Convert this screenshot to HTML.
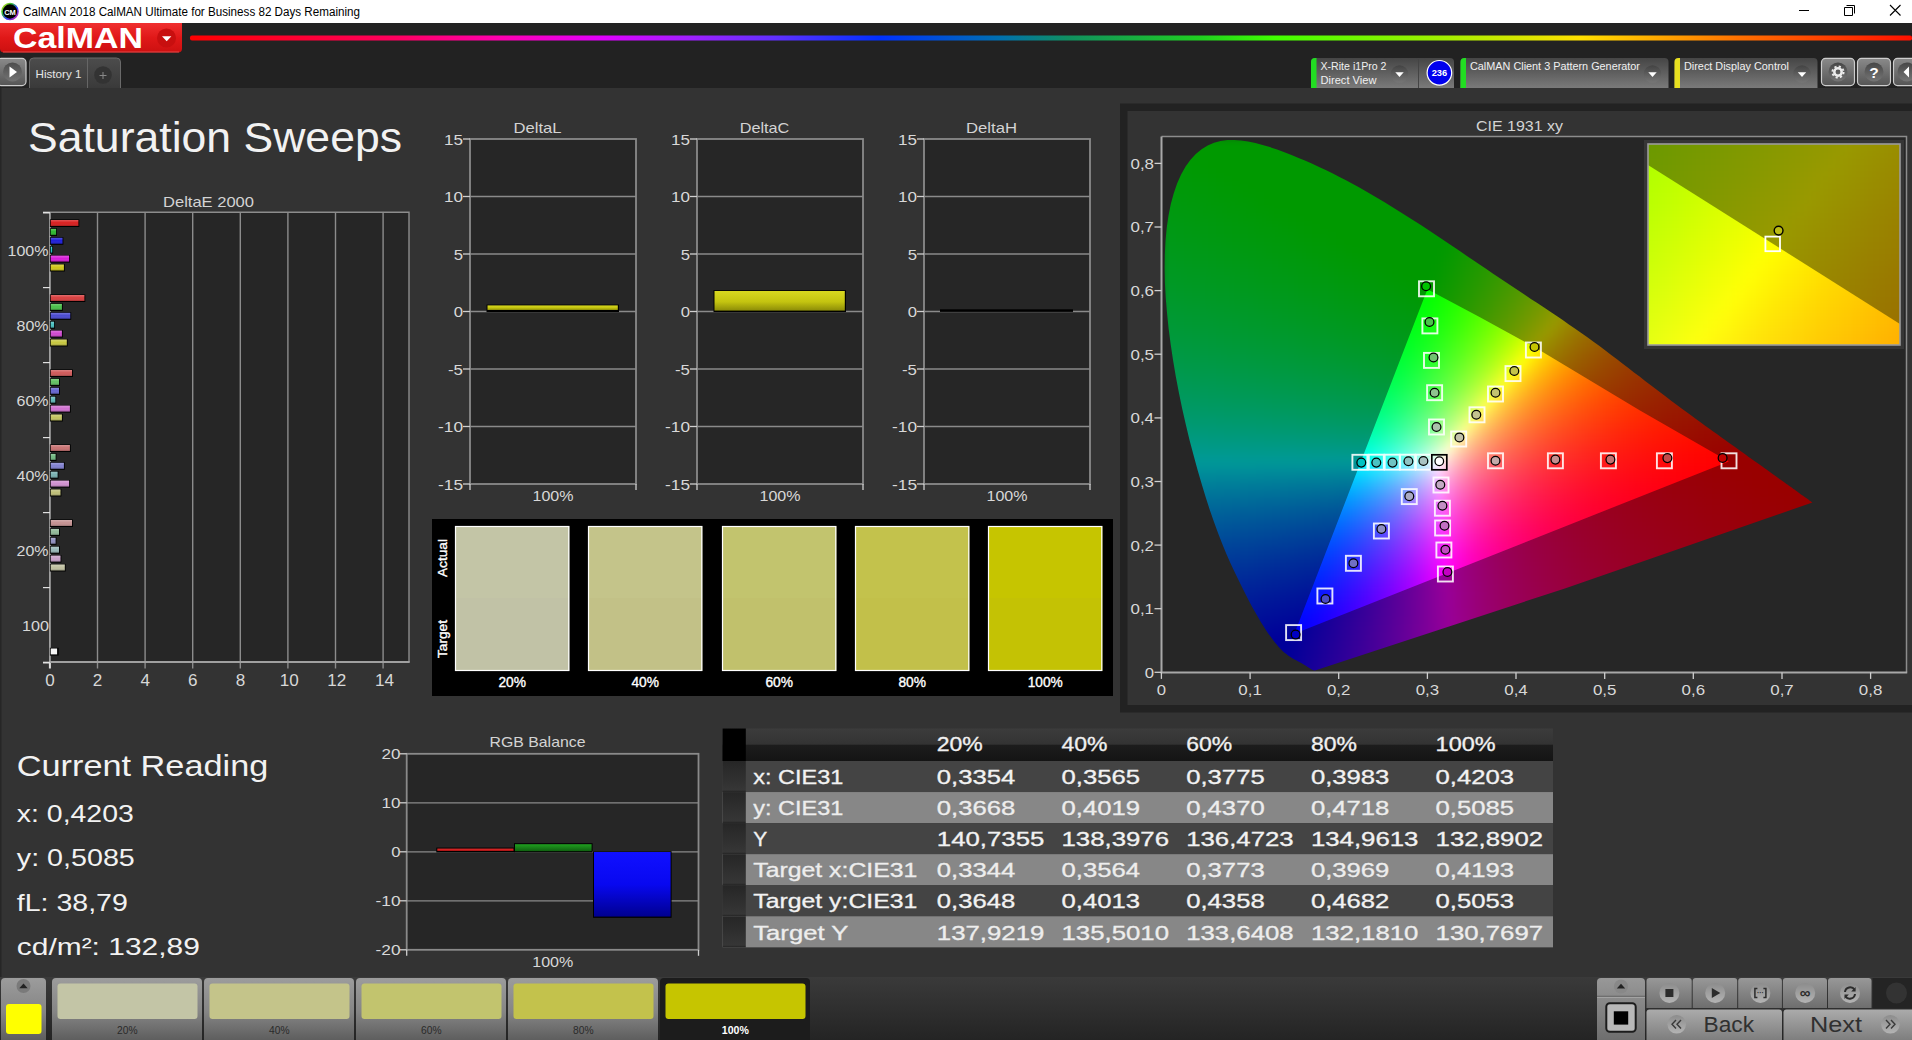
<!DOCTYPE html>
<html><head><meta charset="utf-8"><title>CalMAN 2018 - Saturation Sweeps</title>
<style>
html,body{margin:0;padding:0;background:#333;overflow:hidden}
body{width:1912px;height:1040px;font-family:"Liberation Sans",sans-serif}
svg{display:block;position:absolute;left:0;top:0}
svg text{font-family:"Liberation Sans",sans-serif;white-space:pre}
</style></head><body>
<svg width="1912" height="1040" viewBox="0 0 1912 1040">
<defs>
<linearGradient id="gRed" x1="0" y1="0" x2="0" y2="1"><stop offset="0" stop-color="#f03030"/><stop offset=".5" stop-color="#e01818"/><stop offset="1" stop-color="#cc1010"/></linearGradient>
<linearGradient id="gRb" x1="0" y1="0" x2="1" y2="0">
<stop offset="0" stop-color="#ff0000"/><stop offset=".12" stop-color="#ff0060"/><stop offset=".18" stop-color="#ff00b0"/><stop offset=".24" stop-color="#e000ff"/><stop offset=".29" stop-color="#a020ff"/><stop offset=".34" stop-color="#6030ff"/><stop offset=".40" stop-color="#0030ff"/><stop offset=".47" stop-color="#0070b0"/><stop offset=".51" stop-color="#109060"/><stop offset=".587" stop-color="#20d020"/><stop offset=".63" stop-color="#40ff00"/><stop offset=".726" stop-color="#a0f000"/><stop offset=".807" stop-color="#ffe000"/><stop offset=".90" stop-color="#ff7000"/><stop offset="1" stop-color="#ff1000"/></linearGradient>
<linearGradient id="gTab" x1="0" y1="0" x2="0" y2="1"><stop offset="0" stop-color="#454545"/><stop offset="1" stop-color="#7a7a7a"/></linearGradient>
<linearGradient id="gHist" x1="0" y1="0" x2="0" y2="1"><stop offset="0" stop-color="#4c4c4c"/><stop offset="1" stop-color="#3a3a3a"/></linearGradient>
<linearGradient id="gBtn" x1="0" y1="0" x2="0" y2="1"><stop offset="0" stop-color="#8a8a8a"/><stop offset="1" stop-color="#555"/></linearGradient>
<linearGradient id="gDdl" x1="0" y1="0" x2="0" y2="1"><stop offset="0" stop-color="#404040"/><stop offset="1" stop-color="#787878"/></linearGradient>
<radialGradient id="gDd"><stop offset="0" stop-color="#555"/><stop offset="1" stop-color="#666" stop-opacity=".0"/></radialGradient>
<linearGradient id="gIcon" x1="0" y1="0" x2="1" y2="1"><stop offset="0" stop-color="#f0e020"/><stop offset=".3" stop-color="#30c030"/><stop offset=".6" stop-color="#3040ff"/><stop offset="1" stop-color="#e020a0"/></linearGradient>
<linearGradient id="gloss" x1="0" y1="0" x2="0" y2="1"><stop offset="0" stop-color="#fff" stop-opacity=".25"/><stop offset=".5" stop-color="#fff" stop-opacity="0"/><stop offset="1" stop-color="#000" stop-opacity=".25"/></linearGradient>
<linearGradient id="gYel" x1="0" y1="0" x2="0" y2="1"><stop offset="0" stop-color="#d8d820"/><stop offset=".55" stop-color="#c4c410"/><stop offset="1" stop-color="#8c8c08"/></linearGradient>
<clipPath id="cLoc"><path d="M1315.8 670.3 L1314.7 670.4 L1313.6 670.3 L1312.6 669.9 L1311.7 669.4 L1310.8 668.9 L1309.7 668.3 L1308.5 667.5 L1307.6 666.9 L1306.6 666.3 L1305.4 665.5 L1304.1 664.7 L1302.5 663.8 L1300.8 662.8 L1299.9 662.3 L1298.9 661.8 L1297.8 661.2 L1296.7 660.6 L1295.6 660.0 L1294.4 659.4 L1293.2 658.7 L1291.9 657.9 L1290.5 657.1 L1289.2 656.2 L1287.8 655.2 L1286.4 654.1 L1284.9 653.0 L1283.4 651.7 L1281.9 650.2 L1280.2 648.6 L1278.5 646.7 L1276.7 644.6 L1274.7 642.2 L1272.7 639.5 L1270.5 636.6 L1268.2 633.4 L1265.9 629.9 L1263.4 626.1 L1260.8 621.9 L1258.1 617.3 L1255.2 612.3 L1252.2 606.9 L1249.0 600.9 L1245.7 594.5 L1242.2 587.5 L1238.5 580.1 L1234.6 572.0 L1230.6 563.4 L1226.4 554.0 L1222.3 544.0 L1218.1 533.3 L1214.0 521.9 L1209.8 509.9 L1205.7 497.2 L1201.6 483.8 L1197.5 469.8 L1193.5 455.1 L1189.5 440.0 L1185.8 424.5 L1182.2 408.7 L1178.9 392.7 L1175.8 376.6 L1173.1 360.5 L1170.7 344.4 L1168.6 328.5 L1167.0 312.8 L1165.7 297.4 L1164.9 282.5 L1164.6 268.1 L1164.8 254.2 L1165.5 240.8 L1166.7 227.9 L1168.5 215.6 L1170.8 204.1 L1173.7 193.4 L1177.1 183.5 L1181.1 174.6 L1185.6 166.6 L1190.5 159.7 L1195.8 153.9 L1201.6 149.2 L1207.7 145.5 L1214.0 142.8 L1220.5 141.0 L1227.3 140.0 L1234.1 139.9 L1241.1 140.4 L1248.2 141.4 L1255.4 143.0 L1262.6 144.9 L1269.9 147.1 L1277.1 149.5 L1284.4 152.2 L1291.5 155.0 L1298.6 157.9 L1305.5 160.8 L1312.3 163.8 L1319.1 166.9 L1325.7 170.1 L1332.4 173.3 L1339.0 176.7 L1345.5 180.1 L1352.0 183.6 L1358.5 187.1 L1365.0 190.7 L1371.4 194.4 L1377.8 198.2 L1384.2 202.0 L1390.6 205.9 L1397.0 209.9 L1403.4 213.9 L1409.7 217.9 L1416.1 222.0 L1422.4 226.1 L1428.8 230.3 L1435.1 234.5 L1441.5 238.7 L1447.8 243.0 L1454.2 247.3 L1460.5 251.6 L1466.9 255.9 L1473.3 260.2 L1479.6 264.5 L1486.0 268.8 L1492.4 273.2 L1498.8 277.5 L1505.2 281.8 L1511.6 286.1 L1518.0 290.3 L1524.4 294.6 L1530.9 298.9 L1537.3 303.1 L1543.7 307.3 L1550.0 311.6 L1556.4 315.8 L1562.7 320.1 L1568.9 324.4 L1575.2 328.7 L1581.3 333.0 L1587.4 337.3 L1593.5 341.7 L1599.5 346.1 L1605.4 350.5 L1611.2 354.9 L1617.0 359.3 L1622.7 363.7 L1628.4 368.0 L1634.0 372.4 L1639.6 376.6 L1645.1 380.9 L1650.5 385.0 L1655.8 389.1 L1661.1 393.1 L1666.4 397.0 L1671.5 400.9 L1676.6 404.7 L1681.6 408.4 L1686.5 412.0 L1691.3 415.5 L1696.0 418.9 L1700.5 422.2 L1704.8 425.4 L1709.1 428.4 L1713.2 431.4 L1717.3 434.3 L1721.2 437.2 L1725.1 440.0 L1728.9 442.7 L1732.5 445.3 L1736.1 447.8 L1739.4 450.2 L1742.7 452.5 L1745.8 454.7 L1748.7 456.9 L1751.6 458.9 L1754.4 460.9 L1757.0 462.8 L1759.5 464.6 L1762.0 466.3 L1764.3 468.0 L1766.5 469.6 L1768.6 471.1 L1770.6 472.6 L1772.6 474.0 L1774.4 475.3 L1776.2 476.5 L1777.9 477.7 L1779.5 478.9 L1781.0 480.0 L1782.5 481.0 L1783.9 482.1 L1785.2 483.0 L1786.5 483.9 L1787.8 484.8 L1789.0 485.7 L1790.1 486.5 L1791.3 487.3 L1792.3 488.1 L1793.4 488.9 L1794.4 489.6 L1795.4 490.3 L1796.3 490.9 L1797.2 491.6 L1798.0 492.2 L1798.8 492.8 L1800.3 493.9 L1801.7 494.9 L1803.0 495.7 L1804.0 496.5 L1805.0 497.2 L1805.9 497.8 L1807.0 498.6 L1808.0 499.3 L1809.0 500.0 L1809.8 500.7 L1810.7 501.3 L1811.6 501.9 L1812.4 502.5 L1564.9 588.4Z"/></clipPath>
<clipPath id="cTri"><path d="M1728.8 461.5 L1640.0 410.4 L1534.8 347.3 L1480.0 317.2 L1427.4 289.2 L1294.4 633.7 Z"/></clipPath>
<filter id="fB8" x="-5%" y="-5%" width="110%" height="110%" color-interpolation-filters="sRGB"><feGaussianBlur stdDeviation="4"/></filter>
<filter id="fB6" x="-5%" y="-5%" width="110%" height="110%" color-interpolation-filters="sRGB"><feGaussianBlur stdDeviation="3"/></filter>
<clipPath id="cIns"><rect x="1648" y="144" width="252" height="201"/></clipPath>
<clipPath id="cInsTri" clip-path="url(#cIns)"><path d="M2932.7 974.8L1147.7 -150.3L360.2 2099.9Z"/></clipPath>
<filter id="fB12" x="-10%" y="-10%" width="120%" height="120%" color-interpolation-filters="sRGB"><feGaussianBlur stdDeviation="6"/></filter>
<linearGradient id="gHdr" x1="0" y1="0" x2="0" y2="1"><stop offset="0" stop-color="#3c3c3c"/><stop offset=".48" stop-color="#333"/><stop offset=".52" stop-color="#1c1c1c"/><stop offset="1" stop-color="#141414"/></linearGradient>
<linearGradient id="gRowL" x1="0" y1="0" x2="0" y2="1"><stop offset="0" stop-color="#262626"/><stop offset=".93" stop-color="#363636"/><stop offset="1" stop-color="#222"/></linearGradient>
<linearGradient id="gBlue" x1="0" y1="0" x2="0" y2="1"><stop offset="0" stop-color="#1010ff"/><stop offset=".5" stop-color="#0808f0"/><stop offset="1" stop-color="#000090"/></linearGradient>
<linearGradient id="gGrn" x1="0" y1="0" x2="0" y2="1"><stop offset="0" stop-color="#20a020"/><stop offset="1" stop-color="#106010"/></linearGradient>
<linearGradient id="gRd" x1="0" y1="0" x2="0" y2="1"><stop offset="0" stop-color="#f03030"/><stop offset="1" stop-color="#a01010"/></linearGradient>
<linearGradient id="gBar" x1="0" y1="0" x2="0" y2="1"><stop offset="0" stop-color="#3a3a3a"/><stop offset="1" stop-color="#242424"/></linearGradient>
<linearGradient id="gSw" x1="0" y1="0" x2="0" y2="1"><stop offset="0" stop-color="#9c9c9c"/><stop offset=".55" stop-color="#858585"/><stop offset="1" stop-color="#5e5e5e"/></linearGradient>
<linearGradient id="gCt" x1="0" y1="0" x2="0" y2="1"><stop offset="0" stop-color="#989898"/><stop offset="1" stop-color="#6e6e6e"/></linearGradient>
<linearGradient id="gNav" x1="0" y1="0" x2="0" y2="1"><stop offset="0" stop-color="#ababab"/><stop offset="1" stop-color="#7e7e7e"/></linearGradient>
<linearGradient id="gDisc" x1="0" y1="0" x2="0" y2="1"><stop offset="0" stop-color="#8c8c8c"/><stop offset="1" stop-color="#b4b4b4"/></linearGradient>
</defs>
<rect x="0" y="0" width="1912" height="1040" fill="#333"/>
<g id="sec_top">
<rect x="0" y="0" width="1912" height="23" fill="#fff"/>
<circle cx="10" cy="11.5" r="8" fill="#000" stroke="url(#gIcon)" stroke-width="1.6"/>
<text x="10" y="14.5" font-size="7.5" fill="#fff" text-anchor="middle" font-weight="bold">CM</text>
<text x="23" y="16" font-size="12" fill="#000" textLength="337" lengthAdjust="spacingAndGlyphs">CalMAN 2018 CalMAN Ultimate for Business 82 Days Remaining</text>
<line x1="1799" y1="10.5" x2="1809" y2="10.5" stroke="#000" stroke-width="1"/>
<path d="M1846.5 5.5h8v8M1844.5 7.5h8v8h-8z" fill="none" stroke="#000" stroke-width="1"/>
<path d="M1890 5l10.5 10.5M1900.5 5l-10.5 10.5" stroke="#000" stroke-width="1.1" fill="none"/>
<rect x="0" y="23" width="1912" height="65" fill="#222"/>
<path d="M0 23h182v25.5a4 4 0 0 1-4 4h-174a4 4 0 0 1-4-4z" fill="url(#gRed)"/>
<path d="M3 52h176" stroke="#f06060" stroke-width="1" opacity=".7"/>
<text x="13" y="48" font-size="29.5" fill="#fff" textLength="130" lengthAdjust="spacingAndGlyphs" font-weight="bold">CalMAN</text>
<circle cx="166.5" cy="38" r="9.5" fill="#c80f0f"/><path d="M162 36.2h9.4l-4.7 5z" fill="#fff"/>
<rect x="190" y="35.5" width="1722" height="5" fill="url(#gRb)" rx="2"/>
<rect x="-3" y="58.4" width="29" height="27.2" rx="4" fill="url(#gBtn)" stroke="#cdcdcd" stroke-width="1.2"/>
<circle cx="12.5" cy="72" r="9.5" fill="url(#gDdl)" opacity=".8"/><path d="M9.5 66.5l7.5 5.5-7.5 5.5z" fill="#fff"/>
<path d="M29.5 88v-26a4 4 0 0 1 4-4h83a4 4 0 0 1 4 4v26z" fill="url(#gHist)"/><path d="M29.5 88v-26a4 4 0 0 1 4-4h83a4 4 0 0 1 4 4v26" fill="none" stroke="#6a6a6a" stroke-width="1"/>
<line x1="87.5" y1="58" x2="87.5" y2="88" stroke="#666" stroke-width="1"/>
<text x="35.5" y="78" font-size="11.5" fill="#e6e6e6" textLength="46" lengthAdjust="spacingAndGlyphs">History 1</text>
<circle cx="103" cy="75" r="8.8" fill="#333"/>
<path d="M99.5 75.5h7M103 72v7" stroke="#888" stroke-width="1"/>
<path d="M1311 88v-26a4 4 0 0 1 4-4h135a4 4 0 0 1 4 4v26z" fill="url(#gTab)"/>
<path d="M1311 88v-26a4 4 0 0 1 4-4h1.5v30z" fill="#22dd22"/>
<text x="1320.5" y="70.0" font-size="11" fill="#f0f0f0" textLength="66" lengthAdjust="spacingAndGlyphs">X-Rite i1Pro 2</text>
<text x="1320.5" y="83.7" font-size="11" fill="#f0f0f0" textLength="56" lengthAdjust="spacingAndGlyphs">Direct View</text>
<circle cx="1399.5" cy="74" r="8.8" fill="url(#gDdl)" opacity=".85"/>
<path d="M1395.3 72.3h8.4l-4.2 4.6z" fill="#fff"/>
<line x1="1418.5" y1="59" x2="1418.5" y2="88" stroke="#444" stroke-width="1"/>
<circle cx="1439.4" cy="72.8" r="12.3" fill="#0000ee" stroke="#fff" stroke-width="1.2"/>
<text x="1439.4" y="76.3" font-size="9.5" fill="#fff" text-anchor="middle" textLength="15.5" lengthAdjust="spacingAndGlyphs" font-weight="bold">236</text>
<path d="M1460.5 88v-26a4 4 0 0 1 4-4h200.0a4 4 0 0 1 4 4v26z" fill="url(#gTab)"/>
<path d="M1460.5 88v-26a4 4 0 0 1 4-4h1.5v30z" fill="#22dd22"/>
<text x="1470.0" y="70.0" font-size="11" fill="#f0f0f0" textLength="170" lengthAdjust="spacingAndGlyphs">CalMAN Client 3 Pattern Generator</text>
<circle cx="1652.5" cy="74" r="8.8" fill="url(#gDdl)" opacity=".85"/>
<path d="M1648.3 72.3h8.4l-4.2 4.6z" fill="#fff"/>
<path d="M1674.5 88v-26a4 4 0 0 1 4-4h135.0a4 4 0 0 1 4 4v26z" fill="url(#gTab)"/>
<path d="M1674.5 88v-26a4 4 0 0 1 4-4h1.5v30z" fill="#e8e020"/>
<text x="1684.0" y="70.0" font-size="11" fill="#f0f0f0" textLength="105" lengthAdjust="spacingAndGlyphs">Direct Display Control</text>
<circle cx="1802" cy="74" r="8.8" fill="url(#gDdl)" opacity=".85"/>
<path d="M1797.8 72.3h8.4l-4.2 4.6z" fill="#fff"/>
<rect x="1821.5" y="58.4" width="33.0" height="27.2" rx="4" fill="url(#gBtn)" stroke="#cdcdcd" stroke-width="1.2"/>
<rect x="1857.5" y="58.4" width="33.0" height="27.2" rx="4" fill="url(#gBtn)" stroke="#cdcdcd" stroke-width="1.2"/>
<rect x="1893.5" y="58.4" width="31.5" height="27.2" rx="4" fill="url(#gBtn)" stroke="#cdcdcd" stroke-width="1.2"/>
<circle cx="1838" cy="72" r="9.5" fill="url(#gDdl)" opacity=".9"/>
<circle cx="1838" cy="72" r="3.7" fill="none" stroke="#ececec" stroke-width="2.5"/>
<circle cx="1838" cy="72" r="5.6" fill="none" stroke="#ececec" stroke-width="1.9" stroke-dasharray="2.2 2.2"/>
<circle cx="1874" cy="72" r="9.5" fill="url(#gDdl)" opacity=".9"/>
<text x="1874" y="77.8" font-size="15.5" fill="#fff" text-anchor="middle" font-weight="bold">?</text>
<circle cx="1907" cy="72" r="9.5" fill="url(#gDdl)" opacity=".9"/><path d="M1909 66.5l-5.5 5.5 5.5 5.5z" fill="#fff"/>
</g>
<g id="sec_left">
<rect x="0" y="88" width="1.5" height="889" fill="#262626"/>
<text x="28" y="152" font-size="42" fill="#f2f2f2" textLength="374" lengthAdjust="spacingAndGlyphs">Saturation Sweeps</text>
<text x="208.5" y="206.5" font-size="15" fill="#d4d4d4" text-anchor="middle" textLength="91" lengthAdjust="spacingAndGlyphs">DeltaE 2000</text>
<rect x="49.9" y="212.2" width="359.1" height="449.8" fill="#262626"/>
<line x1="97.5" y1="212.2" x2="97.5" y2="668.5" stroke="#8c8c8c" stroke-width="1.4"/>
<line x1="145.1" y1="212.2" x2="145.1" y2="668.5" stroke="#8c8c8c" stroke-width="1.4"/>
<line x1="192.7" y1="212.2" x2="192.7" y2="668.5" stroke="#8c8c8c" stroke-width="1.4"/>
<line x1="240.3" y1="212.2" x2="240.3" y2="668.5" stroke="#8c8c8c" stroke-width="1.4"/>
<line x1="287.9" y1="212.2" x2="287.9" y2="668.5" stroke="#8c8c8c" stroke-width="1.4"/>
<line x1="335.5" y1="212.2" x2="335.5" y2="668.5" stroke="#8c8c8c" stroke-width="1.4"/>
<line x1="383.1" y1="212.2" x2="383.1" y2="668.5" stroke="#8c8c8c" stroke-width="1.4"/>
<line x1="49.9" y1="662.0" x2="49.9" y2="668.5" stroke="#ddd" stroke-width="2"/>
<path d="M49.9 212.2H409V662.0" fill="none" stroke="#8c8c8c" stroke-width="1.4"/>
<path d="M49.9 212.2V662.0H409.7" fill="none" stroke="#a0a0a0" stroke-width="1.8"/>
<line x1="43" y1="212.6" x2="49.9" y2="212.6" stroke="#e0e0e0" stroke-width="1.8"/>
<line x1="43" y1="287.6" x2="49.9" y2="287.6" stroke="#e0e0e0" stroke-width="1.2"/>
<line x1="43" y1="362.6" x2="49.9" y2="362.6" stroke="#e0e0e0" stroke-width="1.2"/>
<line x1="43" y1="437.6" x2="49.9" y2="437.6" stroke="#e0e0e0" stroke-width="1.2"/>
<line x1="43" y1="512.6" x2="49.9" y2="512.6" stroke="#e0e0e0" stroke-width="1.2"/>
<line x1="43" y1="587.6" x2="49.9" y2="587.6" stroke="#e0e0e0" stroke-width="1.2"/>
<line x1="43" y1="662.6" x2="49.9" y2="662.6" stroke="#e0e0e0" stroke-width="1.8"/>
<text x="48.5" y="255.6" font-size="15.5" fill="#d8d8d8" text-anchor="end" textLength="41" lengthAdjust="spacingAndGlyphs">100%</text>
<text x="48.5" y="330.6" font-size="15.5" fill="#d8d8d8" text-anchor="end" textLength="32" lengthAdjust="spacingAndGlyphs">80%</text>
<text x="48.5" y="405.6" font-size="15.5" fill="#d8d8d8" text-anchor="end" textLength="32" lengthAdjust="spacingAndGlyphs">60%</text>
<text x="48.5" y="480.6" font-size="15.5" fill="#d8d8d8" text-anchor="end" textLength="32" lengthAdjust="spacingAndGlyphs">40%</text>
<text x="48.5" y="555.6" font-size="15.5" fill="#d8d8d8" text-anchor="end" textLength="32" lengthAdjust="spacingAndGlyphs">20%</text>
<text x="49" y="630.6" font-size="15.5" fill="#d8d8d8" text-anchor="end" textLength="27" lengthAdjust="spacingAndGlyphs">100</text>
<text x="50.0" y="685.8" font-size="16" fill="#d8d8d8" text-anchor="middle" textLength="9.5" lengthAdjust="spacingAndGlyphs">0</text>
<text x="97.6" y="685.8" font-size="16" fill="#d8d8d8" text-anchor="middle" textLength="9.5" lengthAdjust="spacingAndGlyphs">2</text>
<text x="145.2" y="685.8" font-size="16" fill="#d8d8d8" text-anchor="middle" textLength="9.5" lengthAdjust="spacingAndGlyphs">4</text>
<text x="192.8" y="685.8" font-size="16" fill="#d8d8d8" text-anchor="middle" textLength="9.5" lengthAdjust="spacingAndGlyphs">6</text>
<text x="240.4" y="685.8" font-size="16" fill="#d8d8d8" text-anchor="middle" textLength="9.5" lengthAdjust="spacingAndGlyphs">8</text>
<text x="289.2" y="685.8" font-size="16" fill="#d8d8d8" text-anchor="middle" textLength="19" lengthAdjust="spacingAndGlyphs">10</text>
<text x="336.8" y="685.8" font-size="16" fill="#d8d8d8" text-anchor="middle" textLength="19" lengthAdjust="spacingAndGlyphs">12</text>
<text x="384.4" y="685.8" font-size="16" fill="#d8d8d8" text-anchor="middle" textLength="19" lengthAdjust="spacingAndGlyphs">14</text>
<rect x="49.9" y="219.4" width="29.4" height="7.6" fill="#000"/>
<rect x="50.699999999999996" y="220.0" width="27.7" height="6" fill="#d81c1c"/>
<rect x="50.699999999999996" y="220.0" width="27.7" height="6" fill="url(#gloss)"/>
<rect x="49.9" y="228.3" width="7.1" height="7.6" fill="#000"/>
<rect x="50.699999999999996" y="228.9" width="5.4" height="6" fill="#2cb82c"/>
<rect x="50.699999999999996" y="228.9" width="5.4" height="6" fill="url(#gloss)"/>
<rect x="49.9" y="237.2" width="13.5" height="7.6" fill="#000"/>
<rect x="50.699999999999996" y="237.8" width="11.8" height="6" fill="#1c1cd8"/>
<rect x="50.699999999999996" y="237.8" width="11.8" height="6" fill="url(#gloss)"/>
<rect x="49.9" y="246.1" width="3.2" height="7.6" fill="#000"/>
<rect x="50.699999999999996" y="246.7" width="1.5" height="6" fill="#20c8c8"/>
<rect x="50.699999999999996" y="246.7" width="1.5" height="6" fill="url(#gloss)"/>
<rect x="49.9" y="255.0" width="20.1" height="7.6" fill="#000"/>
<rect x="50.699999999999996" y="255.6" width="18.4" height="6" fill="#d81cd8"/>
<rect x="50.699999999999996" y="255.6" width="18.4" height="6" fill="url(#gloss)"/>
<rect x="49.9" y="263.9" width="14.9" height="7.6" fill="#000"/>
<rect x="50.699999999999996" y="264.5" width="13.2" height="6" fill="#d0c818"/>
<rect x="50.699999999999996" y="264.5" width="13.2" height="6" fill="url(#gloss)"/>
<rect x="49.9" y="294.4" width="35.4" height="7.6" fill="#000"/>
<rect x="50.699999999999996" y="295.0" width="33.7" height="6" fill="#d83c3c"/>
<rect x="50.699999999999996" y="295.0" width="33.7" height="6" fill="url(#gloss)"/>
<rect x="49.9" y="303.3" width="12.9" height="7.6" fill="#000"/>
<rect x="50.699999999999996" y="303.9" width="11.2" height="6" fill="#48c048"/>
<rect x="50.699999999999996" y="303.9" width="11.2" height="6" fill="url(#gloss)"/>
<rect x="49.9" y="312.2" width="21.3" height="7.6" fill="#000"/>
<rect x="50.699999999999996" y="312.8" width="19.6" height="6" fill="#4848d0"/>
<rect x="50.699999999999996" y="312.8" width="19.6" height="6" fill="url(#gloss)"/>
<rect x="49.9" y="321.1" width="5.1" height="7.6" fill="#000"/>
<rect x="50.699999999999996" y="321.7" width="3.4" height="6" fill="#48c0c0"/>
<rect x="50.699999999999996" y="321.7" width="3.4" height="6" fill="url(#gloss)"/>
<rect x="49.9" y="330.0" width="12.9" height="7.6" fill="#000"/>
<rect x="50.699999999999996" y="330.6" width="11.2" height="6" fill="#d048d0"/>
<rect x="50.699999999999996" y="330.6" width="11.2" height="6" fill="url(#gloss)"/>
<rect x="49.9" y="338.9" width="17.8" height="7.6" fill="#000"/>
<rect x="50.699999999999996" y="339.5" width="16.1" height="6" fill="#c8c840"/>
<rect x="50.699999999999996" y="339.5" width="16.1" height="6" fill="url(#gloss)"/>
<rect x="49.9" y="369.4" width="23.0" height="7.6" fill="#000"/>
<rect x="50.699999999999996" y="370.0" width="21.3" height="6" fill="#d05858"/>
<rect x="50.699999999999996" y="370.0" width="21.3" height="6" fill="url(#gloss)"/>
<rect x="49.9" y="378.3" width="10.0" height="7.6" fill="#000"/>
<rect x="50.699999999999996" y="378.9" width="8.3" height="6" fill="#60c060"/>
<rect x="50.699999999999996" y="378.9" width="8.3" height="6" fill="url(#gloss)"/>
<rect x="49.9" y="387.2" width="10.0" height="7.6" fill="#000"/>
<rect x="50.699999999999996" y="387.8" width="8.3" height="6" fill="#6464d0"/>
<rect x="50.699999999999996" y="387.8" width="8.3" height="6" fill="url(#gloss)"/>
<rect x="49.9" y="396.1" width="6.3" height="7.6" fill="#000"/>
<rect x="50.699999999999996" y="396.7" width="4.6" height="6" fill="#60b8b8"/>
<rect x="50.699999999999996" y="396.7" width="4.6" height="6" fill="url(#gloss)"/>
<rect x="49.9" y="405.0" width="20.9" height="7.6" fill="#000"/>
<rect x="50.699999999999996" y="405.6" width="19.2" height="6" fill="#d070d0"/>
<rect x="50.699999999999996" y="405.6" width="19.2" height="6" fill="url(#gloss)"/>
<rect x="49.9" y="413.9" width="12.9" height="7.6" fill="#000"/>
<rect x="50.699999999999996" y="414.5" width="11.2" height="6" fill="#c4c460"/>
<rect x="50.699999999999996" y="414.5" width="11.2" height="6" fill="url(#gloss)"/>
<rect x="49.9" y="444.4" width="20.9" height="7.6" fill="#000"/>
<rect x="50.699999999999996" y="445.0" width="19.2" height="6" fill="#c87070"/>
<rect x="50.699999999999996" y="445.0" width="19.2" height="6" fill="url(#gloss)"/>
<rect x="49.9" y="453.3" width="6.6" height="7.6" fill="#000"/>
<rect x="50.699999999999996" y="453.9" width="4.9" height="6" fill="#70b880"/>
<rect x="50.699999999999996" y="453.9" width="4.9" height="6" fill="url(#gloss)"/>
<rect x="49.9" y="462.2" width="14.9" height="7.6" fill="#000"/>
<rect x="50.699999999999996" y="462.8" width="13.2" height="6" fill="#8080d0"/>
<rect x="50.699999999999996" y="462.8" width="13.2" height="6" fill="url(#gloss)"/>
<rect x="49.9" y="471.1" width="8.6" height="7.6" fill="#000"/>
<rect x="50.699999999999996" y="471.7" width="6.9" height="6" fill="#78b0b0"/>
<rect x="50.699999999999996" y="471.7" width="6.9" height="6" fill="url(#gloss)"/>
<rect x="49.9" y="480.0" width="20.1" height="7.6" fill="#000"/>
<rect x="50.699999999999996" y="480.6" width="18.4" height="6" fill="#d090d0"/>
<rect x="50.699999999999996" y="480.6" width="18.4" height="6" fill="url(#gloss)"/>
<rect x="49.9" y="488.9" width="11.5" height="7.6" fill="#000"/>
<rect x="50.699999999999996" y="489.5" width="9.8" height="6" fill="#c0c078"/>
<rect x="50.699999999999996" y="489.5" width="9.8" height="6" fill="url(#gloss)"/>
<rect x="49.9" y="519.4" width="23.0" height="7.6" fill="#000"/>
<rect x="50.699999999999996" y="520.0" width="21.3" height="6" fill="#c49090"/>
<rect x="50.699999999999996" y="520.0" width="21.3" height="6" fill="url(#gloss)"/>
<rect x="49.9" y="528.3" width="10.0" height="7.6" fill="#000"/>
<rect x="50.699999999999996" y="528.9" width="8.3" height="6" fill="#90b898"/>
<rect x="50.699999999999996" y="528.9" width="8.3" height="6" fill="url(#gloss)"/>
<rect x="49.9" y="537.2" width="6.6" height="7.6" fill="#000"/>
<rect x="50.699999999999996" y="537.8" width="4.9" height="6" fill="#9090c0"/>
<rect x="50.699999999999996" y="537.8" width="4.9" height="6" fill="url(#gloss)"/>
<rect x="49.9" y="546.1" width="10.0" height="7.6" fill="#000"/>
<rect x="50.699999999999996" y="546.7" width="8.3" height="6" fill="#98b8b8"/>
<rect x="50.699999999999996" y="546.7" width="8.3" height="6" fill="url(#gloss)"/>
<rect x="49.9" y="555.0" width="11.5" height="7.6" fill="#000"/>
<rect x="50.699999999999996" y="555.6" width="9.8" height="6" fill="#c8a0c8"/>
<rect x="50.699999999999996" y="555.6" width="9.8" height="6" fill="url(#gloss)"/>
<rect x="49.9" y="563.9" width="15.8" height="7.6" fill="#000"/>
<rect x="50.699999999999996" y="564.5" width="14.1" height="6" fill="#c0c0a0"/>
<rect x="50.699999999999996" y="564.5" width="14.1" height="6" fill="url(#gloss)"/>
<rect x="49.9" y="647.8" width="8.8" height="7.8" fill="#000"/>
<rect x="50.699999999999996" y="648.5" width="6.4" height="5.9" fill="#f4f4f4"/>
</g>
<g id="sec_mid">
<rect x="470" y="139.0" width="166" height="345.0" fill="#262626"/>
<line x1="470" y1="196.5" x2="636" y2="196.5" stroke="#8a8a8a" stroke-width="1.3"/>
<line x1="470" y1="254.0" x2="636" y2="254.0" stroke="#8a8a8a" stroke-width="1.3"/>
<line x1="470" y1="311.5" x2="636" y2="311.5" stroke="#8a8a8a" stroke-width="1.3"/>
<line x1="470" y1="369.0" x2="636" y2="369.0" stroke="#8a8a8a" stroke-width="1.3"/>
<line x1="470" y1="426.5" x2="636" y2="426.5" stroke="#8a8a8a" stroke-width="1.3"/>
<rect x="470" y="139.0" width="166" height="345.0" fill="none" stroke="#8a8a8a" stroke-width="1.8"/>
<line x1="463" y1="139.0" x2="470" y2="139.0" stroke="#cfcfcf" stroke-width="1.3"/>
<text x="463" y="144.6" font-size="15.5" fill="#d8d8d8" text-anchor="end" textLength="19" lengthAdjust="spacingAndGlyphs">15</text>
<line x1="463" y1="196.5" x2="470" y2="196.5" stroke="#cfcfcf" stroke-width="1.3"/>
<text x="463" y="202.1" font-size="15.5" fill="#d8d8d8" text-anchor="end" textLength="19" lengthAdjust="spacingAndGlyphs">10</text>
<line x1="463" y1="254.0" x2="470" y2="254.0" stroke="#cfcfcf" stroke-width="1.3"/>
<text x="463" y="259.6" font-size="15.5" fill="#d8d8d8" text-anchor="end" textLength="9.3" lengthAdjust="spacingAndGlyphs">5</text>
<line x1="463" y1="311.5" x2="470" y2="311.5" stroke="#cfcfcf" stroke-width="1.3"/>
<text x="463" y="317.1" font-size="15.5" fill="#d8d8d8" text-anchor="end" textLength="9.3" lengthAdjust="spacingAndGlyphs">0</text>
<line x1="463" y1="369.0" x2="470" y2="369.0" stroke="#cfcfcf" stroke-width="1.3"/>
<text x="463" y="374.6" font-size="15.5" fill="#d8d8d8" text-anchor="end" textLength="15" lengthAdjust="spacingAndGlyphs">-5</text>
<line x1="463" y1="426.5" x2="470" y2="426.5" stroke="#cfcfcf" stroke-width="1.3"/>
<text x="463" y="432.1" font-size="15.5" fill="#d8d8d8" text-anchor="end" textLength="25" lengthAdjust="spacingAndGlyphs">-10</text>
<line x1="463" y1="484.0" x2="470" y2="484.0" stroke="#cfcfcf" stroke-width="1.3"/>
<text x="463" y="489.6" font-size="15.5" fill="#d8d8d8" text-anchor="end" textLength="25" lengthAdjust="spacingAndGlyphs">-15</text>
<line x1="470" y1="484.0" x2="470" y2="490.0" stroke="#cfcfcf" stroke-width="1.3"/>
<line x1="636" y1="484.0" x2="636" y2="490.0" stroke="#cfcfcf" stroke-width="1.3"/>
<text x="537.5" y="132.5" font-size="15" fill="#d4d4d4" text-anchor="middle" textLength="48" lengthAdjust="spacingAndGlyphs">DeltaL</text>
<text x="553.0" y="500.5" font-size="15.5" fill="#d8d8d8" text-anchor="middle" textLength="41" lengthAdjust="spacingAndGlyphs">100%</text>
<rect x="697" y="139.0" width="166" height="345.0" fill="#262626"/>
<line x1="697" y1="196.5" x2="863" y2="196.5" stroke="#8a8a8a" stroke-width="1.3"/>
<line x1="697" y1="254.0" x2="863" y2="254.0" stroke="#8a8a8a" stroke-width="1.3"/>
<line x1="697" y1="311.5" x2="863" y2="311.5" stroke="#8a8a8a" stroke-width="1.3"/>
<line x1="697" y1="369.0" x2="863" y2="369.0" stroke="#8a8a8a" stroke-width="1.3"/>
<line x1="697" y1="426.5" x2="863" y2="426.5" stroke="#8a8a8a" stroke-width="1.3"/>
<rect x="697" y="139.0" width="166" height="345.0" fill="none" stroke="#8a8a8a" stroke-width="1.8"/>
<line x1="690" y1="139.0" x2="697" y2="139.0" stroke="#cfcfcf" stroke-width="1.3"/>
<text x="690" y="144.6" font-size="15.5" fill="#d8d8d8" text-anchor="end" textLength="19" lengthAdjust="spacingAndGlyphs">15</text>
<line x1="690" y1="196.5" x2="697" y2="196.5" stroke="#cfcfcf" stroke-width="1.3"/>
<text x="690" y="202.1" font-size="15.5" fill="#d8d8d8" text-anchor="end" textLength="19" lengthAdjust="spacingAndGlyphs">10</text>
<line x1="690" y1="254.0" x2="697" y2="254.0" stroke="#cfcfcf" stroke-width="1.3"/>
<text x="690" y="259.6" font-size="15.5" fill="#d8d8d8" text-anchor="end" textLength="9.3" lengthAdjust="spacingAndGlyphs">5</text>
<line x1="690" y1="311.5" x2="697" y2="311.5" stroke="#cfcfcf" stroke-width="1.3"/>
<text x="690" y="317.1" font-size="15.5" fill="#d8d8d8" text-anchor="end" textLength="9.3" lengthAdjust="spacingAndGlyphs">0</text>
<line x1="690" y1="369.0" x2="697" y2="369.0" stroke="#cfcfcf" stroke-width="1.3"/>
<text x="690" y="374.6" font-size="15.5" fill="#d8d8d8" text-anchor="end" textLength="15" lengthAdjust="spacingAndGlyphs">-5</text>
<line x1="690" y1="426.5" x2="697" y2="426.5" stroke="#cfcfcf" stroke-width="1.3"/>
<text x="690" y="432.1" font-size="15.5" fill="#d8d8d8" text-anchor="end" textLength="25" lengthAdjust="spacingAndGlyphs">-10</text>
<line x1="690" y1="484.0" x2="697" y2="484.0" stroke="#cfcfcf" stroke-width="1.3"/>
<text x="690" y="489.6" font-size="15.5" fill="#d8d8d8" text-anchor="end" textLength="25" lengthAdjust="spacingAndGlyphs">-15</text>
<line x1="697" y1="484.0" x2="697" y2="490.0" stroke="#cfcfcf" stroke-width="1.3"/>
<line x1="863" y1="484.0" x2="863" y2="490.0" stroke="#cfcfcf" stroke-width="1.3"/>
<text x="764.5" y="132.5" font-size="15" fill="#d4d4d4" text-anchor="middle" textLength="49.7" lengthAdjust="spacingAndGlyphs">DeltaC</text>
<text x="780.0" y="500.5" font-size="15.5" fill="#d8d8d8" text-anchor="middle" textLength="41" lengthAdjust="spacingAndGlyphs">100%</text>
<rect x="924" y="139.0" width="166" height="345.0" fill="#262626"/>
<line x1="924" y1="196.5" x2="1090" y2="196.5" stroke="#8a8a8a" stroke-width="1.3"/>
<line x1="924" y1="254.0" x2="1090" y2="254.0" stroke="#8a8a8a" stroke-width="1.3"/>
<line x1="924" y1="311.5" x2="1090" y2="311.5" stroke="#8a8a8a" stroke-width="1.3"/>
<line x1="924" y1="369.0" x2="1090" y2="369.0" stroke="#8a8a8a" stroke-width="1.3"/>
<line x1="924" y1="426.5" x2="1090" y2="426.5" stroke="#8a8a8a" stroke-width="1.3"/>
<rect x="924" y="139.0" width="166" height="345.0" fill="none" stroke="#8a8a8a" stroke-width="1.8"/>
<line x1="917" y1="139.0" x2="924" y2="139.0" stroke="#cfcfcf" stroke-width="1.3"/>
<text x="917" y="144.6" font-size="15.5" fill="#d8d8d8" text-anchor="end" textLength="19" lengthAdjust="spacingAndGlyphs">15</text>
<line x1="917" y1="196.5" x2="924" y2="196.5" stroke="#cfcfcf" stroke-width="1.3"/>
<text x="917" y="202.1" font-size="15.5" fill="#d8d8d8" text-anchor="end" textLength="19" lengthAdjust="spacingAndGlyphs">10</text>
<line x1="917" y1="254.0" x2="924" y2="254.0" stroke="#cfcfcf" stroke-width="1.3"/>
<text x="917" y="259.6" font-size="15.5" fill="#d8d8d8" text-anchor="end" textLength="9.3" lengthAdjust="spacingAndGlyphs">5</text>
<line x1="917" y1="311.5" x2="924" y2="311.5" stroke="#cfcfcf" stroke-width="1.3"/>
<text x="917" y="317.1" font-size="15.5" fill="#d8d8d8" text-anchor="end" textLength="9.3" lengthAdjust="spacingAndGlyphs">0</text>
<line x1="917" y1="369.0" x2="924" y2="369.0" stroke="#cfcfcf" stroke-width="1.3"/>
<text x="917" y="374.6" font-size="15.5" fill="#d8d8d8" text-anchor="end" textLength="15" lengthAdjust="spacingAndGlyphs">-5</text>
<line x1="917" y1="426.5" x2="924" y2="426.5" stroke="#cfcfcf" stroke-width="1.3"/>
<text x="917" y="432.1" font-size="15.5" fill="#d8d8d8" text-anchor="end" textLength="25" lengthAdjust="spacingAndGlyphs">-10</text>
<line x1="917" y1="484.0" x2="924" y2="484.0" stroke="#cfcfcf" stroke-width="1.3"/>
<text x="917" y="489.6" font-size="15.5" fill="#d8d8d8" text-anchor="end" textLength="25" lengthAdjust="spacingAndGlyphs">-15</text>
<line x1="924" y1="484.0" x2="924" y2="490.0" stroke="#cfcfcf" stroke-width="1.3"/>
<line x1="1090" y1="484.0" x2="1090" y2="490.0" stroke="#cfcfcf" stroke-width="1.3"/>
<text x="991.5" y="132.5" font-size="15" fill="#d4d4d4" text-anchor="middle" textLength="51" lengthAdjust="spacingAndGlyphs">DeltaH</text>
<text x="1007.0" y="500.5" font-size="15.5" fill="#d8d8d8" text-anchor="middle" textLength="41" lengthAdjust="spacingAndGlyphs">100%</text>
<rect x="486.5" y="304.6" width="132.5" height="7.499999999999977" fill="#000"/>
<rect x="487.5" y="305.4" width="130.3" height="4.6" fill="url(#gYel)"/>
<rect x="713.5" y="290.2" width="132.5" height="21.900000000000013" fill="#000"/>
<rect x="714.5" y="291.0" width="130.3" height="19.6" fill="url(#gYel)"/>
<rect x="940" y="309.3" width="133" height="2.6" fill="#000"/>
<rect x="432" y="519" width="681" height="177" fill="#000"/>
<rect x="455" y="526" width="114.3" height="72" fill="#c3c5a6"/>
<rect x="455" y="598" width="114.3" height="73" fill="#c1c2a6"/>
<rect x="455.5" y="526.5" width="113.3" height="144" fill="none" stroke="#fff" stroke-width="1.2"/>
<text x="512.2" y="687.1" font-size="14" fill="#fff" text-anchor="middle" textLength="27.5" lengthAdjust="spacingAndGlyphs" stroke="#fff" stroke-width=".35">20%</text>
<rect x="588" y="526" width="114.3" height="72" fill="#c4c48a"/>
<rect x="588" y="598" width="114.3" height="73" fill="#c2c187"/>
<rect x="588.5" y="526.5" width="113.3" height="144" fill="none" stroke="#fff" stroke-width="1.2"/>
<text x="645.2" y="687.1" font-size="14" fill="#fff" text-anchor="middle" textLength="27.5" lengthAdjust="spacingAndGlyphs" stroke="#fff" stroke-width=".35">40%</text>
<rect x="722" y="526" width="114.3" height="72" fill="#c2c46e"/>
<rect x="722" y="598" width="114.3" height="73" fill="#c1c16c"/>
<rect x="722.5" y="526.5" width="113.3" height="144" fill="none" stroke="#fff" stroke-width="1.2"/>
<text x="779.2" y="687.1" font-size="14" fill="#fff" text-anchor="middle" textLength="27.5" lengthAdjust="spacingAndGlyphs" stroke="#fff" stroke-width=".35">60%</text>
<rect x="855" y="526" width="114.3" height="72" fill="#c3c24c"/>
<rect x="855" y="598" width="114.3" height="73" fill="#c2c04a"/>
<rect x="855.5" y="526.5" width="113.3" height="144" fill="none" stroke="#fff" stroke-width="1.2"/>
<text x="912.2" y="687.1" font-size="14" fill="#fff" text-anchor="middle" textLength="27.5" lengthAdjust="spacingAndGlyphs" stroke="#fff" stroke-width=".35">80%</text>
<rect x="988" y="526" width="114.3" height="72" fill="#c6c500"/>
<rect x="988" y="598" width="114.3" height="73" fill="#c4c204"/>
<rect x="988.5" y="526.5" width="113.3" height="144" fill="none" stroke="#fff" stroke-width="1.2"/>
<text x="1045.2" y="687.1" font-size="14" fill="#fff" text-anchor="middle" textLength="35" lengthAdjust="spacingAndGlyphs" stroke="#fff" stroke-width=".35">100%</text>
<text transform="translate(446.5 558) rotate(-90)" font-size="13.5" fill="#fff" stroke="#fff" stroke-width=".35" text-anchor="middle" textLength="38" lengthAdjust="spacingAndGlyphs">Actual</text>
<text transform="translate(446.5 639) rotate(-90)" font-size="13.5" fill="#fff" stroke="#fff" stroke-width=".35" text-anchor="middle" textLength="38" lengthAdjust="spacingAndGlyphs">Target</text>
</g>
<g id="sec_cie">
<rect x="1120" y="103.5" width="800" height="609" fill="#222"/>
<rect x="1127.5" y="111" width="800" height="594" fill="#333"/>
<text x="1519.5" y="131" font-size="15" fill="#d4d4d4" text-anchor="middle" textLength="87" lengthAdjust="spacingAndGlyphs">CIE 1931 xy</text>
<rect x="1161.5" y="136.5" width="745.0" height="535.9" fill="#262626"/>
<g clip-path="url(#cLoc)"><g filter="url(#fB8)" stroke-width="8.5" fill="none"><path d="M1192 140h96.5" stroke="#009900"/><path d="M1184 148h128.5" stroke="#009900"/><path d="M1176 156h8.5" stroke="#009902"/><path d="M1184 156h8.5" stroke="#009901"/><path d="M1192 156h136.5" stroke="#009900"/><path d="M1168 164h16.5" stroke="#009904"/><path d="M1184 164h8.5" stroke="#009902"/><path d="M1192 164h16.5" stroke="#009901"/><path d="M1208 164h136.5" stroke="#009900"/><path d="M1168 172h8.5" stroke="#009906"/><path d="M1176 172h8.5" stroke="#009905"/><path d="M1184 172h8.5" stroke="#009904"/><path d="M1192 172h8.5" stroke="#009903"/><path d="M1200 172h8.5" stroke="#009902"/><path d="M1208 172h8.5" stroke="#009901"/><path d="M1216 172h144.5" stroke="#009900"/><path d="M1160 180h16.5" stroke="#009908"/><path d="M1176 180h8.5" stroke="#009907"/><path d="M1184 180h8.5" stroke="#009906"/><path d="M1192 180h8.5" stroke="#009905"/><path d="M1200 180h8.5" stroke="#009904"/><path d="M1208 180h8.5" stroke="#009903"/><path d="M1216 180h8.5" stroke="#009902"/><path d="M1224 180h8.5" stroke="#009901"/><path d="M1232 180h144.5" stroke="#009900"/><path d="M1160 188h16.5" stroke="#00990a"/><path d="M1176 188h16.5" stroke="#009908"/><path d="M1192 188h8.5" stroke="#009907"/><path d="M1200 188h8.5" stroke="#009906"/><path d="M1208 188h8.5" stroke="#009905"/><path d="M1216 188h8.5" stroke="#009904"/><path d="M1224 188h8.5" stroke="#009903"/><path d="M1232 188h8.5" stroke="#009902"/><path d="M1240 188h8.5" stroke="#009901"/><path d="M1248 188h144.5" stroke="#009900"/><path d="M1160 196h8.5" stroke="#00990d"/><path d="M1168 196h8.5" stroke="#00990b"/><path d="M1176 196h16.5" stroke="#00990a"/><path d="M1192 196h16.5" stroke="#009908"/><path d="M1208 196h8.5" stroke="#009907"/><path d="M1216 196h16.5" stroke="#009905"/><path d="M1232 196h8.5" stroke="#009904"/><path d="M1240 196h16.5" stroke="#009902"/><path d="M1256 196h8.5" stroke="#009901"/><path d="M1264 196h136.5" stroke="#009900"/><path d="M1160 204h8.5" stroke="#00990e"/><path d="M1168 204h16.5" stroke="#00990d"/><path d="M1184 204h16.5" stroke="#00990b"/><path d="M1200 204h8.5" stroke="#00990a"/><path d="M1208 204h16.5" stroke="#009908"/><path d="M1224 204h8.5" stroke="#009907"/><path d="M1232 204h16.5" stroke="#009905"/><path d="M1248 204h8.5" stroke="#009904"/><path d="M1256 204h8.5" stroke="#009902"/><path d="M1264 204h16.5" stroke="#009901"/><path d="M1280 204h136.5" stroke="#009900"/><path d="M1160 212h16.5" stroke="#009910"/><path d="M1176 212h16.5" stroke="#00990e"/><path d="M1192 212h8.5" stroke="#00990d"/><path d="M1200 212h16.5" stroke="#00990b"/><path d="M1216 212h8.5" stroke="#00990a"/><path d="M1224 212h16.5" stroke="#009908"/><path d="M1240 212h8.5" stroke="#009907"/><path d="M1248 212h8.5" stroke="#009905"/><path d="M1256 212h16.5" stroke="#009904"/><path d="M1272 212h8.5" stroke="#009902"/><path d="M1280 212h8.5" stroke="#009901"/><path d="M1288 212h136.5" stroke="#009900"/><path d="M1160 220h8.5" stroke="#009913"/><path d="M1168 220h16.5" stroke="#009911"/><path d="M1184 220h8.5" stroke="#009910"/><path d="M1192 220h16.5" stroke="#00990e"/><path d="M1208 220h8.5" stroke="#00990d"/><path d="M1216 220h8.5" stroke="#00990c"/><path d="M1224 220h8.5" stroke="#00990b"/><path d="M1232 220h8.5" stroke="#00990a"/><path d="M1240 220h16.5" stroke="#009908"/><path d="M1256 220h8.5" stroke="#009907"/><path d="M1264 220h8.5" stroke="#009905"/><path d="M1272 220h8.5" stroke="#009904"/><path d="M1280 220h8.5" stroke="#009903"/><path d="M1288 220h8.5" stroke="#009902"/><path d="M1296 220h8.5" stroke="#009901"/><path d="M1304 220h136.5" stroke="#009900"/><path d="M1160 228h16.5" stroke="#009914"/><path d="M1176 228h8.5" stroke="#009913"/><path d="M1184 228h8.5" stroke="#009912"/><path d="M1192 228h8.5" stroke="#009911"/><path d="M1200 228h8.5" stroke="#009910"/><path d="M1208 228h8.5" stroke="#00990f"/><path d="M1216 228h8.5" stroke="#00990e"/><path d="M1224 228h8.5" stroke="#00990d"/><path d="M1232 228h8.5" stroke="#00990c"/><path d="M1240 228h8.5" stroke="#00990b"/><path d="M1248 228h8.5" stroke="#00990a"/><path d="M1256 228h16.5" stroke="#009908"/><path d="M1272 228h8.5" stroke="#009907"/><path d="M1280 228h8.5" stroke="#009905"/><path d="M1288 228h8.5" stroke="#009904"/><path d="M1296 228h8.5" stroke="#009903"/><path d="M1304 228h8.5" stroke="#009902"/><path d="M1312 228h8.5" stroke="#009901"/><path d="M1320 228h128.5" stroke="#009900"/><path d="M1160 236h8.5" stroke="#009917"/><path d="M1168 236h8.5" stroke="#009916"/><path d="M1176 236h8.5" stroke="#009915"/><path d="M1184 236h8.5" stroke="#009914"/><path d="M1192 236h8.5" stroke="#009913"/><path d="M1200 236h8.5" stroke="#009912"/><path d="M1208 236h8.5" stroke="#009911"/><path d="M1216 236h8.5" stroke="#009910"/><path d="M1224 236h8.5" stroke="#00990f"/><path d="M1232 236h8.5" stroke="#00990e"/><path d="M1240 236h8.5" stroke="#00990d"/><path d="M1248 236h8.5" stroke="#00990c"/><path d="M1256 236h8.5" stroke="#00990b"/><path d="M1264 236h8.5" stroke="#00990a"/><path d="M1272 236h16.5" stroke="#009908"/><path d="M1288 236h8.5" stroke="#009907"/><path d="M1296 236h8.5" stroke="#009905"/><path d="M1304 236h8.5" stroke="#009904"/><path d="M1312 236h8.5" stroke="#009903"/><path d="M1320 236h8.5" stroke="#009902"/><path d="M1328 236h8.5" stroke="#009901"/><path d="M1336 236h112.5" stroke="#009900"/><path d="M1448 236h8.5" stroke="#039900"/><path d="M1456 236h8.5" stroke="#089900"/><path d="M1160 244h8.5" stroke="#009919"/><path d="M1168 244h8.5" stroke="#009918"/><path d="M1176 244h8.5" stroke="#009917"/><path d="M1184 244h16.5" stroke="#009916"/><path d="M1200 244h8.5" stroke="#009914"/><path d="M1208 244h16.5" stroke="#009913"/><path d="M1224 244h8.5" stroke="#009911"/><path d="M1232 244h8.5" stroke="#009910"/><path d="M1240 244h8.5" stroke="#00990f"/><path d="M1248 244h8.5" stroke="#00990e"/><path d="M1256 244h8.5" stroke="#00990d"/><path d="M1264 244h8.5" stroke="#00990c"/><path d="M1272 244h8.5" stroke="#00990b"/><path d="M1280 244h8.5" stroke="#00990a"/><path d="M1288 244h8.5" stroke="#009908"/><path d="M1296 244h8.5" stroke="#009907"/><path d="M1304 244h8.5" stroke="#009906"/><path d="M1312 244h8.5" stroke="#009905"/><path d="M1320 244h8.5" stroke="#009904"/><path d="M1328 244h8.5" stroke="#009902"/><path d="M1336 244h8.5" stroke="#009901"/><path d="M1344 244h104.5" stroke="#009900"/><path d="M1448 244h8.5" stroke="#059900"/><path d="M1456 244h8.5" stroke="#0b9900"/><path d="M1464 244h8.5" stroke="#109900"/><path d="M1160 252h8.5" stroke="#00991c"/><path d="M1168 252h16.5" stroke="#00991a"/><path d="M1184 252h8.5" stroke="#009919"/><path d="M1192 252h8.5" stroke="#009918"/><path d="M1200 252h8.5" stroke="#009917"/><path d="M1208 252h8.5" stroke="#009916"/><path d="M1216 252h8.5" stroke="#009915"/><path d="M1224 252h8.5" stroke="#009914"/><path d="M1232 252h8.5" stroke="#009913"/><path d="M1240 252h16.5" stroke="#009911"/><path d="M1256 252h8.5" stroke="#009910"/><path d="M1264 252h8.5" stroke="#00990e"/><path d="M1272 252h8.5" stroke="#00990d"/><path d="M1280 252h8.5" stroke="#00990c"/><path d="M1288 252h8.5" stroke="#00990b"/><path d="M1296 252h8.5" stroke="#00990a"/><path d="M1304 252h8.5" stroke="#009908"/><path d="M1312 252h8.5" stroke="#009907"/><path d="M1320 252h8.5" stroke="#009906"/><path d="M1328 252h8.5" stroke="#009905"/><path d="M1336 252h8.5" stroke="#009904"/><path d="M1344 252h8.5" stroke="#009902"/><path d="M1352 252h8.5" stroke="#009901"/><path d="M1360 252h80.5" stroke="#009900"/><path d="M1440 252h8.5" stroke="#029900"/><path d="M1448 252h8.5" stroke="#079900"/><path d="M1456 252h8.5" stroke="#0d9900"/><path d="M1464 252h8.5" stroke="#139900"/><path d="M1472 252h8.5" stroke="#199900"/><path d="M1480 252h8.5" stroke="#1f9900"/><path d="M1160 260h8.5" stroke="#00991e"/><path d="M1168 260h8.5" stroke="#00991d"/><path d="M1176 260h8.5" stroke="#00991c"/><path d="M1184 260h8.5" stroke="#00991b"/><path d="M1192 260h8.5" stroke="#00991a"/><path d="M1200 260h8.5" stroke="#009919"/><path d="M1208 260h8.5" stroke="#009918"/><path d="M1216 260h8.5" stroke="#009917"/><path d="M1224 260h8.5" stroke="#009916"/><path d="M1232 260h8.5" stroke="#009915"/><path d="M1240 260h8.5" stroke="#009914"/><path d="M1248 260h8.5" stroke="#009913"/><path d="M1256 260h8.5" stroke="#009912"/><path d="M1264 260h8.5" stroke="#009911"/><path d="M1272 260h8.5" stroke="#009910"/><path d="M1280 260h16.5" stroke="#00990e"/><path d="M1296 260h8.5" stroke="#00990d"/><path d="M1304 260h8.5" stroke="#00990b"/><path d="M1312 260h8.5" stroke="#00990a"/><path d="M1320 260h8.5" stroke="#009908"/><path d="M1328 260h8.5" stroke="#009907"/><path d="M1336 260h8.5" stroke="#009906"/><path d="M1344 260h8.5" stroke="#009905"/><path d="M1352 260h8.5" stroke="#009904"/><path d="M1360 260h8.5" stroke="#009902"/><path d="M1368 260h8.5" stroke="#009901"/><path d="M1376 260h64.5" stroke="#009900"/><path d="M1440 260h8.5" stroke="#049900"/><path d="M1448 260h8.5" stroke="#0a9900"/><path d="M1456 260h8.5" stroke="#109900"/><path d="M1464 260h8.5" stroke="#169900"/><path d="M1472 260h8.5" stroke="#1c9900"/><path d="M1480 260h8.5" stroke="#229900"/><path d="M1488 260h8.5" stroke="#299900"/><path d="M1160 268h16.5" stroke="#009920"/><path d="M1176 268h8.5" stroke="#00991f"/><path d="M1184 268h8.5" stroke="#00991e"/><path d="M1192 268h8.5" stroke="#00991d"/><path d="M1200 268h8.5" stroke="#00991c"/><path d="M1208 268h8.5" stroke="#00991b"/><path d="M1216 268h8.5" stroke="#00991a"/><path d="M1224 268h8.5" stroke="#009919"/><path d="M1232 268h8.5" stroke="#009918"/><path d="M1240 268h8.5" stroke="#009917"/><path d="M1248 268h8.5" stroke="#009916"/><path d="M1256 268h16.5" stroke="#009914"/><path d="M1272 268h8.5" stroke="#009913"/><path d="M1280 268h8.5" stroke="#009911"/><path d="M1288 268h8.5" stroke="#009910"/><path d="M1296 268h8.5" stroke="#00990f"/><path d="M1304 268h8.5" stroke="#00990e"/><path d="M1312 268h8.5" stroke="#00990d"/><path d="M1320 268h8.5" stroke="#00990b"/><path d="M1328 268h8.5" stroke="#00990a"/><path d="M1336 268h8.5" stroke="#009908"/><path d="M1344 268h8.5" stroke="#009907"/><path d="M1352 268h8.5" stroke="#009906"/><path d="M1360 268h8.5" stroke="#009905"/><path d="M1368 268h8.5" stroke="#009903"/><path d="M1376 268h8.5" stroke="#009902"/><path d="M1384 268h8.5" stroke="#009901"/><path d="M1392 268h40.5" stroke="#009900"/><path d="M1432 268h8.5" stroke="#019900"/><path d="M1440 268h8.5" stroke="#069900"/><path d="M1448 268h8.5" stroke="#0c9900"/><path d="M1456 268h8.5" stroke="#139900"/><path d="M1464 268h8.5" stroke="#199900"/><path d="M1472 268h8.5" stroke="#1f9900"/><path d="M1480 268h8.5" stroke="#259900"/><path d="M1488 268h8.5" stroke="#2c9900"/><path d="M1496 268h8.5" stroke="#339900"/><path d="M1504 268h8.5" stroke="#3a9900"/><path d="M1160 276h8.5" stroke="#009923"/><path d="M1168 276h16.5" stroke="#009922"/><path d="M1184 276h16.5" stroke="#009920"/><path d="M1200 276h8.5" stroke="#00991f"/><path d="M1208 276h16.5" stroke="#00991d"/><path d="M1224 276h8.5" stroke="#00991c"/><path d="M1232 276h16.5" stroke="#00991a"/><path d="M1248 276h8.5" stroke="#009919"/><path d="M1256 276h8.5" stroke="#009917"/><path d="M1264 276h8.5" stroke="#009916"/><path d="M1272 276h8.5" stroke="#009915"/><path d="M1280 276h8.5" stroke="#009914"/><path d="M1288 276h8.5" stroke="#009913"/><path d="M1296 276h8.5" stroke="#009911"/><path d="M1304 276h8.5" stroke="#009910"/><path d="M1312 276h8.5" stroke="#00990f"/><path d="M1320 276h8.5" stroke="#00990e"/><path d="M1328 276h8.5" stroke="#00990d"/><path d="M1336 276h8.5" stroke="#00990b"/><path d="M1344 276h8.5" stroke="#00990a"/><path d="M1352 276h8.5" stroke="#009909"/><path d="M1360 276h8.5" stroke="#009907"/><path d="M1368 276h8.5" stroke="#009906"/><path d="M1376 276h8.5" stroke="#009905"/><path d="M1384 276h8.5" stroke="#009903"/><path d="M1392 276h8.5" stroke="#009902"/><path d="M1400 276h32.5" stroke="#009900"/><path d="M1432 276h8.5" stroke="#029900"/><path d="M1440 276h8.5" stroke="#089900"/><path d="M1448 276h8.5" stroke="#0f9900"/><path d="M1456 276h8.5" stroke="#159900"/><path d="M1464 276h8.5" stroke="#1c9900"/><path d="M1472 276h8.5" stroke="#229900"/><path d="M1480 276h8.5" stroke="#299900"/><path d="M1488 276h8.5" stroke="#309900"/><path d="M1496 276h8.5" stroke="#379900"/><path d="M1504 276h8.5" stroke="#3e9900"/><path d="M1512 276h8.5" stroke="#469900"/><path d="M1160 284h8.5" stroke="#009926"/><path d="M1168 284h8.5" stroke="#009925"/><path d="M1176 284h8.5" stroke="#009924"/><path d="M1184 284h8.5" stroke="#009923"/><path d="M1192 284h16.5" stroke="#009922"/><path d="M1208 284h8.5" stroke="#009920"/><path d="M1216 284h16.5" stroke="#00991f"/><path d="M1232 284h8.5" stroke="#00991d"/><path d="M1240 284h8.5" stroke="#00991c"/><path d="M1248 284h8.5" stroke="#00991b"/><path d="M1256 284h8.5" stroke="#00991a"/><path d="M1264 284h8.5" stroke="#009919"/><path d="M1272 284h8.5" stroke="#009918"/><path d="M1280 284h8.5" stroke="#009917"/><path d="M1288 284h8.5" stroke="#009916"/><path d="M1296 284h8.5" stroke="#009914"/><path d="M1304 284h8.5" stroke="#009913"/><path d="M1312 284h8.5" stroke="#009912"/><path d="M1320 284h8.5" stroke="#009911"/><path d="M1328 284h8.5" stroke="#009910"/><path d="M1336 284h8.5" stroke="#00990e"/><path d="M1344 284h8.5" stroke="#00990d"/><path d="M1352 284h8.5" stroke="#00990b"/><path d="M1360 284h8.5" stroke="#00990a"/><path d="M1368 284h8.5" stroke="#009909"/><path d="M1376 284h8.5" stroke="#009907"/><path d="M1384 284h8.5" stroke="#009906"/><path d="M1392 284h8.5" stroke="#009904"/><path d="M1400 284h8.5" stroke="#009903"/><path d="M1408 284h8.5" stroke="#009901"/><path d="M1416 284h16.5" stroke="#009900"/><path d="M1432 284h8.5" stroke="#059900"/><path d="M1440 284h8.5" stroke="#0b9900"/><path d="M1448 284h8.5" stroke="#119900"/><path d="M1456 284h8.5" stroke="#189900"/><path d="M1464 284h8.5" stroke="#1f9900"/><path d="M1472 284h8.5" stroke="#269900"/><path d="M1480 284h8.5" stroke="#2c9900"/><path d="M1488 284h8.5" stroke="#349900"/><path d="M1496 284h8.5" stroke="#3b9900"/><path d="M1504 284h8.5" stroke="#439900"/><path d="M1512 284h8.5" stroke="#4a9900"/><path d="M1520 284h8.5" stroke="#529900"/><path d="M1528 284h8.5" stroke="#5a9900"/><path d="M1160 292h8.5" stroke="#009929"/><path d="M1168 292h8.5" stroke="#009928"/><path d="M1176 292h8.5" stroke="#009927"/><path d="M1184 292h8.5" stroke="#009926"/><path d="M1192 292h16.5" stroke="#009925"/><path d="M1208 292h8.5" stroke="#009923"/><path d="M1216 292h16.5" stroke="#009922"/><path d="M1232 292h8.5" stroke="#009920"/><path d="M1240 292h8.5" stroke="#00991f"/><path d="M1248 292h8.5" stroke="#00991e"/><path d="M1256 292h8.5" stroke="#00991d"/><path d="M1264 292h8.5" stroke="#00991c"/><path d="M1272 292h8.5" stroke="#00991b"/><path d="M1280 292h8.5" stroke="#00991a"/><path d="M1288 292h8.5" stroke="#009919"/><path d="M1296 292h8.5" stroke="#009917"/><path d="M1304 292h8.5" stroke="#009916"/><path d="M1312 292h8.5" stroke="#009915"/><path d="M1320 292h8.5" stroke="#009914"/><path d="M1328 292h8.5" stroke="#009913"/><path d="M1336 292h8.5" stroke="#009911"/><path d="M1344 292h8.5" stroke="#009910"/><path d="M1352 292h8.5" stroke="#00990e"/><path d="M1360 292h8.5" stroke="#00990d"/><path d="M1368 292h8.5" stroke="#00990b"/><path d="M1376 292h8.5" stroke="#00990a"/><path d="M1384 292h8.5" stroke="#009909"/><path d="M1392 292h8.5" stroke="#009907"/><path d="M1400 292h8.5" stroke="#009905"/><path d="M1408 292h8.5" stroke="#009904"/><path d="M1416 292h8.5" stroke="#009902"/><path d="M1424 292h8.5" stroke="#019901"/><path d="M1432 292h8.5" stroke="#089900"/><path d="M1440 292h8.5" stroke="#0e9900"/><path d="M1448 292h8.5" stroke="#149900"/><path d="M1456 292h8.5" stroke="#1c9900"/><path d="M1464 292h8.5" stroke="#229900"/><path d="M1472 292h8.5" stroke="#299900"/><path d="M1480 292h8.5" stroke="#319900"/><path d="M1488 292h8.5" stroke="#389900"/><path d="M1496 292h8.5" stroke="#409900"/><path d="M1504 292h8.5" stroke="#479900"/><path d="M1512 292h8.5" stroke="#4f9900"/><path d="M1520 292h8.5" stroke="#589900"/><path d="M1528 292h8.5" stroke="#609900"/><path d="M1536 292h8.5" stroke="#689900"/><path d="M1160 300h8.5" stroke="#00992c"/><path d="M1168 300h8.5" stroke="#00992b"/><path d="M1176 300h8.5" stroke="#00992a"/><path d="M1184 300h8.5" stroke="#009929"/><path d="M1192 300h16.5" stroke="#009928"/><path d="M1208 300h8.5" stroke="#009926"/><path d="M1216 300h16.5" stroke="#009925"/><path d="M1232 300h8.5" stroke="#009923"/><path d="M1240 300h16.5" stroke="#009922"/><path d="M1256 300h8.5" stroke="#009920"/><path d="M1264 300h8.5" stroke="#00991f"/><path d="M1272 300h8.5" stroke="#00991e"/><path d="M1280 300h8.5" stroke="#00991d"/><path d="M1288 300h8.5" stroke="#00991c"/><path d="M1296 300h8.5" stroke="#00991a"/><path d="M1304 300h8.5" stroke="#009919"/><path d="M1312 300h8.5" stroke="#009918"/><path d="M1320 300h8.5" stroke="#009917"/><path d="M1328 300h8.5" stroke="#009916"/><path d="M1336 300h8.5" stroke="#009914"/><path d="M1344 300h8.5" stroke="#009913"/><path d="M1352 300h8.5" stroke="#009911"/><path d="M1360 300h8.5" stroke="#009910"/><path d="M1368 300h8.5" stroke="#00990f"/><path d="M1376 300h8.5" stroke="#00990d"/><path d="M1384 300h8.5" stroke="#00990c"/><path d="M1392 300h8.5" stroke="#00990a"/><path d="M1400 300h8.5" stroke="#009909"/><path d="M1408 300h8.5" stroke="#009907"/><path d="M1416 300h8.5" stroke="#009905"/><path d="M1424 300h8.5" stroke="#049904"/><path d="M1432 300h8.5" stroke="#0a9902"/><path d="M1440 300h8.5" stroke="#119901"/><path d="M1448 300h8.5" stroke="#189900"/><path d="M1456 300h8.5" stroke="#1f9900"/><path d="M1464 300h8.5" stroke="#269900"/><path d="M1472 300h8.5" stroke="#2d9900"/><path d="M1480 300h8.5" stroke="#359900"/><path d="M1488 300h8.5" stroke="#3d9900"/><path d="M1496 300h8.5" stroke="#449900"/><path d="M1504 300h8.5" stroke="#4c9900"/><path d="M1512 300h8.5" stroke="#559900"/><path d="M1520 300h8.5" stroke="#5d9900"/><path d="M1528 300h8.5" stroke="#669900"/><path d="M1536 300h8.5" stroke="#6f9900"/><path d="M1544 300h8.5" stroke="#789900"/><path d="M1552 300h8.5" stroke="#829900"/><path d="M1160 308h8.5" stroke="#00992f"/><path d="M1168 308h16.5" stroke="#00992e"/><path d="M1184 308h16.5" stroke="#00992c"/><path d="M1200 308h8.5" stroke="#00992b"/><path d="M1208 308h16.5" stroke="#009929"/><path d="M1224 308h8.5" stroke="#009928"/><path d="M1232 308h16.5" stroke="#009926"/><path d="M1248 308h8.5" stroke="#009925"/><path d="M1256 308h8.5" stroke="#009923"/><path d="M1264 308h8.5" stroke="#009922"/><path d="M1272 308h8.5" stroke="#009921"/><path d="M1280 308h8.5" stroke="#009920"/><path d="M1288 308h8.5" stroke="#00991f"/><path d="M1296 308h8.5" stroke="#00991e"/><path d="M1304 308h8.5" stroke="#00991d"/><path d="M1312 308h8.5" stroke="#00991c"/><path d="M1320 308h8.5" stroke="#00991a"/><path d="M1328 308h8.5" stroke="#009919"/><path d="M1336 308h8.5" stroke="#009917"/><path d="M1344 308h8.5" stroke="#009916"/><path d="M1352 308h8.5" stroke="#009915"/><path d="M1360 308h8.5" stroke="#009913"/><path d="M1368 308h8.5" stroke="#009912"/><path d="M1376 308h8.5" stroke="#009911"/><path d="M1384 308h8.5" stroke="#00990f"/><path d="M1392 308h8.5" stroke="#00990e"/><path d="M1400 308h8.5" stroke="#00990c"/><path d="M1408 308h8.5" stroke="#00990a"/><path d="M1416 308h8.5" stroke="#009909"/><path d="M1424 308h8.5" stroke="#079907"/><path d="M1432 308h8.5" stroke="#0d9905"/><path d="M1440 308h8.5" stroke="#149904"/><path d="M1448 308h8.5" stroke="#1b9902"/><path d="M1456 308h8.5" stroke="#229900"/><path d="M1464 308h8.5" stroke="#2a9900"/><path d="M1472 308h8.5" stroke="#319900"/><path d="M1480 308h8.5" stroke="#399900"/><path d="M1488 308h8.5" stroke="#419900"/><path d="M1496 308h8.5" stroke="#499900"/><path d="M1504 308h8.5" stroke="#529900"/><path d="M1512 308h8.5" stroke="#5b9900"/><path d="M1520 308h8.5" stroke="#649900"/><path d="M1528 308h8.5" stroke="#6d9900"/><path d="M1536 308h8.5" stroke="#769900"/><path d="M1544 308h8.5" stroke="#809900"/><path d="M1552 308h8.5" stroke="#899900"/><path d="M1560 308h8.5" stroke="#949900"/><path d="M1160 316h16.5" stroke="#009932"/><path d="M1176 316h8.5" stroke="#009931"/><path d="M1184 316h8.5" stroke="#009930"/><path d="M1192 316h8.5" stroke="#00992f"/><path d="M1200 316h8.5" stroke="#00992e"/><path d="M1208 316h8.5" stroke="#00992d"/><path d="M1216 316h8.5" stroke="#00992c"/><path d="M1224 316h8.5" stroke="#00992b"/><path d="M1232 316h8.5" stroke="#00992a"/><path d="M1240 316h8.5" stroke="#009929"/><path d="M1248 316h8.5" stroke="#009928"/><path d="M1256 316h8.5" stroke="#009927"/><path d="M1264 316h8.5" stroke="#009926"/><path d="M1272 316h8.5" stroke="#009925"/><path d="M1280 316h8.5" stroke="#009923"/><path d="M1288 316h8.5" stroke="#009922"/><path d="M1296 316h8.5" stroke="#009921"/><path d="M1304 316h8.5" stroke="#009920"/><path d="M1312 316h8.5" stroke="#00991f"/><path d="M1320 316h8.5" stroke="#00991d"/><path d="M1328 316h8.5" stroke="#00991c"/><path d="M1336 316h8.5" stroke="#00991b"/><path d="M1344 316h8.5" stroke="#00991a"/><path d="M1352 316h8.5" stroke="#009918"/><path d="M1360 316h8.5" stroke="#009917"/><path d="M1368 316h8.5" stroke="#009916"/><path d="M1376 316h8.5" stroke="#009914"/><path d="M1384 316h8.5" stroke="#009913"/><path d="M1392 316h8.5" stroke="#009911"/><path d="M1400 316h8.5" stroke="#009910"/><path d="M1408 316h8.5" stroke="#00990e"/><path d="M1416 316h8.5" stroke="#02990c"/><path d="M1424 316h8.5" stroke="#0a990b"/><path d="M1440 316h8.5" stroke="#179907"/><path d="M1448 316h8.5" stroke="#1f9905"/><path d="M1456 316h8.5" stroke="#269904"/><path d="M1464 316h8.5" stroke="#2e9902"/><path d="M1472 316h8.5" stroke="#369900"/><path d="M1480 316h8.5" stroke="#3e9900"/><path d="M1488 316h8.5" stroke="#469900"/><path d="M1496 316h8.5" stroke="#4f9900"/><path d="M1504 316h8.5" stroke="#589900"/><path d="M1512 316h8.5" stroke="#619900"/><path d="M1520 316h8.5" stroke="#6a9900"/><path d="M1528 316h8.5" stroke="#739900"/><path d="M1536 316h8.5" stroke="#7d9900"/><path d="M1544 316h8.5" stroke="#889900"/><path d="M1552 316h8.5" stroke="#929900"/><path d="M1560 316h8.5" stroke="#999500"/><path d="M1568 316h8.5" stroke="#998c00"/><path d="M1576 316h8.5" stroke="#998300"/><path d="M1160 324h8.5" stroke="#009936"/><path d="M1168 324h8.5" stroke="#009935"/><path d="M1176 324h8.5" stroke="#009934"/><path d="M1184 324h8.5" stroke="#009933"/><path d="M1192 324h8.5" stroke="#009932"/><path d="M1200 324h16.5" stroke="#009931"/><path d="M1216 324h16.5" stroke="#00992f"/><path d="M1232 324h8.5" stroke="#00992e"/><path d="M1240 324h8.5" stroke="#00992c"/><path d="M1248 324h16.5" stroke="#00992b"/><path d="M1264 324h8.5" stroke="#009929"/><path d="M1272 324h8.5" stroke="#009928"/><path d="M1280 324h8.5" stroke="#009927"/><path d="M1288 324h8.5" stroke="#009926"/><path d="M1296 324h8.5" stroke="#009925"/><path d="M1304 324h8.5" stroke="#009923"/><path d="M1312 324h8.5" stroke="#009922"/><path d="M1320 324h8.5" stroke="#009921"/><path d="M1328 324h8.5" stroke="#009920"/><path d="M1336 324h8.5" stroke="#00991f"/><path d="M1344 324h8.5" stroke="#00991d"/><path d="M1352 324h8.5" stroke="#00991c"/><path d="M1360 324h8.5" stroke="#00991a"/><path d="M1368 324h8.5" stroke="#009919"/><path d="M1376 324h8.5" stroke="#009917"/><path d="M1384 324h8.5" stroke="#009916"/><path d="M1392 324h8.5" stroke="#009914"/><path d="M1400 324h8.5" stroke="#009913"/><path d="M1408 324h8.5" stroke="#009911"/><path d="M1416 324h8.5" stroke="#059910"/><path d="M1424 324h8.5" stroke="#0d990e"/><path d="M1456 324h8.5" stroke="#2b9907"/><path d="M1464 324h8.5" stroke="#329905"/><path d="M1472 324h8.5" stroke="#3b9903"/><path d="M1480 324h8.5" stroke="#439901"/><path d="M1488 324h8.5" stroke="#4c9900"/><path d="M1496 324h8.5" stroke="#559900"/><path d="M1504 324h8.5" stroke="#5e9900"/><path d="M1512 324h8.5" stroke="#679900"/><path d="M1520 324h8.5" stroke="#719900"/><path d="M1528 324h8.5" stroke="#7b9900"/><path d="M1536 324h8.5" stroke="#859900"/><path d="M1544 324h8.5" stroke="#909900"/><path d="M1552 324h8.5" stroke="#999700"/><path d="M1560 324h8.5" stroke="#998d00"/><path d="M1568 324h8.5" stroke="#998400"/><path d="M1576 324h8.5" stroke="#997c00"/><path d="M1584 324h8.5" stroke="#997400"/><path d="M1160 332h8.5" stroke="#00993a"/><path d="M1168 332h16.5" stroke="#009938"/><path d="M1184 332h8.5" stroke="#009937"/><path d="M1192 332h8.5" stroke="#009936"/><path d="M1200 332h8.5" stroke="#009935"/><path d="M1208 332h8.5" stroke="#009934"/><path d="M1216 332h8.5" stroke="#009933"/><path d="M1224 332h8.5" stroke="#009932"/><path d="M1232 332h8.5" stroke="#009931"/><path d="M1240 332h8.5" stroke="#009930"/><path d="M1248 332h8.5" stroke="#00992f"/><path d="M1256 332h8.5" stroke="#00992e"/><path d="M1264 332h8.5" stroke="#00992d"/><path d="M1272 332h8.5" stroke="#00992c"/><path d="M1280 332h8.5" stroke="#00992b"/><path d="M1288 332h8.5" stroke="#00992a"/><path d="M1296 332h8.5" stroke="#009929"/><path d="M1304 332h8.5" stroke="#009928"/><path d="M1312 332h8.5" stroke="#009926"/><path d="M1320 332h8.5" stroke="#009925"/><path d="M1328 332h8.5" stroke="#009923"/><path d="M1336 332h8.5" stroke="#009922"/><path d="M1344 332h8.5" stroke="#009921"/><path d="M1352 332h8.5" stroke="#009920"/><path d="M1360 332h8.5" stroke="#00991f"/><path d="M1368 332h8.5" stroke="#00991d"/><path d="M1376 332h8.5" stroke="#00991c"/><path d="M1384 332h8.5" stroke="#00991a"/><path d="M1392 332h8.5" stroke="#009919"/><path d="M1400 332h8.5" stroke="#009917"/><path d="M1408 332h8.5" stroke="#019915"/><path d="M1416 332h8.5" stroke="#089914"/><path d="M1472 332h8.5" stroke="#409907"/><path d="M1480 332h8.5" stroke="#499905"/><path d="M1488 332h8.5" stroke="#529903"/><path d="M1496 332h8.5" stroke="#5b9901"/><path d="M1504 332h8.5" stroke="#649900"/><path d="M1512 332h8.5" stroke="#6e9900"/><path d="M1520 332h8.5" stroke="#799900"/><path d="M1528 332h8.5" stroke="#839900"/><path d="M1536 332h8.5" stroke="#8e9900"/><path d="M1544 332h8.5" stroke="#999900"/><path d="M1552 332h8.5" stroke="#998e00"/><path d="M1560 332h8.5" stroke="#998500"/><path d="M1568 332h8.5" stroke="#997c00"/><path d="M1576 332h8.5" stroke="#997400"/><path d="M1584 332h8.5" stroke="#996d00"/><path d="M1592 332h8.5" stroke="#996700"/><path d="M1160 340h16.5" stroke="#00993d"/><path d="M1176 340h16.5" stroke="#00993b"/><path d="M1192 340h8.5" stroke="#00993a"/><path d="M1200 340h8.5" stroke="#009939"/><path d="M1208 340h8.5" stroke="#009938"/><path d="M1216 340h8.5" stroke="#009937"/><path d="M1224 340h8.5" stroke="#009936"/><path d="M1232 340h8.5" stroke="#009935"/><path d="M1240 340h8.5" stroke="#009934"/><path d="M1248 340h8.5" stroke="#009933"/><path d="M1256 340h8.5" stroke="#009932"/><path d="M1264 340h8.5" stroke="#009931"/><path d="M1272 340h8.5" stroke="#009930"/><path d="M1280 340h8.5" stroke="#00992f"/><path d="M1288 340h8.5" stroke="#00992e"/><path d="M1296 340h8.5" stroke="#00992c"/><path d="M1304 340h8.5" stroke="#00992b"/><path d="M1312 340h8.5" stroke="#00992a"/><path d="M1320 340h8.5" stroke="#009929"/><path d="M1328 340h8.5" stroke="#009928"/><path d="M1336 340h8.5" stroke="#009926"/><path d="M1344 340h8.5" stroke="#009925"/><path d="M1352 340h8.5" stroke="#009924"/><path d="M1360 340h8.5" stroke="#009922"/><path d="M1368 340h8.5" stroke="#009921"/><path d="M1376 340h8.5" stroke="#009920"/><path d="M1384 340h8.5" stroke="#00991e"/><path d="M1392 340h8.5" stroke="#00991d"/><path d="M1400 340h8.5" stroke="#00991b"/><path d="M1408 340h8.5" stroke="#049919"/><path d="M1416 340h8.5" stroke="#0b9918"/><path d="M1488 340h8.5" stroke="#589907"/><path d="M1496 340h8.5" stroke="#629905"/><path d="M1504 340h8.5" stroke="#6b9902"/><path d="M1512 340h8.5" stroke="#769900"/><path d="M1520 340h8.5" stroke="#819900"/><path d="M1528 340h8.5" stroke="#8c9900"/><path d="M1536 340h8.5" stroke="#979900"/><path d="M1544 340h8.5" stroke="#998f00"/><path d="M1552 340h8.5" stroke="#998600"/><path d="M1560 340h8.5" stroke="#997d00"/><path d="M1568 340h8.5" stroke="#997400"/><path d="M1576 340h8.5" stroke="#996d00"/><path d="M1584 340h8.5" stroke="#996700"/><path d="M1592 340h8.5" stroke="#996100"/><path d="M1600 340h8.5" stroke="#995b00"/><path d="M1608 340h8.5" stroke="#995600"/><path d="M1160 348h8.5" stroke="#009941"/><path d="M1168 348h16.5" stroke="#009940"/><path d="M1184 348h8.5" stroke="#00993f"/><path d="M1192 348h8.5" stroke="#00993e"/><path d="M1200 348h8.5" stroke="#00993d"/><path d="M1208 348h8.5" stroke="#00993c"/><path d="M1216 348h8.5" stroke="#00993b"/><path d="M1224 348h8.5" stroke="#00993a"/><path d="M1232 348h8.5" stroke="#009939"/><path d="M1240 348h8.5" stroke="#009938"/><path d="M1248 348h8.5" stroke="#009937"/><path d="M1256 348h8.5" stroke="#009936"/><path d="M1264 348h8.5" stroke="#009935"/><path d="M1272 348h8.5" stroke="#009934"/><path d="M1280 348h8.5" stroke="#009933"/><path d="M1288 348h8.5" stroke="#009932"/><path d="M1296 348h8.5" stroke="#009931"/><path d="M1304 348h8.5" stroke="#00992f"/><path d="M1312 348h8.5" stroke="#00992e"/><path d="M1320 348h8.5" stroke="#00992d"/><path d="M1328 348h8.5" stroke="#00992c"/><path d="M1336 348h8.5" stroke="#00992b"/><path d="M1344 348h8.5" stroke="#009929"/><path d="M1352 348h8.5" stroke="#009928"/><path d="M1360 348h8.5" stroke="#009927"/><path d="M1368 348h8.5" stroke="#009925"/><path d="M1376 348h8.5" stroke="#009924"/><path d="M1384 348h8.5" stroke="#009922"/><path d="M1392 348h8.5" stroke="#009921"/><path d="M1400 348h8.5" stroke="#00991f"/><path d="M1408 348h8.5" stroke="#07991e"/><path d="M1416 348h8.5" stroke="#0e991c"/><path d="M1504 348h8.5" stroke="#739907"/><path d="M1512 348h8.5" stroke="#7f9904"/><path d="M1520 348h8.5" stroke="#899902"/><path d="M1528 348h8.5" stroke="#959900"/><path d="M1536 348h8.5" stroke="#999100"/><path d="M1544 348h8.5" stroke="#998700"/><path d="M1552 348h8.5" stroke="#997d00"/><path d="M1560 348h8.5" stroke="#997500"/><path d="M1568 348h8.5" stroke="#996d00"/><path d="M1576 348h8.5" stroke="#996700"/><path d="M1584 348h8.5" stroke="#996100"/><path d="M1592 348h8.5" stroke="#995b00"/><path d="M1600 348h8.5" stroke="#995500"/><path d="M1608 348h8.5" stroke="#995000"/><path d="M1616 348h8.5" stroke="#994c00"/><path d="M1160 356h8.5" stroke="#009946"/><path d="M1168 356h16.5" stroke="#009944"/><path d="M1184 356h8.5" stroke="#009943"/><path d="M1192 356h8.5" stroke="#009942"/><path d="M1200 356h8.5" stroke="#009941"/><path d="M1208 356h16.5" stroke="#009940"/><path d="M1224 356h16.5" stroke="#00993e"/><path d="M1240 356h8.5" stroke="#00993d"/><path d="M1248 356h16.5" stroke="#00993b"/><path d="M1264 356h8.5" stroke="#00993a"/><path d="M1272 356h16.5" stroke="#009938"/><path d="M1288 356h8.5" stroke="#009937"/><path d="M1296 356h8.5" stroke="#009935"/><path d="M1304 356h8.5" stroke="#009934"/><path d="M1312 356h8.5" stroke="#009933"/><path d="M1320 356h8.5" stroke="#009932"/><path d="M1328 356h8.5" stroke="#009931"/><path d="M1336 356h8.5" stroke="#00992f"/><path d="M1344 356h8.5" stroke="#00992e"/><path d="M1352 356h8.5" stroke="#00992c"/><path d="M1360 356h8.5" stroke="#00992b"/><path d="M1368 356h8.5" stroke="#00992a"/><path d="M1376 356h8.5" stroke="#009929"/><path d="M1384 356h8.5" stroke="#009927"/><path d="M1392 356h8.5" stroke="#009926"/><path d="M1400 356h8.5" stroke="#029924"/><path d="M1408 356h8.5" stroke="#0a9922"/><path d="M1520 356h8.5" stroke="#939907"/><path d="M1528 356h8.5" stroke="#999304"/><path d="M1536 356h8.5" stroke="#998801"/><path d="M1544 356h8.5" stroke="#997e00"/><path d="M1552 356h8.5" stroke="#997600"/><path d="M1560 356h8.5" stroke="#996e00"/><path d="M1568 356h8.5" stroke="#996700"/><path d="M1576 356h8.5" stroke="#996000"/><path d="M1584 356h8.5" stroke="#995a00"/><path d="M1592 356h8.5" stroke="#995500"/><path d="M1600 356h8.5" stroke="#995000"/><path d="M1608 356h8.5" stroke="#994b00"/><path d="M1616 356h8.5" stroke="#994700"/><path d="M1624 356h8.5" stroke="#994300"/><path d="M1160 364h8.5" stroke="#00994a"/><path d="M1168 364h8.5" stroke="#009949"/><path d="M1176 364h8.5" stroke="#009948"/><path d="M1184 364h16.5" stroke="#009947"/><path d="M1200 364h8.5" stroke="#009946"/><path d="M1208 364h8.5" stroke="#009945"/><path d="M1216 364h8.5" stroke="#009944"/><path d="M1224 364h8.5" stroke="#009943"/><path d="M1232 364h8.5" stroke="#009942"/><path d="M1240 364h8.5" stroke="#009941"/><path d="M1248 364h8.5" stroke="#009940"/><path d="M1256 364h8.5" stroke="#00993f"/><path d="M1264 364h8.5" stroke="#00993e"/><path d="M1272 364h8.5" stroke="#00993d"/><path d="M1280 364h8.5" stroke="#00993c"/><path d="M1288 364h8.5" stroke="#00993b"/><path d="M1296 364h8.5" stroke="#00993a"/><path d="M1304 364h8.5" stroke="#009939"/><path d="M1312 364h8.5" stroke="#009938"/><path d="M1320 364h8.5" stroke="#009937"/><path d="M1328 364h8.5" stroke="#009935"/><path d="M1336 364h8.5" stroke="#009934"/><path d="M1344 364h8.5" stroke="#009933"/><path d="M1352 364h8.5" stroke="#009932"/><path d="M1360 364h8.5" stroke="#009930"/><path d="M1368 364h8.5" stroke="#00992f"/><path d="M1376 364h8.5" stroke="#00992e"/><path d="M1384 364h8.5" stroke="#00992c"/><path d="M1392 364h8.5" stroke="#00992b"/><path d="M1400 364h8.5" stroke="#059929"/><path d="M1408 364h8.5" stroke="#0e9928"/><path d="M1528 364h8.5" stroke="#998908"/><path d="M1536 364h8.5" stroke="#997f05"/><path d="M1544 364h8.5" stroke="#997603"/><path d="M1552 364h8.5" stroke="#996e01"/><path d="M1560 364h8.5" stroke="#996700"/><path d="M1568 364h8.5" stroke="#996000"/><path d="M1576 364h8.5" stroke="#995a00"/><path d="M1584 364h8.5" stroke="#995500"/><path d="M1592 364h8.5" stroke="#994f00"/><path d="M1600 364h8.5" stroke="#994a00"/><path d="M1608 364h8.5" stroke="#994600"/><path d="M1616 364h8.5" stroke="#994200"/><path d="M1624 364h8.5" stroke="#993e00"/><path d="M1632 364h8.5" stroke="#993b00"/><path d="M1640 364h8.5" stroke="#993800"/><path d="M1160 372h8.5" stroke="#00994f"/><path d="M1168 372h16.5" stroke="#00994d"/><path d="M1184 372h8.5" stroke="#00994c"/><path d="M1192 372h8.5" stroke="#00994b"/><path d="M1200 372h16.5" stroke="#00994a"/><path d="M1216 372h8.5" stroke="#009949"/><path d="M1224 372h8.5" stroke="#009948"/><path d="M1232 372h8.5" stroke="#009947"/><path d="M1240 372h8.5" stroke="#009946"/><path d="M1248 372h8.5" stroke="#009945"/><path d="M1256 372h8.5" stroke="#009944"/><path d="M1264 372h8.5" stroke="#009943"/><path d="M1272 372h8.5" stroke="#009942"/><path d="M1280 372h8.5" stroke="#009941"/><path d="M1288 372h8.5" stroke="#009940"/><path d="M1296 372h8.5" stroke="#00993f"/><path d="M1304 372h8.5" stroke="#00993e"/><path d="M1312 372h8.5" stroke="#00993d"/><path d="M1320 372h16.5" stroke="#00993b"/><path d="M1336 372h8.5" stroke="#00993a"/><path d="M1344 372h8.5" stroke="#009938"/><path d="M1352 372h8.5" stroke="#009937"/><path d="M1360 372h8.5" stroke="#009935"/><path d="M1368 372h8.5" stroke="#009934"/><path d="M1376 372h8.5" stroke="#009933"/><path d="M1384 372h8.5" stroke="#009931"/><path d="M1392 372h8.5" stroke="#019930"/><path d="M1400 372h8.5" stroke="#09992e"/><path d="M1408 372h8.5" stroke="#11992d"/><path d="M1544 372h8.5" stroke="#996e07"/><path d="M1552 372h8.5" stroke="#996704"/><path d="M1560 372h8.5" stroke="#996002"/><path d="M1568 372h8.5" stroke="#995900"/><path d="M1576 372h8.5" stroke="#995400"/><path d="M1584 372h8.5" stroke="#994f00"/><path d="M1592 372h8.5" stroke="#994a00"/><path d="M1600 372h8.5" stroke="#994600"/><path d="M1608 372h8.5" stroke="#994100"/><path d="M1616 372h8.5" stroke="#993e00"/><path d="M1624 372h8.5" stroke="#993a00"/><path d="M1632 372h8.5" stroke="#993700"/><path d="M1640 372h8.5" stroke="#993400"/><path d="M1648 372h8.5" stroke="#993100"/><path d="M1160 380h8.5" stroke="#009953"/><path d="M1168 380h16.5" stroke="#009952"/><path d="M1184 380h8.5" stroke="#009951"/><path d="M1192 380h8.5" stroke="#009950"/><path d="M1200 380h16.5" stroke="#00994f"/><path d="M1216 380h8.5" stroke="#00994e"/><path d="M1224 380h8.5" stroke="#00994d"/><path d="M1232 380h8.5" stroke="#00994c"/><path d="M1240 380h8.5" stroke="#00994b"/><path d="M1248 380h8.5" stroke="#00994a"/><path d="M1256 380h16.5" stroke="#009949"/><path d="M1272 380h8.5" stroke="#009947"/><path d="M1280 380h16.5" stroke="#009946"/><path d="M1296 380h8.5" stroke="#009944"/><path d="M1304 380h8.5" stroke="#009943"/><path d="M1312 380h8.5" stroke="#009942"/><path d="M1320 380h8.5" stroke="#009941"/><path d="M1328 380h8.5" stroke="#009940"/><path d="M1336 380h8.5" stroke="#00993f"/><path d="M1344 380h8.5" stroke="#00993e"/><path d="M1352 380h8.5" stroke="#00993d"/><path d="M1360 380h8.5" stroke="#00993b"/><path d="M1368 380h8.5" stroke="#00993a"/><path d="M1376 380h8.5" stroke="#009938"/><path d="M1384 380h8.5" stroke="#009937"/><path d="M1392 380h8.5" stroke="#049935"/><path d="M1400 380h8.5" stroke="#0d9934"/><path d="M1560 380h8.5" stroke="#995905"/><path d="M1568 380h8.5" stroke="#995303"/><path d="M1576 380h8.5" stroke="#994e01"/><path d="M1584 380h8.5" stroke="#994900"/><path d="M1592 380h8.5" stroke="#994400"/><path d="M1600 380h8.5" stroke="#994100"/><path d="M1608 380h8.5" stroke="#993d00"/><path d="M1616 380h8.5" stroke="#993900"/><path d="M1624 380h8.5" stroke="#993600"/><path d="M1632 380h8.5" stroke="#993200"/><path d="M1640 380h8.5" stroke="#992f00"/><path d="M1648 380h8.5" stroke="#992d00"/><path d="M1656 380h8.5" stroke="#992b00"/><path d="M1160 388h16.5" stroke="#009958"/><path d="M1176 388h8.5" stroke="#009957"/><path d="M1184 388h8.5" stroke="#009956"/><path d="M1192 388h16.5" stroke="#009955"/><path d="M1208 388h8.5" stroke="#009954"/><path d="M1216 388h8.5" stroke="#009953"/><path d="M1224 388h16.5" stroke="#009952"/><path d="M1240 388h16.5" stroke="#009950"/><path d="M1256 388h8.5" stroke="#00994f"/><path d="M1264 388h8.5" stroke="#00994e"/><path d="M1272 388h8.5" stroke="#00994d"/><path d="M1280 388h8.5" stroke="#00994c"/><path d="M1288 388h8.5" stroke="#00994b"/><path d="M1296 388h8.5" stroke="#00994a"/><path d="M1304 388h8.5" stroke="#009949"/><path d="M1312 388h8.5" stroke="#009948"/><path d="M1320 388h8.5" stroke="#009947"/><path d="M1328 388h8.5" stroke="#009946"/><path d="M1336 388h8.5" stroke="#009945"/><path d="M1344 388h8.5" stroke="#009944"/><path d="M1352 388h8.5" stroke="#009943"/><path d="M1360 388h8.5" stroke="#009941"/><path d="M1368 388h8.5" stroke="#009940"/><path d="M1376 388h8.5" stroke="#00993e"/><path d="M1384 388h8.5" stroke="#00993d"/><path d="M1392 388h8.5" stroke="#07993c"/><path d="M1400 388h8.5" stroke="#10993a"/><path d="M1568 388h8.5" stroke="#994d07"/><path d="M1576 388h8.5" stroke="#994904"/><path d="M1584 388h8.5" stroke="#994402"/><path d="M1592 388h8.5" stroke="#994001"/><path d="M1600 388h8.5" stroke="#993c00"/><path d="M1608 388h8.5" stroke="#993800"/><path d="M1616 388h8.5" stroke="#993500"/><path d="M1624 388h8.5" stroke="#993200"/><path d="M1632 388h8.5" stroke="#992f00"/><path d="M1640 388h8.5" stroke="#992c00"/><path d="M1648 388h8.5" stroke="#992900"/><path d="M1656 388h8.5" stroke="#992700"/><path d="M1664 388h8.5" stroke="#992500"/><path d="M1672 388h8.5" stroke="#992200"/><path d="M1168 396h8.5" stroke="#00995d"/><path d="M1176 396h16.5" stroke="#00995c"/><path d="M1192 396h8.5" stroke="#00995b"/><path d="M1200 396h8.5" stroke="#00995a"/><path d="M1208 396h16.5" stroke="#009959"/><path d="M1224 396h8.5" stroke="#009958"/><path d="M1232 396h8.5" stroke="#009957"/><path d="M1240 396h16.5" stroke="#009956"/><path d="M1256 396h8.5" stroke="#009955"/><path d="M1264 396h8.5" stroke="#009954"/><path d="M1272 396h8.5" stroke="#009953"/><path d="M1280 396h8.5" stroke="#009952"/><path d="M1288 396h8.5" stroke="#009951"/><path d="M1296 396h8.5" stroke="#009950"/><path d="M1304 396h8.5" stroke="#00994f"/><path d="M1312 396h8.5" stroke="#00994e"/><path d="M1320 396h8.5" stroke="#00994d"/><path d="M1328 396h8.5" stroke="#00994c"/><path d="M1336 396h8.5" stroke="#00994b"/><path d="M1344 396h8.5" stroke="#00994a"/><path d="M1352 396h8.5" stroke="#009949"/><path d="M1360 396h8.5" stroke="#009947"/><path d="M1368 396h8.5" stroke="#009946"/><path d="M1376 396h8.5" stroke="#009945"/><path d="M1384 396h8.5" stroke="#029944"/><path d="M1392 396h8.5" stroke="#0b9943"/><path d="M1584 396h8.5" stroke="#993e05"/><path d="M1592 396h8.5" stroke="#993b04"/><path d="M1600 396h8.5" stroke="#993702"/><path d="M1608 396h8.5" stroke="#993401"/><path d="M1616 396h8.5" stroke="#993100"/><path d="M1624 396h8.5" stroke="#992e00"/><path d="M1632 396h8.5" stroke="#992b00"/><path d="M1640 396h8.5" stroke="#992800"/><path d="M1648 396h8.5" stroke="#992600"/><path d="M1656 396h8.5" stroke="#992300"/><path d="M1664 396h8.5" stroke="#992100"/><path d="M1672 396h8.5" stroke="#991f00"/><path d="M1680 396h8.5" stroke="#991d00"/><path d="M1168 404h16.5" stroke="#009962"/><path d="M1184 404h16.5" stroke="#009961"/><path d="M1200 404h8.5" stroke="#009960"/><path d="M1208 404h16.5" stroke="#00995f"/><path d="M1224 404h8.5" stroke="#00995e"/><path d="M1232 404h8.5" stroke="#00995d"/><path d="M1240 404h16.5" stroke="#00995c"/><path d="M1256 404h8.5" stroke="#00995b"/><path d="M1264 404h8.5" stroke="#00995a"/><path d="M1272 404h8.5" stroke="#009959"/><path d="M1280 404h16.5" stroke="#009958"/><path d="M1296 404h8.5" stroke="#009957"/><path d="M1304 404h8.5" stroke="#009956"/><path d="M1312 404h8.5" stroke="#009955"/><path d="M1320 404h8.5" stroke="#009954"/><path d="M1328 404h8.5" stroke="#009953"/><path d="M1336 404h8.5" stroke="#009952"/><path d="M1344 404h8.5" stroke="#009951"/><path d="M1352 404h8.5" stroke="#009950"/><path d="M1360 404h8.5" stroke="#00994f"/><path d="M1368 404h8.5" stroke="#00994d"/><path d="M1376 404h8.5" stroke="#00994c"/><path d="M1384 404h8.5" stroke="#06994b"/><path d="M1392 404h8.5" stroke="#10994a"/><path d="M1600 404h8.5" stroke="#993204"/><path d="M1608 404h8.5" stroke="#992f03"/><path d="M1616 404h8.5" stroke="#992c01"/><path d="M1624 404h8.5" stroke="#992900"/><path d="M1632 404h8.5" stroke="#992700"/><path d="M1640 404h8.5" stroke="#992500"/><path d="M1648 404h8.5" stroke="#992200"/><path d="M1656 404h8.5" stroke="#992000"/><path d="M1664 404h8.5" stroke="#991e00"/><path d="M1672 404h8.5" stroke="#991c00"/><path d="M1680 404h8.5" stroke="#991a00"/><path d="M1688 404h8.5" stroke="#991900"/><path d="M1168 412h16.5" stroke="#009968"/><path d="M1184 412h16.5" stroke="#009967"/><path d="M1200 412h8.5" stroke="#009966"/><path d="M1208 412h16.5" stroke="#009965"/><path d="M1224 412h16.5" stroke="#009964"/><path d="M1240 412h8.5" stroke="#009963"/><path d="M1248 412h16.5" stroke="#009962"/><path d="M1264 412h8.5" stroke="#009961"/><path d="M1272 412h8.5" stroke="#009960"/><path d="M1280 412h16.5" stroke="#00995f"/><path d="M1296 412h8.5" stroke="#00995e"/><path d="M1304 412h8.5" stroke="#00995d"/><path d="M1312 412h8.5" stroke="#00995c"/><path d="M1320 412h8.5" stroke="#00995b"/><path d="M1328 412h8.5" stroke="#00995a"/><path d="M1336 412h8.5" stroke="#009959"/><path d="M1344 412h8.5" stroke="#009958"/><path d="M1352 412h8.5" stroke="#009957"/><path d="M1360 412h8.5" stroke="#009956"/><path d="M1368 412h8.5" stroke="#009955"/><path d="M1376 412h8.5" stroke="#009954"/><path d="M1384 412h8.5" stroke="#0a9953"/><path d="M1392 412h8.5" stroke="#149952"/><path d="M1608 412h8.5" stroke="#992b05"/><path d="M1616 412h8.5" stroke="#992804"/><path d="M1624 412h8.5" stroke="#992602"/><path d="M1632 412h8.5" stroke="#992301"/><path d="M1640 412h8.5" stroke="#992100"/><path d="M1648 412h8.5" stroke="#991f00"/><path d="M1656 412h8.5" stroke="#991d00"/><path d="M1664 412h8.5" stroke="#991a00"/><path d="M1672 412h8.5" stroke="#991900"/><path d="M1680 412h8.5" stroke="#991700"/><path d="M1688 412h8.5" stroke="#991600"/><path d="M1696 412h8.5" stroke="#991400"/><path d="M1704 412h8.5" stroke="#991300"/><path d="M1168 420h8.5" stroke="#00996f"/><path d="M1176 420h16.5" stroke="#00996e"/><path d="M1192 420h24.5" stroke="#00996d"/><path d="M1216 420h8.5" stroke="#00996c"/><path d="M1224 420h16.5" stroke="#00996b"/><path d="M1240 420h16.5" stroke="#00996a"/><path d="M1256 420h8.5" stroke="#009969"/><path d="M1264 420h8.5" stroke="#009968"/><path d="M1272 420h16.5" stroke="#009967"/><path d="M1288 420h8.5" stroke="#009966"/><path d="M1296 420h8.5" stroke="#009965"/><path d="M1304 420h16.5" stroke="#009964"/><path d="M1320 420h8.5" stroke="#009963"/><path d="M1328 420h8.5" stroke="#009962"/><path d="M1336 420h8.5" stroke="#009961"/><path d="M1344 420h8.5" stroke="#009960"/><path d="M1352 420h8.5" stroke="#00995f"/><path d="M1360 420h16.5" stroke="#00995e"/><path d="M1376 420h8.5" stroke="#04995c"/><path d="M1384 420h8.5" stroke="#0e995b"/><path d="M1624 420h8.5" stroke="#992205"/><path d="M1632 420h8.5" stroke="#991f03"/><path d="M1640 420h8.5" stroke="#991d02"/><path d="M1648 420h8.5" stroke="#991b01"/><path d="M1656 420h8.5" stroke="#991900"/><path d="M1664 420h8.5" stroke="#991700"/><path d="M1672 420h8.5" stroke="#991600"/><path d="M1680 420h8.5" stroke="#991400"/><path d="M1688 420h8.5" stroke="#991300"/><path d="M1696 420h8.5" stroke="#991100"/><path d="M1704 420h8.5" stroke="#991000"/><path d="M1712 420h8.5" stroke="#990e00"/><path d="M1176 428h8.5" stroke="#009976"/><path d="M1184 428h8.5" stroke="#009975"/><path d="M1192 428h24.5" stroke="#009974"/><path d="M1216 428h16.5" stroke="#009973"/><path d="M1232 428h8.5" stroke="#009972"/><path d="M1240 428h16.5" stroke="#009971"/><path d="M1256 428h16.5" stroke="#009970"/><path d="M1272 428h8.5" stroke="#00996f"/><path d="M1280 428h16.5" stroke="#00996e"/><path d="M1296 428h16.5" stroke="#00996d"/><path d="M1312 428h8.5" stroke="#00996c"/><path d="M1320 428h16.5" stroke="#00996b"/><path d="M1336 428h8.5" stroke="#00996a"/><path d="M1344 428h8.5" stroke="#009969"/><path d="M1352 428h8.5" stroke="#009968"/><path d="M1360 428h16.5" stroke="#009967"/><path d="M1376 428h8.5" stroke="#089965"/><path d="M1384 428h8.5" stroke="#139965"/><path d="M1640 428h8.5" stroke="#991a04"/><path d="M1648 428h8.5" stroke="#991802"/><path d="M1656 428h8.5" stroke="#991601"/><path d="M1664 428h8.5" stroke="#991401"/><path d="M1672 428h8.5" stroke="#991300"/><path d="M1680 428h8.5" stroke="#991100"/><path d="M1688 428h8.5" stroke="#991000"/><path d="M1696 428h8.5" stroke="#990e00"/><path d="M1704 428h8.5" stroke="#990d00"/><path d="M1712 428h8.5" stroke="#990c00"/><path d="M1720 428h8.5" stroke="#990b00"/><path d="M1728 428h8.5" stroke="#990a00"/><path d="M1176 436h8.5" stroke="#00997d"/><path d="M1184 436h24.5" stroke="#00997c"/><path d="M1208 436h16.5" stroke="#00997b"/><path d="M1224 436h24.5" stroke="#00997a"/><path d="M1248 436h16.5" stroke="#009979"/><path d="M1264 436h16.5" stroke="#009978"/><path d="M1280 436h16.5" stroke="#009977"/><path d="M1296 436h16.5" stroke="#009976"/><path d="M1312 436h8.5" stroke="#009975"/><path d="M1320 436h16.5" stroke="#009974"/><path d="M1336 436h16.5" stroke="#009973"/><path d="M1352 436h8.5" stroke="#009972"/><path d="M1360 436h8.5" stroke="#009971"/><path d="M1368 436h8.5" stroke="#029970"/><path d="M1376 436h8.5" stroke="#0d9970"/><path d="M1656 436h8.5" stroke="#991304"/><path d="M1664 436h8.5" stroke="#991102"/><path d="M1672 436h8.5" stroke="#991001"/><path d="M1680 436h8.5" stroke="#990e00"/><path d="M1688 436h8.5" stroke="#990d00"/><path d="M1696 436h8.5" stroke="#990b00"/><path d="M1704 436h8.5" stroke="#990a00"/><path d="M1712 436h8.5" stroke="#990900"/><path d="M1720 436h8.5" stroke="#990800"/><path d="M1728 436h8.5" stroke="#990700"/><path d="M1736 436h8.5" stroke="#990600"/><path d="M1176 444h8.5" stroke="#009985"/><path d="M1184 444h24.5" stroke="#009984"/><path d="M1208 444h32.5" stroke="#009983"/><path d="M1240 444h24.5" stroke="#009982"/><path d="M1264 444h16.5" stroke="#009981"/><path d="M1280 444h24.5" stroke="#009980"/><path d="M1304 444h24.5" stroke="#00997f"/><path d="M1328 444h8.5" stroke="#00997e"/><path d="M1336 444h16.5" stroke="#00997d"/><path d="M1352 444h16.5" stroke="#00997c"/><path d="M1368 444h8.5" stroke="#06997c"/><path d="M1376 444h8.5" stroke="#12997b"/><path d="M1664 444h8.5" stroke="#990e04"/><path d="M1672 444h8.5" stroke="#990d03"/><path d="M1680 444h8.5" stroke="#990b02"/><path d="M1688 444h8.5" stroke="#990a01"/><path d="M1696 444h8.5" stroke="#990900"/><path d="M1704 444h8.5" stroke="#990800"/><path d="M1712 444h8.5" stroke="#990700"/><path d="M1720 444h16.5" stroke="#990500"/><path d="M1736 444h8.5" stroke="#990400"/><path d="M1744 444h8.5" stroke="#990200"/><path d="M1176 452h16.5" stroke="#00998d"/><path d="M1192 452h56.5" stroke="#00998c"/><path d="M1248 452h48.5" stroke="#00998b"/><path d="M1296 452h16.5" stroke="#00998a"/><path d="M1312 452h32.5" stroke="#009989"/><path d="M1344 452h24.5" stroke="#009988"/><path d="M1368 452h8.5" stroke="#0b9988"/><path d="M1376 452h8.5" stroke="#179987"/><path d="M1680 452h8.5" stroke="#990904"/><path d="M1688 452h8.5" stroke="#990802"/><path d="M1696 452h8.5" stroke="#990701"/><path d="M1704 452h8.5" stroke="#990501"/><path d="M1712 452h8.5" stroke="#990400"/><path d="M1720 452h8.5" stroke="#990300"/><path d="M1728 452h8.5" stroke="#990200"/><path d="M1736 452h16.5" stroke="#990100"/><path d="M1752 452h16.5" stroke="#990000"/><path d="M1184 460h48.5" stroke="#009996"/><path d="M1232 460h128.5" stroke="#009995"/><path d="M1360 460h8.5" stroke="#049995"/><path d="M1368 460h8.5" stroke="#119995"/><path d="M1688 460h8.5" stroke="#990504"/><path d="M1696 460h8.5" stroke="#990403"/><path d="M1704 460h8.5" stroke="#990302"/><path d="M1712 460h8.5" stroke="#990201"/><path d="M1720 460h8.5" stroke="#990100"/><path d="M1728 460h48.5" stroke="#990000"/><path d="M1184 468h72.5" stroke="#009299"/><path d="M1256 468h56.5" stroke="#009199"/><path d="M1312 468h24.5" stroke="#009099"/><path d="M1336 468h24.5" stroke="#008f99"/><path d="M1360 468h8.5" stroke="#088f99"/><path d="M1368 468h8.5" stroke="#158f99"/><path d="M1672 468h8.5" stroke="#990508"/><path d="M1680 468h8.5" stroke="#990407"/><path d="M1688 468h8.5" stroke="#990206"/><path d="M1696 468h8.5" stroke="#990105"/><path d="M1704 468h8.5" stroke="#990104"/><path d="M1712 468h8.5" stroke="#990003"/><path d="M1720 468h8.5" stroke="#990002"/><path d="M1728 468h8.5" stroke="#990001"/><path d="M1736 468h56.5" stroke="#990000"/><path d="M1184 476h32.5" stroke="#008999"/><path d="M1216 476h40.5" stroke="#008899"/><path d="M1256 476h8.5" stroke="#008799"/><path d="M1264 476h32.5" stroke="#008699"/><path d="M1296 476h24.5" stroke="#008599"/><path d="M1320 476h8.5" stroke="#008499"/><path d="M1328 476h24.5" stroke="#008399"/><path d="M1352 476h8.5" stroke="#018299"/><path d="M1360 476h8.5" stroke="#0d8299"/><path d="M1368 476h8.5" stroke="#198299"/><path d="M1648 476h8.5" stroke="#99050e"/><path d="M1656 476h8.5" stroke="#99040d"/><path d="M1664 476h8.5" stroke="#99030b"/><path d="M1672 476h8.5" stroke="#99020a"/><path d="M1680 476h8.5" stroke="#990109"/><path d="M1688 476h8.5" stroke="#990008"/><path d="M1696 476h8.5" stroke="#990007"/><path d="M1704 476h8.5" stroke="#990005"/><path d="M1712 476h16.5" stroke="#990004"/><path d="M1728 476h16.5" stroke="#990002"/><path d="M1744 476h8.5" stroke="#990001"/><path d="M1752 476h48.5" stroke="#990000"/><path d="M1184 484h8.5" stroke="#008199"/><path d="M1192 484h24.5" stroke="#008099"/><path d="M1216 484h24.5" stroke="#007f99"/><path d="M1240 484h8.5" stroke="#007e99"/><path d="M1248 484h24.5" stroke="#007d99"/><path d="M1272 484h16.5" stroke="#007c99"/><path d="M1288 484h8.5" stroke="#007b99"/><path d="M1296 484h24.5" stroke="#007a99"/><path d="M1320 484h16.5" stroke="#007999"/><path d="M1336 484h16.5" stroke="#007799"/><path d="M1352 484h8.5" stroke="#057699"/><path d="M1360 484h8.5" stroke="#117699"/><path d="M1632 484h8.5" stroke="#990513"/><path d="M1640 484h8.5" stroke="#990411"/><path d="M1648 484h8.5" stroke="#990310"/><path d="M1656 484h8.5" stroke="#99020e"/><path d="M1664 484h8.5" stroke="#99010d"/><path d="M1672 484h8.5" stroke="#99000b"/><path d="M1680 484h8.5" stroke="#99000a"/><path d="M1688 484h8.5" stroke="#990009"/><path d="M1696 484h8.5" stroke="#990008"/><path d="M1704 484h8.5" stroke="#990007"/><path d="M1712 484h8.5" stroke="#990006"/><path d="M1720 484h8.5" stroke="#990005"/><path d="M1728 484h8.5" stroke="#990004"/><path d="M1736 484h8.5" stroke="#990003"/><path d="M1744 484h8.5" stroke="#990002"/><path d="M1752 484h16.5" stroke="#990001"/><path d="M1768 484h40.5" stroke="#990000"/><path d="M1192 492h8.5" stroke="#007899"/><path d="M1200 492h24.5" stroke="#007799"/><path d="M1224 492h16.5" stroke="#007699"/><path d="M1240 492h8.5" stroke="#007599"/><path d="M1248 492h16.5" stroke="#007499"/><path d="M1264 492h16.5" stroke="#007399"/><path d="M1280 492h8.5" stroke="#007299"/><path d="M1288 492h16.5" stroke="#007199"/><path d="M1304 492h8.5" stroke="#007099"/><path d="M1312 492h8.5" stroke="#006f99"/><path d="M1320 492h16.5" stroke="#006e99"/><path d="M1336 492h8.5" stroke="#006d99"/><path d="M1344 492h8.5" stroke="#006c99"/><path d="M1352 492h8.5" stroke="#096b99"/><path d="M1360 492h8.5" stroke="#146a99"/><path d="M1608 492h8.5" stroke="#99061a"/><path d="M1616 492h8.5" stroke="#990519"/><path d="M1624 492h8.5" stroke="#990417"/><path d="M1632 492h8.5" stroke="#990215"/><path d="M1640 492h8.5" stroke="#990113"/><path d="M1648 492h8.5" stroke="#990011"/><path d="M1656 492h8.5" stroke="#990010"/><path d="M1664 492h8.5" stroke="#99000e"/><path d="M1672 492h8.5" stroke="#99000d"/><path d="M1680 492h8.5" stroke="#99000c"/><path d="M1688 492h8.5" stroke="#99000b"/><path d="M1696 492h8.5" stroke="#99000a"/><path d="M1704 492h8.5" stroke="#990008"/><path d="M1712 492h16.5" stroke="#990007"/><path d="M1728 492h8.5" stroke="#990005"/><path d="M1736 492h16.5" stroke="#990004"/><path d="M1752 492h16.5" stroke="#990002"/><path d="M1768 492h8.5" stroke="#990001"/><path d="M1776 492h48.5" stroke="#990000"/><path d="M1192 500h16.5" stroke="#007099"/><path d="M1208 500h8.5" stroke="#006f99"/><path d="M1216 500h16.5" stroke="#006e99"/><path d="M1232 500h16.5" stroke="#006d99"/><path d="M1248 500h8.5" stroke="#006c99"/><path d="M1256 500h8.5" stroke="#006b99"/><path d="M1264 500h16.5" stroke="#006a99"/><path d="M1280 500h8.5" stroke="#006999"/><path d="M1288 500h8.5" stroke="#006899"/><path d="M1296 500h16.5" stroke="#006799"/><path d="M1312 500h16.5" stroke="#006599"/><path d="M1328 500h8.5" stroke="#006499"/><path d="M1336 500h8.5" stroke="#006299"/><path d="M1344 500h8.5" stroke="#026299"/><path d="M1352 500h8.5" stroke="#0d6199"/><path d="M1592 500h8.5" stroke="#990621"/><path d="M1600 500h8.5" stroke="#99041f"/><path d="M1608 500h8.5" stroke="#99031c"/><path d="M1616 500h8.5" stroke="#99021a"/><path d="M1624 500h8.5" stroke="#990119"/><path d="M1632 500h8.5" stroke="#990017"/><path d="M1640 500h8.5" stroke="#990015"/><path d="M1648 500h8.5" stroke="#990013"/><path d="M1656 500h8.5" stroke="#990012"/><path d="M1664 500h8.5" stroke="#990010"/><path d="M1672 500h8.5" stroke="#99000f"/><path d="M1680 500h8.5" stroke="#99000e"/><path d="M1688 500h8.5" stroke="#99000d"/><path d="M1696 500h8.5" stroke="#99000b"/><path d="M1704 500h8.5" stroke="#99000a"/><path d="M1712 500h8.5" stroke="#990009"/><path d="M1720 500h8.5" stroke="#990008"/><path d="M1728 500h8.5" stroke="#990007"/><path d="M1736 500h8.5" stroke="#990006"/><path d="M1744 500h8.5" stroke="#990005"/><path d="M1752 500h8.5" stroke="#990004"/><path d="M1760 500h8.5" stroke="#990003"/><path d="M1768 500h16.5" stroke="#990002"/><path d="M1784 500h8.5" stroke="#990001"/><path d="M1792 500h32.5" stroke="#990000"/><path d="M1192 508h16.5" stroke="#006899"/><path d="M1208 508h16.5" stroke="#006799"/><path d="M1224 508h16.5" stroke="#006599"/><path d="M1240 508h16.5" stroke="#006499"/><path d="M1256 508h16.5" stroke="#006299"/><path d="M1272 508h8.5" stroke="#006199"/><path d="M1280 508h8.5" stroke="#006099"/><path d="M1288 508h8.5" stroke="#005f99"/><path d="M1296 508h8.5" stroke="#005e99"/><path d="M1304 508h8.5" stroke="#005d99"/><path d="M1312 508h8.5" stroke="#005c99"/><path d="M1320 508h8.5" stroke="#005b99"/><path d="M1328 508h8.5" stroke="#005a99"/><path d="M1336 508h8.5" stroke="#005999"/><path d="M1344 508h8.5" stroke="#075899"/><path d="M1352 508h8.5" stroke="#105799"/><path d="M1568 508h8.5" stroke="#99072b"/><path d="M1576 508h8.5" stroke="#990528"/><path d="M1584 508h8.5" stroke="#990425"/><path d="M1592 508h8.5" stroke="#990223"/><path d="M1600 508h8.5" stroke="#990120"/><path d="M1608 508h8.5" stroke="#99001e"/><path d="M1616 508h8.5" stroke="#99001c"/><path d="M1624 508h8.5" stroke="#99001a"/><path d="M1632 508h8.5" stroke="#990019"/><path d="M1640 508h8.5" stroke="#990017"/><path d="M1648 508h8.5" stroke="#990015"/><path d="M1656 508h8.5" stroke="#990013"/><path d="M1664 508h8.5" stroke="#990012"/><path d="M1672 508h8.5" stroke="#990011"/><path d="M1680 508h8.5" stroke="#99000f"/><path d="M1688 508h8.5" stroke="#99000e"/><path d="M1696 508h8.5" stroke="#99000d"/><path d="M1704 508h8.5" stroke="#99000b"/><path d="M1712 508h8.5" stroke="#99000a"/><path d="M1720 508h8.5" stroke="#990009"/><path d="M1728 508h8.5" stroke="#990008"/><path d="M1736 508h8.5" stroke="#990007"/><path d="M1744 508h8.5" stroke="#990006"/><path d="M1752 508h8.5" stroke="#990005"/><path d="M1760 508h16.5" stroke="#990004"/><path d="M1776 508h8.5" stroke="#990003"/><path d="M1784 508h8.5" stroke="#990002"/><path d="M1792 508h16.5" stroke="#990001"/><path d="M1808 508h16.5" stroke="#990000"/><path d="M1200 516h8.5" stroke="#006199"/><path d="M1208 516h16.5" stroke="#005f99"/><path d="M1224 516h8.5" stroke="#005e99"/><path d="M1232 516h8.5" stroke="#005d99"/><path d="M1240 516h16.5" stroke="#005c99"/><path d="M1256 516h8.5" stroke="#005b99"/><path d="M1264 516h8.5" stroke="#005a99"/><path d="M1272 516h8.5" stroke="#005999"/><path d="M1280 516h8.5" stroke="#005899"/><path d="M1288 516h8.5" stroke="#005799"/><path d="M1296 516h8.5" stroke="#005699"/><path d="M1304 516h8.5" stroke="#005599"/><path d="M1312 516h8.5" stroke="#005399"/><path d="M1320 516h16.5" stroke="#005299"/><path d="M1336 516h8.5" stroke="#005099"/><path d="M1344 516h8.5" stroke="#0a4f99"/><path d="M1352 516h8.5" stroke="#144d99"/><path d="M1544 516h8.5" stroke="#990837"/><path d="M1552 516h8.5" stroke="#990733"/><path d="M1560 516h8.5" stroke="#99052f"/><path d="M1568 516h8.5" stroke="#99042c"/><path d="M1576 516h8.5" stroke="#990229"/><path d="M1584 516h8.5" stroke="#990127"/><path d="M1592 516h8.5" stroke="#990025"/><path d="M1600 516h8.5" stroke="#990022"/><path d="M1608 516h8.5" stroke="#990020"/><path d="M1616 516h8.5" stroke="#99001e"/><path d="M1624 516h8.5" stroke="#99001c"/><path d="M1632 516h8.5" stroke="#99001a"/><path d="M1640 516h8.5" stroke="#990018"/><path d="M1648 516h8.5" stroke="#990017"/><path d="M1656 516h8.5" stroke="#990015"/><path d="M1664 516h8.5" stroke="#990014"/><path d="M1672 516h8.5" stroke="#990012"/><path d="M1680 516h8.5" stroke="#990011"/><path d="M1688 516h8.5" stroke="#990010"/><path d="M1696 516h8.5" stroke="#99000e"/><path d="M1704 516h8.5" stroke="#99000d"/><path d="M1712 516h8.5" stroke="#99000c"/><path d="M1720 516h8.5" stroke="#99000b"/><path d="M1728 516h8.5" stroke="#99000a"/><path d="M1736 516h16.5" stroke="#990008"/><path d="M1752 516h8.5" stroke="#990007"/><path d="M1760 516h8.5" stroke="#990006"/><path d="M1768 516h8.5" stroke="#990005"/><path d="M1776 516h16.5" stroke="#990004"/><path d="M1792 516h16.5" stroke="#990002"/><path d="M1808 516h8.5" stroke="#990001"/><path d="M1200 524h16.5" stroke="#005999"/><path d="M1216 524h8.5" stroke="#005899"/><path d="M1224 524h8.5" stroke="#005799"/><path d="M1232 524h8.5" stroke="#005699"/><path d="M1240 524h8.5" stroke="#005599"/><path d="M1248 524h8.5" stroke="#005499"/><path d="M1256 524h8.5" stroke="#005399"/><path d="M1264 524h8.5" stroke="#005299"/><path d="M1272 524h8.5" stroke="#005199"/><path d="M1280 524h8.5" stroke="#005099"/><path d="M1288 524h8.5" stroke="#004f99"/><path d="M1296 524h8.5" stroke="#004e99"/><path d="M1304 524h8.5" stroke="#004d99"/><path d="M1312 524h8.5" stroke="#004c99"/><path d="M1320 524h8.5" stroke="#004a99"/><path d="M1328 524h8.5" stroke="#004999"/><path d="M1336 524h8.5" stroke="#044799"/><path d="M1344 524h8.5" stroke="#0d4699"/><path d="M1528 524h8.5" stroke="#990840"/><path d="M1536 524h8.5" stroke="#99073c"/><path d="M1544 524h8.5" stroke="#990538"/><path d="M1552 524h8.5" stroke="#990335"/><path d="M1560 524h8.5" stroke="#990131"/><path d="M1568 524h8.5" stroke="#99002e"/><path d="M1576 524h8.5" stroke="#99002b"/><path d="M1584 524h8.5" stroke="#990029"/><path d="M1592 524h8.5" stroke="#990026"/><path d="M1600 524h8.5" stroke="#990024"/><path d="M1608 524h8.5" stroke="#990022"/><path d="M1616 524h8.5" stroke="#990020"/><path d="M1624 524h8.5" stroke="#99001d"/><path d="M1632 524h8.5" stroke="#99001c"/><path d="M1640 524h8.5" stroke="#99001a"/><path d="M1648 524h8.5" stroke="#990018"/><path d="M1656 524h8.5" stroke="#990017"/><path d="M1664 524h8.5" stroke="#990015"/><path d="M1672 524h8.5" stroke="#990014"/><path d="M1680 524h8.5" stroke="#990012"/><path d="M1688 524h8.5" stroke="#990011"/><path d="M1696 524h8.5" stroke="#990010"/><path d="M1704 524h8.5" stroke="#99000e"/><path d="M1712 524h8.5" stroke="#99000d"/><path d="M1720 524h8.5" stroke="#99000c"/><path d="M1728 524h8.5" stroke="#99000b"/><path d="M1736 524h8.5" stroke="#99000a"/><path d="M1744 524h8.5" stroke="#990009"/><path d="M1752 524h8.5" stroke="#990008"/><path d="M1760 524h8.5" stroke="#990007"/><path d="M1768 524h8.5" stroke="#990006"/><path d="M1776 524h16.5" stroke="#990005"/><path d="M1200 532h8.5" stroke="#005399"/><path d="M1208 532h8.5" stroke="#005299"/><path d="M1216 532h8.5" stroke="#005199"/><path d="M1224 532h8.5" stroke="#005099"/><path d="M1232 532h8.5" stroke="#004f99"/><path d="M1240 532h8.5" stroke="#004e99"/><path d="M1248 532h8.5" stroke="#004d99"/><path d="M1256 532h8.5" stroke="#004c99"/><path d="M1264 532h8.5" stroke="#004b99"/><path d="M1272 532h8.5" stroke="#004a99"/><path d="M1280 532h8.5" stroke="#004999"/><path d="M1288 532h8.5" stroke="#004799"/><path d="M1296 532h8.5" stroke="#004699"/><path d="M1304 532h8.5" stroke="#004599"/><path d="M1312 532h8.5" stroke="#004499"/><path d="M1320 532h8.5" stroke="#004399"/><path d="M1328 532h8.5" stroke="#004199"/><path d="M1336 532h8.5" stroke="#074099"/><path d="M1344 532h8.5" stroke="#103e99"/><path d="M1504 532h8.5" stroke="#990a51"/><path d="M1512 532h8.5" stroke="#99084c"/><path d="M1520 532h8.5" stroke="#990647"/><path d="M1528 532h8.5" stroke="#990442"/><path d="M1536 532h8.5" stroke="#99023e"/><path d="M1544 532h8.5" stroke="#99013a"/><path d="M1552 532h8.5" stroke="#990037"/><path d="M1560 532h8.5" stroke="#990033"/><path d="M1568 532h8.5" stroke="#990030"/><path d="M1576 532h8.5" stroke="#99002d"/><path d="M1584 532h8.5" stroke="#99002b"/><path d="M1592 532h8.5" stroke="#990028"/><path d="M1600 532h8.5" stroke="#990026"/><path d="M1608 532h8.5" stroke="#990023"/><path d="M1616 532h8.5" stroke="#990021"/><path d="M1624 532h8.5" stroke="#99001f"/><path d="M1632 532h8.5" stroke="#99001d"/><path d="M1640 532h8.5" stroke="#99001c"/><path d="M1648 532h8.5" stroke="#99001a"/><path d="M1656 532h8.5" stroke="#990018"/><path d="M1664 532h8.5" stroke="#990017"/><path d="M1672 532h8.5" stroke="#990015"/><path d="M1680 532h8.5" stroke="#990014"/><path d="M1688 532h8.5" stroke="#990013"/><path d="M1696 532h8.5" stroke="#990011"/><path d="M1704 532h8.5" stroke="#990010"/><path d="M1712 532h8.5" stroke="#99000e"/><path d="M1720 532h16.5" stroke="#99000d"/><path d="M1736 532h8.5" stroke="#99000b"/><path d="M1744 532h16.5" stroke="#99000a"/><path d="M1760 532h8.5" stroke="#990008"/><path d="M1208 540h8.5" stroke="#004b99"/><path d="M1216 540h8.5" stroke="#004a99"/><path d="M1224 540h8.5" stroke="#004999"/><path d="M1232 540h8.5" stroke="#004899"/><path d="M1240 540h8.5" stroke="#004799"/><path d="M1248 540h8.5" stroke="#004699"/><path d="M1256 540h8.5" stroke="#004599"/><path d="M1264 540h8.5" stroke="#004499"/><path d="M1272 540h8.5" stroke="#004399"/><path d="M1280 540h8.5" stroke="#004199"/><path d="M1288 540h8.5" stroke="#004099"/><path d="M1296 540h8.5" stroke="#003f99"/><path d="M1304 540h8.5" stroke="#003e99"/><path d="M1312 540h8.5" stroke="#003c99"/><path d="M1320 540h8.5" stroke="#003b99"/><path d="M1328 540h8.5" stroke="#023a99"/><path d="M1336 540h8.5" stroke="#0a3899"/><path d="M1488 540h8.5" stroke="#990a5f"/><path d="M1496 540h8.5" stroke="#990759"/><path d="M1504 540h8.5" stroke="#990553"/><path d="M1512 540h8.5" stroke="#99034d"/><path d="M1520 540h8.5" stroke="#990149"/><path d="M1528 540h8.5" stroke="#990044"/><path d="M1536 540h8.5" stroke="#990040"/><path d="M1544 540h8.5" stroke="#99003c"/><path d="M1552 540h8.5" stroke="#990038"/><path d="M1560 540h8.5" stroke="#990035"/><path d="M1568 540h8.5" stroke="#990032"/><path d="M1576 540h8.5" stroke="#99002f"/><path d="M1584 540h8.5" stroke="#99002c"/><path d="M1592 540h8.5" stroke="#99002a"/><path d="M1600 540h8.5" stroke="#990027"/><path d="M1608 540h8.5" stroke="#990025"/><path d="M1616 540h8.5" stroke="#990023"/><path d="M1624 540h8.5" stroke="#990021"/><path d="M1632 540h8.5" stroke="#99001f"/><path d="M1640 540h8.5" stroke="#99001d"/><path d="M1648 540h8.5" stroke="#99001c"/><path d="M1656 540h8.5" stroke="#99001a"/><path d="M1664 540h8.5" stroke="#990018"/><path d="M1672 540h8.5" stroke="#990017"/><path d="M1680 540h8.5" stroke="#990015"/><path d="M1688 540h8.5" stroke="#990014"/><path d="M1696 540h8.5" stroke="#990013"/><path d="M1704 540h8.5" stroke="#990011"/><path d="M1712 540h8.5" stroke="#990010"/><path d="M1720 540h8.5" stroke="#99000f"/><path d="M1728 540h8.5" stroke="#99000e"/><path d="M1736 540h8.5" stroke="#99000d"/><path d="M1208 548h8.5" stroke="#004599"/><path d="M1216 548h8.5" stroke="#004499"/><path d="M1224 548h8.5" stroke="#004399"/><path d="M1232 548h8.5" stroke="#004299"/><path d="M1240 548h8.5" stroke="#004199"/><path d="M1248 548h8.5" stroke="#004099"/><path d="M1256 548h8.5" stroke="#003e99"/><path d="M1264 548h8.5" stroke="#003d99"/><path d="M1272 548h8.5" stroke="#003c99"/><path d="M1280 548h8.5" stroke="#003b99"/><path d="M1288 548h8.5" stroke="#003a99"/><path d="M1296 548h8.5" stroke="#003899"/><path d="M1304 548h8.5" stroke="#003799"/><path d="M1312 548h8.5" stroke="#003599"/><path d="M1320 548h8.5" stroke="#003499"/><path d="M1328 548h8.5" stroke="#053299"/><path d="M1336 548h8.5" stroke="#0d3199"/><path d="M1464 548h8.5" stroke="#990d78"/><path d="M1472 548h8.5" stroke="#990a70"/><path d="M1480 548h8.5" stroke="#990768"/><path d="M1488 548h8.5" stroke="#990561"/><path d="M1496 548h8.5" stroke="#99025b"/><path d="M1504 548h8.5" stroke="#990155"/><path d="M1512 548h8.5" stroke="#99004f"/><path d="M1520 548h8.5" stroke="#99004a"/><path d="M1528 548h8.5" stroke="#990046"/><path d="M1536 548h8.5" stroke="#990041"/><path d="M1544 548h8.5" stroke="#99003e"/><path d="M1552 548h8.5" stroke="#99003a"/><path d="M1560 548h8.5" stroke="#990037"/><path d="M1568 548h8.5" stroke="#990034"/><path d="M1576 548h8.5" stroke="#990031"/><path d="M1584 548h8.5" stroke="#99002e"/><path d="M1592 548h8.5" stroke="#99002b"/><path d="M1600 548h8.5" stroke="#990029"/><path d="M1608 548h8.5" stroke="#990026"/><path d="M1616 548h8.5" stroke="#990025"/><path d="M1624 548h8.5" stroke="#990022"/><path d="M1632 548h8.5" stroke="#990020"/><path d="M1640 548h8.5" stroke="#99001f"/><path d="M1648 548h8.5" stroke="#99001d"/><path d="M1656 548h8.5" stroke="#99001b"/><path d="M1664 548h8.5" stroke="#99001a"/><path d="M1672 548h8.5" stroke="#990018"/><path d="M1680 548h8.5" stroke="#990017"/><path d="M1688 548h8.5" stroke="#990015"/><path d="M1696 548h8.5" stroke="#990014"/><path d="M1704 548h8.5" stroke="#990013"/><path d="M1712 548h8.5" stroke="#990011"/><path d="M1216 556h8.5" stroke="#003e99"/><path d="M1224 556h8.5" stroke="#003d99"/><path d="M1232 556h16.5" stroke="#003b99"/><path d="M1248 556h8.5" stroke="#003a99"/><path d="M1256 556h8.5" stroke="#003899"/><path d="M1264 556h8.5" stroke="#003799"/><path d="M1272 556h8.5" stroke="#003599"/><path d="M1280 556h8.5" stroke="#003499"/><path d="M1288 556h8.5" stroke="#003399"/><path d="M1296 556h8.5" stroke="#003199"/><path d="M1304 556h8.5" stroke="#003099"/><path d="M1312 556h8.5" stroke="#002f99"/><path d="M1320 556h8.5" stroke="#002d99"/><path d="M1328 556h8.5" stroke="#082b99"/><path d="M1336 556h8.5" stroke="#102a99"/><path d="M1448 556h8.5" stroke="#990d8e"/><path d="M1456 556h8.5" stroke="#990983"/><path d="M1464 556h8.5" stroke="#99077a"/><path d="M1472 556h8.5" stroke="#990471"/><path d="M1480 556h8.5" stroke="#99026a"/><path d="M1488 556h8.5" stroke="#990062"/><path d="M1496 556h8.5" stroke="#99005c"/><path d="M1504 556h8.5" stroke="#990056"/><path d="M1512 556h8.5" stroke="#990051"/><path d="M1520 556h8.5" stroke="#99004c"/><path d="M1528 556h8.5" stroke="#990047"/><path d="M1536 556h8.5" stroke="#990043"/><path d="M1544 556h8.5" stroke="#990040"/><path d="M1552 556h8.5" stroke="#99003c"/><path d="M1560 556h8.5" stroke="#990038"/><path d="M1568 556h8.5" stroke="#990035"/><path d="M1576 556h8.5" stroke="#990032"/><path d="M1584 556h8.5" stroke="#99002f"/><path d="M1592 556h8.5" stroke="#99002d"/><path d="M1600 556h8.5" stroke="#99002b"/><path d="M1608 556h8.5" stroke="#990028"/><path d="M1616 556h8.5" stroke="#990026"/><path d="M1624 556h8.5" stroke="#990024"/><path d="M1632 556h8.5" stroke="#990022"/><path d="M1640 556h8.5" stroke="#990020"/><path d="M1648 556h8.5" stroke="#99001e"/><path d="M1656 556h8.5" stroke="#99001d"/><path d="M1664 556h8.5" stroke="#99001b"/><path d="M1672 556h8.5" stroke="#990019"/><path d="M1680 556h8.5" stroke="#990018"/><path d="M1688 556h8.5" stroke="#990017"/><path d="M1216 564h8.5" stroke="#003899"/><path d="M1224 564h8.5" stroke="#003799"/><path d="M1232 564h8.5" stroke="#003699"/><path d="M1240 564h8.5" stroke="#003599"/><path d="M1248 564h8.5" stroke="#003499"/><path d="M1256 564h8.5" stroke="#003299"/><path d="M1264 564h8.5" stroke="#003199"/><path d="M1272 564h8.5" stroke="#002f99"/><path d="M1280 564h8.5" stroke="#002e99"/><path d="M1288 564h8.5" stroke="#002c99"/><path d="M1296 564h8.5" stroke="#002b99"/><path d="M1304 564h8.5" stroke="#002a99"/><path d="M1312 564h8.5" stroke="#002899"/><path d="M1320 564h8.5" stroke="#022699"/><path d="M1328 564h8.5" stroke="#0b2599"/><path d="M1424 564h8.5" stroke="#7f0e99"/><path d="M1432 564h8.5" stroke="#8b0b99"/><path d="M1440 564h8.5" stroke="#970999"/><path d="M1448 564h8.5" stroke="#99068f"/><path d="M1456 564h8.5" stroke="#990385"/><path d="M1464 564h8.5" stroke="#99017b"/><path d="M1472 564h8.5" stroke="#990073"/><path d="M1480 564h8.5" stroke="#99006b"/><path d="M1488 564h8.5" stroke="#990064"/><path d="M1496 564h8.5" stroke="#99005e"/><path d="M1504 564h8.5" stroke="#990058"/><path d="M1512 564h8.5" stroke="#990053"/><path d="M1520 564h8.5" stroke="#99004d"/><path d="M1528 564h8.5" stroke="#990049"/><path d="M1536 564h8.5" stroke="#990045"/><path d="M1544 564h8.5" stroke="#990041"/><path d="M1552 564h8.5" stroke="#99003d"/><path d="M1560 564h8.5" stroke="#99003a"/><path d="M1568 564h8.5" stroke="#990037"/><path d="M1576 564h8.5" stroke="#990034"/><path d="M1584 564h8.5" stroke="#990031"/><path d="M1592 564h8.5" stroke="#99002f"/><path d="M1600 564h8.5" stroke="#99002c"/><path d="M1608 564h8.5" stroke="#99002a"/><path d="M1616 564h8.5" stroke="#990028"/><path d="M1624 564h8.5" stroke="#990025"/><path d="M1632 564h8.5" stroke="#990023"/><path d="M1640 564h8.5" stroke="#990022"/><path d="M1648 564h8.5" stroke="#990020"/><path d="M1656 564h8.5" stroke="#99001e"/><path d="M1664 564h8.5" stroke="#99001c"/><path d="M1216 572h8.5" stroke="#003299"/><path d="M1224 572h8.5" stroke="#003199"/><path d="M1232 572h8.5" stroke="#003099"/><path d="M1240 572h8.5" stroke="#002f99"/><path d="M1248 572h8.5" stroke="#002e99"/><path d="M1256 572h8.5" stroke="#002c99"/><path d="M1264 572h8.5" stroke="#002b99"/><path d="M1272 572h8.5" stroke="#002999"/><path d="M1280 572h8.5" stroke="#002899"/><path d="M1288 572h8.5" stroke="#002799"/><path d="M1296 572h8.5" stroke="#002599"/><path d="M1304 572h8.5" stroke="#002499"/><path d="M1312 572h8.5" stroke="#002299"/><path d="M1320 572h8.5" stroke="#052099"/><path d="M1328 572h8.5" stroke="#0d1f99"/><path d="M1408 572h8.5" stroke="#690b99"/><path d="M1416 572h8.5" stroke="#740999"/><path d="M1424 572h8.5" stroke="#7f0799"/><path d="M1432 572h8.5" stroke="#8b0499"/><path d="M1440 572h8.5" stroke="#960299"/><path d="M1448 572h8.5" stroke="#990090"/><path d="M1456 572h8.5" stroke="#990086"/><path d="M1464 572h8.5" stroke="#99007c"/><path d="M1472 572h8.5" stroke="#990074"/><path d="M1480 572h8.5" stroke="#99006d"/><path d="M1488 572h8.5" stroke="#990065"/><path d="M1496 572h8.5" stroke="#99005f"/><path d="M1504 572h8.5" stroke="#990059"/><path d="M1512 572h8.5" stroke="#990054"/><path d="M1520 572h8.5" stroke="#99004f"/><path d="M1528 572h8.5" stroke="#99004b"/><path d="M1536 572h8.5" stroke="#990047"/><path d="M1544 572h8.5" stroke="#990043"/><path d="M1552 572h8.5" stroke="#99003f"/><path d="M1560 572h8.5" stroke="#99003c"/><path d="M1568 572h8.5" stroke="#990038"/><path d="M1576 572h8.5" stroke="#990035"/><path d="M1584 572h8.5" stroke="#990033"/><path d="M1592 572h8.5" stroke="#990030"/><path d="M1600 572h8.5" stroke="#99002e"/><path d="M1608 572h8.5" stroke="#99002b"/><path d="M1616 572h8.5" stroke="#990029"/><path d="M1624 572h8.5" stroke="#990027"/><path d="M1632 572h8.5" stroke="#990025"/><path d="M1640 572h8.5" stroke="#990023"/><path d="M1224 580h8.5" stroke="#002c99"/><path d="M1232 580h8.5" stroke="#002b99"/><path d="M1240 580h8.5" stroke="#002999"/><path d="M1248 580h8.5" stroke="#002899"/><path d="M1256 580h8.5" stroke="#002799"/><path d="M1264 580h8.5" stroke="#002599"/><path d="M1272 580h8.5" stroke="#002499"/><path d="M1280 580h8.5" stroke="#002399"/><path d="M1288 580h8.5" stroke="#002199"/><path d="M1296 580h8.5" stroke="#002099"/><path d="M1304 580h8.5" stroke="#001e99"/><path d="M1312 580h8.5" stroke="#011c99"/><path d="M1320 580h8.5" stroke="#081a99"/><path d="M1328 580h8.5" stroke="#101999"/><path d="M1384 580h8.5" stroke="#4c0c99"/><path d="M1392 580h8.5" stroke="#560a99"/><path d="M1400 580h8.5" stroke="#5f0799"/><path d="M1408 580h8.5" stroke="#6a0599"/><path d="M1416 580h8.5" stroke="#740399"/><path d="M1424 580h8.5" stroke="#7f0199"/><path d="M1432 580h8.5" stroke="#8a0099"/><path d="M1440 580h8.5" stroke="#950099"/><path d="M1448 580h8.5" stroke="#990091"/><path d="M1456 580h8.5" stroke="#990086"/><path d="M1464 580h8.5" stroke="#99007d"/><path d="M1472 580h8.5" stroke="#990075"/><path d="M1480 580h8.5" stroke="#99006e"/><path d="M1488 580h8.5" stroke="#990067"/><path d="M1496 580h8.5" stroke="#990061"/><path d="M1504 580h8.5" stroke="#99005b"/><path d="M1512 580h8.5" stroke="#990056"/><path d="M1520 580h8.5" stroke="#990051"/><path d="M1528 580h8.5" stroke="#99004c"/><path d="M1536 580h8.5" stroke="#990048"/><path d="M1544 580h8.5" stroke="#990044"/><path d="M1552 580h8.5" stroke="#990041"/><path d="M1560 580h8.5" stroke="#99003d"/><path d="M1568 580h8.5" stroke="#99003a"/><path d="M1576 580h8.5" stroke="#990037"/><path d="M1584 580h8.5" stroke="#990034"/><path d="M1592 580h8.5" stroke="#990032"/><path d="M1600 580h8.5" stroke="#99002f"/><path d="M1608 580h8.5" stroke="#99002d"/><path d="M1616 580h8.5" stroke="#99002b"/><path d="M1224 588h8.5" stroke="#002799"/><path d="M1232 588h8.5" stroke="#002699"/><path d="M1240 588h8.5" stroke="#002499"/><path d="M1248 588h8.5" stroke="#002399"/><path d="M1256 588h8.5" stroke="#002299"/><path d="M1264 588h8.5" stroke="#002099"/><path d="M1272 588h8.5" stroke="#001f99"/><path d="M1280 588h8.5" stroke="#001d99"/><path d="M1288 588h8.5" stroke="#001c99"/><path d="M1296 588h8.5" stroke="#001a99"/><path d="M1304 588h8.5" stroke="#001999"/><path d="M1312 588h8.5" stroke="#041799"/><path d="M1320 588h8.5" stroke="#0b1599"/><path d="M1368 588h8.5" stroke="#3b0a99"/><path d="M1376 588h8.5" stroke="#440899"/><path d="M1384 588h8.5" stroke="#4d0699"/><path d="M1392 588h8.5" stroke="#560499"/><path d="M1400 588h8.5" stroke="#600299"/><path d="M1408 588h8.5" stroke="#6a0099"/><path d="M1416 588h8.5" stroke="#740099"/><path d="M1424 588h8.5" stroke="#7f0099"/><path d="M1432 588h8.5" stroke="#8a0099"/><path d="M1440 588h8.5" stroke="#950099"/><path d="M1448 588h8.5" stroke="#990092"/><path d="M1456 588h8.5" stroke="#990088"/><path d="M1464 588h8.5" stroke="#99007f"/><path d="M1472 588h8.5" stroke="#990077"/><path d="M1480 588h8.5" stroke="#99006f"/><path d="M1488 588h8.5" stroke="#990068"/><path d="M1496 588h8.5" stroke="#990062"/><path d="M1504 588h8.5" stroke="#99005c"/><path d="M1512 588h8.5" stroke="#990057"/><path d="M1520 588h8.5" stroke="#990052"/><path d="M1528 588h8.5" stroke="#99004e"/><path d="M1536 588h8.5" stroke="#99004a"/><path d="M1544 588h8.5" stroke="#990046"/><path d="M1552 588h8.5" stroke="#990042"/><path d="M1560 588h8.5" stroke="#99003f"/><path d="M1568 588h8.5" stroke="#99003b"/><path d="M1576 588h8.5" stroke="#990038"/><path d="M1584 588h8.5" stroke="#990036"/><path d="M1592 588h8.5" stroke="#990033"/><path d="M1232 596h8.5" stroke="#002099"/><path d="M1240 596h8.5" stroke="#001f99"/><path d="M1248 596h8.5" stroke="#001e99"/><path d="M1256 596h8.5" stroke="#001c99"/><path d="M1264 596h8.5" stroke="#001b99"/><path d="M1272 596h8.5" stroke="#001999"/><path d="M1280 596h8.5" stroke="#001899"/><path d="M1288 596h8.5" stroke="#001699"/><path d="M1296 596h8.5" stroke="#001599"/><path d="M1304 596h8.5" stroke="#001399"/><path d="M1312 596h8.5" stroke="#061199"/><path d="M1320 596h8.5" stroke="#0d1099"/><path d="M1344 596h8.5" stroke="#240a99"/><path d="M1352 596h8.5" stroke="#2c0899"/><path d="M1360 596h8.5" stroke="#340799"/><path d="M1368 596h8.5" stroke="#3d0599"/><path d="M1376 596h8.5" stroke="#460299"/><path d="M1384 596h8.5" stroke="#4f0199"/><path d="M1392 596h8.5" stroke="#580099"/><path d="M1400 596h8.5" stroke="#610099"/><path d="M1408 596h8.5" stroke="#6b0099"/><path d="M1416 596h8.5" stroke="#740099"/><path d="M1424 596h8.5" stroke="#7f0099"/><path d="M1432 596h8.5" stroke="#890099"/><path d="M1440 596h8.5" stroke="#940099"/><path d="M1448 596h8.5" stroke="#990093"/><path d="M1456 596h8.5" stroke="#990089"/><path d="M1464 596h8.5" stroke="#990080"/><path d="M1472 596h8.5" stroke="#990078"/><path d="M1480 596h8.5" stroke="#990070"/><path d="M1488 596h8.5" stroke="#99006a"/><path d="M1496 596h8.5" stroke="#990064"/><path d="M1504 596h8.5" stroke="#99005e"/><path d="M1512 596h8.5" stroke="#990059"/><path d="M1520 596h8.5" stroke="#990054"/><path d="M1528 596h8.5" stroke="#99004f"/><path d="M1536 596h8.5" stroke="#99004b"/><path d="M1544 596h8.5" stroke="#990047"/><path d="M1552 596h8.5" stroke="#990044"/><path d="M1560 596h8.5" stroke="#990040"/><path d="M1568 596h8.5" stroke="#99003d"/><path d="M1232 604h8.5" stroke="#001c99"/><path d="M1240 604h8.5" stroke="#001a99"/><path d="M1248 604h8.5" stroke="#001999"/><path d="M1256 604h8.5" stroke="#001799"/><path d="M1264 604h8.5" stroke="#001699"/><path d="M1272 604h8.5" stroke="#001499"/><path d="M1280 604h8.5" stroke="#001399"/><path d="M1288 604h8.5" stroke="#001199"/><path d="M1296 604h8.5" stroke="#001099"/><path d="M1304 604h8.5" stroke="#020e99"/><path d="M1312 604h8.5" stroke="#090d99"/><path d="M1328 604h8.5" stroke="#170999"/><path d="M1336 604h8.5" stroke="#1f0799"/><path d="M1344 604h8.5" stroke="#260599"/><path d="M1352 604h8.5" stroke="#2e0499"/><path d="M1360 604h8.5" stroke="#360199"/><path d="M1368 604h8.5" stroke="#3e0099"/><path d="M1376 604h8.5" stroke="#470099"/><path d="M1384 604h8.5" stroke="#500099"/><path d="M1392 604h8.5" stroke="#580099"/><path d="M1400 604h8.5" stroke="#620099"/><path d="M1408 604h8.5" stroke="#6b0099"/><path d="M1416 604h8.5" stroke="#750099"/><path d="M1424 604h8.5" stroke="#7f0099"/><path d="M1432 604h8.5" stroke="#890099"/><path d="M1440 604h8.5" stroke="#940099"/><path d="M1448 604h8.5" stroke="#990094"/><path d="M1456 604h8.5" stroke="#99008a"/><path d="M1464 604h8.5" stroke="#990081"/><path d="M1472 604h8.5" stroke="#990079"/><path d="M1480 604h8.5" stroke="#990071"/><path d="M1488 604h8.5" stroke="#99006b"/><path d="M1496 604h8.5" stroke="#990065"/><path d="M1504 604h8.5" stroke="#99005f"/><path d="M1512 604h8.5" stroke="#99005a"/><path d="M1520 604h8.5" stroke="#990055"/><path d="M1528 604h8.5" stroke="#990051"/><path d="M1536 604h8.5" stroke="#99004d"/><path d="M1544 604h8.5" stroke="#990049"/><path d="M1552 604h8.5" stroke="#990045"/><path d="M1240 612h8.5" stroke="#001699"/><path d="M1248 612h8.5" stroke="#001499"/><path d="M1256 612h8.5" stroke="#001399"/><path d="M1264 612h8.5" stroke="#001199"/><path d="M1272 612h8.5" stroke="#001099"/><path d="M1280 612h8.5" stroke="#000e99"/><path d="M1288 612h8.5" stroke="#000d99"/><path d="M1296 612h8.5" stroke="#000b99"/><path d="M1304 612h8.5" stroke="#040999"/><path d="M1312 612h8.5" stroke="#0b0899"/><path d="M1320 612h8.5" stroke="#120699"/><path d="M1328 612h8.5" stroke="#190499"/><path d="M1336 612h8.5" stroke="#200299"/><path d="M1344 612h8.5" stroke="#280099"/><path d="M1352 612h8.5" stroke="#300099"/><path d="M1360 612h8.5" stroke="#380099"/><path d="M1368 612h8.5" stroke="#400099"/><path d="M1376 612h8.5" stroke="#480099"/><path d="M1384 612h8.5" stroke="#500099"/><path d="M1392 612h8.5" stroke="#590099"/><path d="M1400 612h8.5" stroke="#620099"/><path d="M1408 612h8.5" stroke="#6b0099"/><path d="M1416 612h8.5" stroke="#750099"/><path d="M1424 612h8.5" stroke="#7f0099"/><path d="M1432 612h8.5" stroke="#890099"/><path d="M1440 612h8.5" stroke="#930099"/><path d="M1448 612h8.5" stroke="#990094"/><path d="M1456 612h8.5" stroke="#99008b"/><path d="M1464 612h8.5" stroke="#990082"/><path d="M1472 612h8.5" stroke="#99007a"/><path d="M1480 612h8.5" stroke="#990073"/><path d="M1488 612h8.5" stroke="#99006d"/><path d="M1496 612h8.5" stroke="#990066"/><path d="M1504 612h8.5" stroke="#990061"/><path d="M1512 612h8.5" stroke="#99005c"/><path d="M1520 612h8.5" stroke="#990057"/><path d="M1528 612h8.5" stroke="#990052"/><path d="M1240 620h8.5" stroke="#001199"/><path d="M1248 620h8.5" stroke="#001099"/><path d="M1256 620h8.5" stroke="#000e99"/><path d="M1264 620h8.5" stroke="#000d99"/><path d="M1272 620h8.5" stroke="#000b99"/><path d="M1280 620h8.5" stroke="#000a99"/><path d="M1288 620h8.5" stroke="#000899"/><path d="M1296 620h8.5" stroke="#000799"/><path d="M1304 620h8.5" stroke="#070599"/><path d="M1312 620h8.5" stroke="#0e0399"/><path d="M1320 620h8.5" stroke="#140199"/><path d="M1328 620h8.5" stroke="#1c0099"/><path d="M1336 620h8.5" stroke="#230099"/><path d="M1344 620h8.5" stroke="#2a0099"/><path d="M1352 620h8.5" stroke="#310099"/><path d="M1360 620h8.5" stroke="#390099"/><path d="M1368 620h8.5" stroke="#410099"/><path d="M1376 620h8.5" stroke="#490099"/><path d="M1384 620h8.5" stroke="#520099"/><path d="M1392 620h8.5" stroke="#5a0099"/><path d="M1400 620h8.5" stroke="#630099"/><path d="M1408 620h8.5" stroke="#6c0099"/><path d="M1416 620h8.5" stroke="#750099"/><path d="M1424 620h8.5" stroke="#7f0099"/><path d="M1432 620h8.5" stroke="#890099"/><path d="M1440 620h8.5" stroke="#920099"/><path d="M1448 620h8.5" stroke="#990095"/><path d="M1456 620h8.5" stroke="#99008c"/><path d="M1464 620h8.5" stroke="#990083"/><path d="M1472 620h8.5" stroke="#99007b"/><path d="M1480 620h8.5" stroke="#990074"/><path d="M1488 620h8.5" stroke="#99006e"/><path d="M1496 620h8.5" stroke="#990068"/><path d="M1504 620h8.5" stroke="#990062"/><path d="M1248 628h8.5" stroke="#000b99"/><path d="M1256 628h8.5" stroke="#000a99"/><path d="M1264 628h8.5" stroke="#000899"/><path d="M1272 628h8.5" stroke="#000799"/><path d="M1280 628h8.5" stroke="#000599"/><path d="M1288 628h8.5" stroke="#000499"/><path d="M1296 628h8.5" stroke="#030299"/><path d="M1304 628h8.5" stroke="#090099"/><path d="M1312 628h8.5" stroke="#100099"/><path d="M1320 628h8.5" stroke="#160099"/><path d="M1328 628h8.5" stroke="#1d0099"/><path d="M1336 628h8.5" stroke="#250099"/><path d="M1344 628h8.5" stroke="#2c0099"/><path d="M1352 628h8.5" stroke="#330099"/><path d="M1360 628h8.5" stroke="#3b0099"/><path d="M1368 628h8.5" stroke="#430099"/><path d="M1376 628h8.5" stroke="#4a0099"/><path d="M1384 628h8.5" stroke="#530099"/><path d="M1392 628h8.5" stroke="#5b0099"/><path d="M1400 628h8.5" stroke="#640099"/><path d="M1408 628h8.5" stroke="#6d0099"/><path d="M1416 628h8.5" stroke="#760099"/><path d="M1424 628h8.5" stroke="#7f0099"/><path d="M1432 628h8.5" stroke="#880099"/><path d="M1440 628h8.5" stroke="#920099"/><path d="M1448 628h8.5" stroke="#990096"/><path d="M1456 628h8.5" stroke="#99008c"/><path d="M1464 628h8.5" stroke="#990084"/><path d="M1472 628h8.5" stroke="#99007c"/><path d="M1480 628h8.5" stroke="#990075"/><path d="M1256 636h8.5" stroke="#000699"/><path d="M1264 636h8.5" stroke="#000499"/><path d="M1272 636h8.5" stroke="#000299"/><path d="M1280 636h8.5" stroke="#000199"/><path d="M1288 636h8.5" stroke="#000099"/><path d="M1296 636h8.5" stroke="#050099"/><path d="M1304 636h8.5" stroke="#0b0099"/><path d="M1312 636h8.5" stroke="#120099"/><path d="M1320 636h8.5" stroke="#190099"/><path d="M1328 636h8.5" stroke="#1f0099"/><path d="M1336 636h8.5" stroke="#260099"/><path d="M1344 636h8.5" stroke="#2e0099"/><path d="M1352 636h8.5" stroke="#350099"/><path d="M1360 636h8.5" stroke="#3c0099"/><path d="M1368 636h8.5" stroke="#440099"/><path d="M1376 636h8.5" stroke="#4c0099"/><path d="M1384 636h8.5" stroke="#530099"/><path d="M1392 636h8.5" stroke="#5c0099"/><path d="M1400 636h8.5" stroke="#640099"/><path d="M1408 636h8.5" stroke="#6d0099"/><path d="M1416 636h8.5" stroke="#760099"/><path d="M1424 636h8.5" stroke="#7f0099"/><path d="M1432 636h8.5" stroke="#880099"/><path d="M1440 636h8.5" stroke="#920099"/><path d="M1448 636h8.5" stroke="#990097"/><path d="M1456 636h8.5" stroke="#99008e"/><path d="M1256 644h8.5" stroke="#000299"/><path d="M1264 644h24.5" stroke="#000099"/><path d="M1288 644h8.5" stroke="#010099"/><path d="M1296 644h8.5" stroke="#070099"/><path d="M1304 644h8.5" stroke="#0e0099"/><path d="M1312 644h8.5" stroke="#140099"/><path d="M1320 644h8.5" stroke="#1a0099"/><path d="M1328 644h8.5" stroke="#210099"/><path d="M1336 644h8.5" stroke="#280099"/><path d="M1344 644h8.5" stroke="#2f0099"/><path d="M1352 644h8.5" stroke="#360099"/><path d="M1360 644h8.5" stroke="#3d0099"/><path d="M1368 644h8.5" stroke="#450099"/><path d="M1376 644h8.5" stroke="#4d0099"/><path d="M1384 644h8.5" stroke="#550099"/><path d="M1392 644h8.5" stroke="#5c0099"/><path d="M1400 644h8.5" stroke="#650099"/><path d="M1408 644h8.5" stroke="#6d0099"/><path d="M1416 644h8.5" stroke="#760099"/><path d="M1424 644h8.5" stroke="#7f0099"/><path d="M1432 644h8.5" stroke="#880099"/><path d="M1264 652h24.5" stroke="#000099"/><path d="M1288 652h8.5" stroke="#040099"/><path d="M1296 652h8.5" stroke="#0a0099"/><path d="M1304 652h8.5" stroke="#100099"/><path d="M1312 652h8.5" stroke="#160099"/><path d="M1320 652h8.5" stroke="#1c0099"/><path d="M1328 652h8.5" stroke="#230099"/><path d="M1336 652h8.5" stroke="#290099"/><path d="M1344 652h8.5" stroke="#310099"/><path d="M1352 652h8.5" stroke="#380099"/><path d="M1360 652h8.5" stroke="#3f0099"/><path d="M1368 652h8.5" stroke="#460099"/><path d="M1376 652h8.5" stroke="#4d0099"/><path d="M1384 652h8.5" stroke="#550099"/><path d="M1392 652h8.5" stroke="#5d0099"/><path d="M1400 652h8.5" stroke="#650099"/><path d="M1408 652h8.5" stroke="#6e0099"/><path d="M1272 660h16.5" stroke="#000099"/><path d="M1288 660h8.5" stroke="#050099"/><path d="M1296 660h8.5" stroke="#0b0099"/><path d="M1304 660h8.5" stroke="#110099"/><path d="M1312 660h8.5" stroke="#180099"/><path d="M1320 660h8.5" stroke="#1e0099"/><path d="M1328 660h8.5" stroke="#250099"/><path d="M1336 660h8.5" stroke="#2b0099"/><path d="M1344 660h8.5" stroke="#320099"/><path d="M1352 660h8.5" stroke="#390099"/><path d="M1360 660h8.5" stroke="#400099"/><path d="M1368 660h8.5" stroke="#470099"/><path d="M1376 660h8.5" stroke="#4f0099"/><path d="M1384 660h8.5" stroke="#560099"/><path d="M1280 668h8.5" stroke="#020099"/><path d="M1288 668h8.5" stroke="#080099"/><path d="M1296 668h8.5" stroke="#0e0099"/><path d="M1304 668h8.5" stroke="#140099"/><path d="M1312 668h8.5" stroke="#1a0099"/><path d="M1320 668h8.5" stroke="#200099"/><path d="M1328 668h8.5" stroke="#260099"/><path d="M1336 668h8.5" stroke="#2d0099"/><path d="M1344 668h8.5" stroke="#340099"/><path d="M1352 668h8.5" stroke="#3a0099"/><path d="M1360 668h8.5" stroke="#410099"/><path d="M1296 676h8.5" stroke="#0e0099"/><path d="M1304 676h8.5" stroke="#140099"/><path d="M1312 676h8.5" stroke="#1a0099"/><path d="M1320 676h8.5" stroke="#210099"/><path d="M1328 676h8.5" stroke="#270099"/><path d="M1336 676h8.5" stroke="#2e0099"/></g></g>
<g clip-path="url(#cTri)"><g filter="url(#fB6)" stroke-width="6.5" fill="none"><path d="M1424 279h6.5" stroke="#00ff00"/><path d="M1418 285h12.5" stroke="#00ff00"/><path d="M1430 285h6.5" stroke="#03ff00"/><path d="M1436 285h6.5" stroke="#09ff00"/><path d="M1412 291h6.5" stroke="#00ff03"/><path d="M1418 291h6.5" stroke="#00ff02"/><path d="M1424 291h6.5" stroke="#00ff01"/><path d="M1430 291h6.5" stroke="#05ff00"/><path d="M1436 291h6.5" stroke="#0bff00"/><path d="M1442 291h6.5" stroke="#12ff00"/><path d="M1448 291h6.5" stroke="#18ff00"/><path d="M1412 297h6.5" stroke="#00ff06"/><path d="M1418 297h6.5" stroke="#00ff04"/><path d="M1424 297h6.5" stroke="#02ff03"/><path d="M1430 297h6.5" stroke="#08ff02"/><path d="M1436 297h6.5" stroke="#0eff00"/><path d="M1442 297h6.5" stroke="#15ff00"/><path d="M1448 297h6.5" stroke="#1cff00"/><path d="M1454 297h6.5" stroke="#23ff00"/><path d="M1460 297h6.5" stroke="#2bff00"/><path d="M1412 303h6.5" stroke="#00ff09"/><path d="M1418 303h6.5" stroke="#00ff07"/><path d="M1424 303h6.5" stroke="#04ff06"/><path d="M1430 303h6.5" stroke="#0aff04"/><path d="M1436 303h6.5" stroke="#11ff03"/><path d="M1442 303h6.5" stroke="#18ff01"/><path d="M1448 303h6.5" stroke="#1fff00"/><path d="M1454 303h6.5" stroke="#27ff00"/><path d="M1460 303h6.5" stroke="#2fff00"/><path d="M1466 303h6.5" stroke="#38ff00"/><path d="M1472 303h6.5" stroke="#41ff00"/><path d="M1406 309h6.5" stroke="#00ff0d"/><path d="M1412 309h6.5" stroke="#00ff0c"/><path d="M1418 309h6.5" stroke="#01ff0a"/><path d="M1424 309h6.5" stroke="#06ff09"/><path d="M1430 309h6.5" stroke="#0dff07"/><path d="M1436 309h6.5" stroke="#14ff05"/><path d="M1442 309h6.5" stroke="#1bff04"/><path d="M1448 309h6.5" stroke="#23ff02"/><path d="M1454 309h6.5" stroke="#2bff01"/><path d="M1460 309h6.5" stroke="#34ff00"/><path d="M1466 309h6.5" stroke="#3dff00"/><path d="M1472 309h6.5" stroke="#46ff00"/><path d="M1478 309h6.5" stroke="#50ff00"/><path d="M1484 309h6.5" stroke="#59ff00"/><path d="M1406 315h6.5" stroke="#00ff11"/><path d="M1412 315h6.5" stroke="#00ff0f"/><path d="M1418 315h6.5" stroke="#03ff0e"/><path d="M1424 315h6.5" stroke="#09ff0c"/><path d="M1430 315h6.5" stroke="#10ff0a"/><path d="M1436 315h6.5" stroke="#17ff09"/><path d="M1442 315h6.5" stroke="#1fff07"/><path d="M1448 315h6.5" stroke="#27ff05"/><path d="M1454 315h6.5" stroke="#30ff04"/><path d="M1460 315h6.5" stroke="#39ff02"/><path d="M1466 315h6.5" stroke="#42ff01"/><path d="M1472 315h6.5" stroke="#4bff00"/><path d="M1478 315h6.5" stroke="#55ff00"/><path d="M1484 315h6.5" stroke="#5fff00"/><path d="M1490 315h6.5" stroke="#6aff00"/><path d="M1406 321h6.5" stroke="#00ff14"/><path d="M1412 321h6.5" stroke="#00ff13"/><path d="M1418 321h6.5" stroke="#05ff11"/><path d="M1424 321h6.5" stroke="#0cff0f"/><path d="M1430 321h6.5" stroke="#13ff0e"/><path d="M1436 321h6.5" stroke="#1bff0c"/><path d="M1442 321h6.5" stroke="#23ff0a"/><path d="M1448 321h6.5" stroke="#2bff09"/><path d="M1454 321h6.5" stroke="#34ff07"/><path d="M1460 321h6.5" stroke="#3dff05"/><path d="M1466 321h6.5" stroke="#47ff03"/><path d="M1472 321h6.5" stroke="#51ff02"/><path d="M1478 321h6.5" stroke="#5bff00"/><path d="M1484 321h6.5" stroke="#66ff00"/><path d="M1490 321h6.5" stroke="#71ff00"/><path d="M1496 321h6.5" stroke="#7cff00"/><path d="M1502 321h6.5" stroke="#88ff00"/><path d="M1400 327h6.5" stroke="#00ff1a"/><path d="M1406 327h6.5" stroke="#00ff18"/><path d="M1412 327h6.5" stroke="#02ff17"/><path d="M1418 327h6.5" stroke="#08ff15"/><path d="M1424 327h6.5" stroke="#0fff13"/><path d="M1430 327h6.5" stroke="#16ff11"/><path d="M1436 327h6.5" stroke="#1fff10"/><path d="M1442 327h6.5" stroke="#27ff0e"/><path d="M1448 327h6.5" stroke="#30ff0c"/><path d="M1454 327h6.5" stroke="#39ff0a"/><path d="M1460 327h6.5" stroke="#43ff08"/><path d="M1466 327h6.5" stroke="#4dff07"/><path d="M1472 327h6.5" stroke="#57ff05"/><path d="M1478 327h6.5" stroke="#62ff03"/><path d="M1484 327h6.5" stroke="#6dff02"/><path d="M1490 327h6.5" stroke="#78ff00"/><path d="M1496 327h6.5" stroke="#84ff00"/><path d="M1502 327h6.5" stroke="#90ff00"/><path d="M1508 327h6.5" stroke="#9dff00"/><path d="M1514 327h6.5" stroke="#aaff00"/><path d="M1400 333h6.5" stroke="#00ff1e"/><path d="M1406 333h6.5" stroke="#00ff1d"/><path d="M1412 333h6.5" stroke="#04ff1b"/><path d="M1418 333h6.5" stroke="#0bff19"/><path d="M1424 333h6.5" stroke="#12ff17"/><path d="M1430 333h6.5" stroke="#1aff16"/><path d="M1436 333h6.5" stroke="#23ff14"/><path d="M1442 333h6.5" stroke="#2bff12"/><path d="M1448 333h6.5" stroke="#35ff10"/><path d="M1454 333h6.5" stroke="#3eff0e"/><path d="M1460 333h6.5" stroke="#48ff0c"/><path d="M1466 333h6.5" stroke="#53ff0a"/><path d="M1472 333h6.5" stroke="#5dff08"/><path d="M1478 333h6.5" stroke="#69ff07"/><path d="M1484 333h6.5" stroke="#74ff05"/><path d="M1490 333h6.5" stroke="#80ff03"/><path d="M1496 333h6.5" stroke="#8cff01"/><path d="M1502 333h6.5" stroke="#99ff00"/><path d="M1508 333h6.5" stroke="#a6ff00"/><path d="M1514 333h6.5" stroke="#b4ff00"/><path d="M1520 333h6.5" stroke="#c2ff00"/><path d="M1526 333h6.5" stroke="#d0ff00"/><path d="M1394 339h6.5" stroke="#00ff25"/><path d="M1400 339h6.5" stroke="#00ff23"/><path d="M1406 339h6.5" stroke="#01ff21"/><path d="M1412 339h6.5" stroke="#07ff1f"/><path d="M1418 339h6.5" stroke="#0eff1e"/><path d="M1424 339h6.5" stroke="#16ff1c"/><path d="M1430 339h6.5" stroke="#1eff1a"/><path d="M1436 339h6.5" stroke="#27ff18"/><path d="M1442 339h6.5" stroke="#30ff16"/><path d="M1448 339h6.5" stroke="#3aff14"/><path d="M1454 339h6.5" stroke="#44ff12"/><path d="M1460 339h6.5" stroke="#4eff10"/><path d="M1466 339h6.5" stroke="#59ff0e"/><path d="M1472 339h6.5" stroke="#64ff0c"/><path d="M1478 339h6.5" stroke="#70ff0a"/><path d="M1484 339h6.5" stroke="#7cff08"/><path d="M1490 339h6.5" stroke="#88ff06"/><path d="M1496 339h6.5" stroke="#95ff04"/><path d="M1502 339h6.5" stroke="#a3ff03"/><path d="M1508 339h6.5" stroke="#b0ff01"/><path d="M1514 339h6.5" stroke="#beff00"/><path d="M1520 339h6.5" stroke="#cdff00"/><path d="M1526 339h6.5" stroke="#dcff00"/><path d="M1532 339h6.5" stroke="#ecff00"/><path d="M1538 339h6.5" stroke="#fcff00"/><path d="M1394 345h6.5" stroke="#00ff2a"/><path d="M1400 345h6.5" stroke="#00ff28"/><path d="M1406 345h6.5" stroke="#03ff26"/><path d="M1412 345h6.5" stroke="#0aff24"/><path d="M1418 345h6.5" stroke="#11ff22"/><path d="M1424 345h6.5" stroke="#19ff20"/><path d="M1430 345h6.5" stroke="#22ff1f"/><path d="M1436 345h6.5" stroke="#2bff1d"/><path d="M1442 345h6.5" stroke="#35ff1b"/><path d="M1448 345h6.5" stroke="#3fff19"/><path d="M1454 345h6.5" stroke="#4aff17"/><path d="M1460 345h6.5" stroke="#54ff15"/><path d="M1466 345h6.5" stroke="#60ff13"/><path d="M1472 345h6.5" stroke="#6bff11"/><path d="M1478 345h6.5" stroke="#78ff0f"/><path d="M1484 345h6.5" stroke="#84ff0c"/><path d="M1490 345h6.5" stroke="#91ff0a"/><path d="M1496 345h6.5" stroke="#9fff08"/><path d="M1502 345h6.5" stroke="#adff06"/><path d="M1508 345h6.5" stroke="#bbff04"/><path d="M1514 345h6.5" stroke="#caff02"/><path d="M1520 345h6.5" stroke="#d9ff00"/><path d="M1526 345h6.5" stroke="#e9ff00"/><path d="M1532 345h6.5" stroke="#f9ff00"/><path d="M1538 345h6.5" stroke="#fff400"/><path d="M1544 345h6.5" stroke="#ffe500"/><path d="M1394 351h6.5" stroke="#00ff2f"/><path d="M1400 351h6.5" stroke="#00ff2d"/><path d="M1406 351h6.5" stroke="#05ff2b"/><path d="M1412 351h6.5" stroke="#0dff29"/><path d="M1418 351h6.5" stroke="#15ff27"/><path d="M1424 351h6.5" stroke="#1dff26"/><path d="M1430 351h6.5" stroke="#27ff24"/><path d="M1436 351h6.5" stroke="#30ff22"/><path d="M1442 351h6.5" stroke="#3aff20"/><path d="M1448 351h6.5" stroke="#45ff1e"/><path d="M1454 351h6.5" stroke="#50ff1c"/><path d="M1460 351h6.5" stroke="#5bff1a"/><path d="M1466 351h6.5" stroke="#67ff17"/><path d="M1472 351h6.5" stroke="#73ff15"/><path d="M1478 351h6.5" stroke="#80ff13"/><path d="M1484 351h6.5" stroke="#8dff11"/><path d="M1490 351h6.5" stroke="#9bff0f"/><path d="M1496 351h6.5" stroke="#a9ff0d"/><path d="M1502 351h6.5" stroke="#b7ff0a"/><path d="M1508 351h6.5" stroke="#c6ff08"/><path d="M1514 351h6.5" stroke="#d6ff06"/><path d="M1520 351h6.5" stroke="#e6ff04"/><path d="M1526 351h6.5" stroke="#f6ff02"/><path d="M1532 351h6.5" stroke="#fff700"/><path d="M1538 351h6.5" stroke="#ffe700"/><path d="M1544 351h6.5" stroke="#ffd900"/><path d="M1550 351h6.5" stroke="#ffcc00"/><path d="M1556 351h6.5" stroke="#ffc000"/><path d="M1388 357h6.5" stroke="#00ff36"/><path d="M1394 357h6.5" stroke="#00ff34"/><path d="M1400 357h6.5" stroke="#02ff32"/><path d="M1406 357h6.5" stroke="#08ff31"/><path d="M1412 357h6.5" stroke="#10ff2f"/><path d="M1418 357h6.5" stroke="#19ff2d"/><path d="M1424 357h6.5" stroke="#22ff2b"/><path d="M1430 357h6.5" stroke="#2bff29"/><path d="M1436 357h6.5" stroke="#35ff27"/><path d="M1442 357h6.5" stroke="#40ff25"/><path d="M1448 357h6.5" stroke="#4bff23"/><path d="M1454 357h6.5" stroke="#56ff21"/><path d="M1460 357h6.5" stroke="#62ff1f"/><path d="M1466 357h6.5" stroke="#6fff1d"/><path d="M1472 357h6.5" stroke="#7bff1a"/><path d="M1478 357h6.5" stroke="#89ff18"/><path d="M1484 357h6.5" stroke="#96ff16"/><path d="M1490 357h6.5" stroke="#a5ff14"/><path d="M1496 357h6.5" stroke="#b3ff11"/><path d="M1502 357h6.5" stroke="#c3ff0f"/><path d="M1508 357h6.5" stroke="#d2ff0d"/><path d="M1514 357h6.5" stroke="#e3ff0b"/><path d="M1520 357h6.5" stroke="#f4ff08"/><path d="M1526 357h6.5" stroke="#fff906"/><path d="M1532 357h6.5" stroke="#ffe903"/><path d="M1538 357h6.5" stroke="#ffda01"/><path d="M1544 357h6.5" stroke="#ffcd00"/><path d="M1550 357h6.5" stroke="#ffc100"/><path d="M1556 357h6.5" stroke="#ffb600"/><path d="M1562 357h6.5" stroke="#ffab00"/><path d="M1568 357h6.5" stroke="#ffa200"/><path d="M1388 363h6.5" stroke="#00ff3c"/><path d="M1394 363h6.5" stroke="#00ff3a"/><path d="M1400 363h6.5" stroke="#04ff38"/><path d="M1406 363h6.5" stroke="#0cff37"/><path d="M1412 363h6.5" stroke="#14ff35"/><path d="M1418 363h6.5" stroke="#1dff33"/><path d="M1424 363h6.5" stroke="#26ff31"/><path d="M1430 363h6.5" stroke="#30ff2f"/><path d="M1436 363h6.5" stroke="#3bff2d"/><path d="M1442 363h6.5" stroke="#46ff2b"/><path d="M1448 363h6.5" stroke="#52ff29"/><path d="M1454 363h6.5" stroke="#5dff27"/><path d="M1460 363h6.5" stroke="#6aff24"/><path d="M1466 363h6.5" stroke="#77ff22"/><path d="M1472 363h6.5" stroke="#84ff20"/><path d="M1478 363h6.5" stroke="#92ff1e"/><path d="M1484 363h6.5" stroke="#a0ff1b"/><path d="M1490 363h6.5" stroke="#afff19"/><path d="M1496 363h6.5" stroke="#bfff17"/><path d="M1502 363h6.5" stroke="#cfff14"/><path d="M1508 363h6.5" stroke="#dfff12"/><path d="M1514 363h6.5" stroke="#f1ff0f"/><path d="M1520 363h6.5" stroke="#fffc0d"/><path d="M1526 363h6.5" stroke="#ffeb0a"/><path d="M1532 363h6.5" stroke="#ffdc07"/><path d="M1538 363h6.5" stroke="#ffce05"/><path d="M1544 363h6.5" stroke="#ffc203"/><path d="M1550 363h6.5" stroke="#ffb601"/><path d="M1556 363h6.5" stroke="#ffac00"/><path d="M1562 363h6.5" stroke="#ffa200"/><path d="M1568 363h6.5" stroke="#ff9900"/><path d="M1574 363h6.5" stroke="#ff9100"/><path d="M1382 369h6.5" stroke="#00ff44"/><path d="M1388 369h6.5" stroke="#00ff42"/><path d="M1394 369h6.5" stroke="#00ff40"/><path d="M1400 369h6.5" stroke="#07ff3f"/><path d="M1406 369h6.5" stroke="#0fff3d"/><path d="M1412 369h6.5" stroke="#18ff3b"/><path d="M1418 369h6.5" stroke="#21ff39"/><path d="M1424 369h6.5" stroke="#2bff37"/><path d="M1430 369h6.5" stroke="#36ff35"/><path d="M1436 369h6.5" stroke="#41ff33"/><path d="M1442 369h6.5" stroke="#4dff31"/><path d="M1448 369h6.5" stroke="#59ff2f"/><path d="M1454 369h6.5" stroke="#65ff2d"/><path d="M1460 369h6.5" stroke="#72ff2a"/><path d="M1466 369h6.5" stroke="#80ff28"/><path d="M1472 369h6.5" stroke="#8eff26"/><path d="M1478 369h6.5" stroke="#9cff24"/><path d="M1484 369h6.5" stroke="#abff21"/><path d="M1490 369h6.5" stroke="#bbff1f"/><path d="M1496 369h6.5" stroke="#cbff1d"/><path d="M1502 369h6.5" stroke="#dcff1a"/><path d="M1508 369h6.5" stroke="#edff18"/><path d="M1514 369h6.5" stroke="#ffff15"/><path d="M1520 369h6.5" stroke="#ffed11"/><path d="M1526 369h6.5" stroke="#ffde0e"/><path d="M1532 369h6.5" stroke="#ffcf0b"/><path d="M1538 369h6.5" stroke="#ffc208"/><path d="M1544 369h6.5" stroke="#ffb706"/><path d="M1550 369h6.5" stroke="#ffac04"/><path d="M1556 369h6.5" stroke="#ffa202"/><path d="M1562 369h6.5" stroke="#ff9900"/><path d="M1568 369h6.5" stroke="#ff9000"/><path d="M1574 369h6.5" stroke="#ff8800"/><path d="M1580 369h6.5" stroke="#ff8100"/><path d="M1586 369h6.5" stroke="#ff7a00"/><path d="M1382 375h6.5" stroke="#00ff4b"/><path d="M1388 375h6.5" stroke="#00ff49"/><path d="M1394 375h6.5" stroke="#03ff47"/><path d="M1400 375h6.5" stroke="#0aff45"/><path d="M1406 375h6.5" stroke="#13ff43"/><path d="M1412 375h6.5" stroke="#1cff42"/><path d="M1418 375h6.5" stroke="#26ff40"/><path d="M1424 375h6.5" stroke="#31ff3e"/><path d="M1430 375h6.5" stroke="#3cff3c"/><path d="M1436 375h6.5" stroke="#47ff3a"/><path d="M1442 375h6.5" stroke="#53ff38"/><path d="M1448 375h6.5" stroke="#60ff35"/><path d="M1454 375h6.5" stroke="#6dff33"/><path d="M1460 375h6.5" stroke="#7bff31"/><path d="M1466 375h6.5" stroke="#89ff2f"/><path d="M1472 375h6.5" stroke="#98ff2d"/><path d="M1478 375h6.5" stroke="#a7ff2a"/><path d="M1484 375h6.5" stroke="#b7ff28"/><path d="M1490 375h6.5" stroke="#c7ff25"/><path d="M1496 375h6.5" stroke="#d8ff23"/><path d="M1502 375h6.5" stroke="#eaff20"/><path d="M1508 375h6.5" stroke="#fcff1e"/><path d="M1514 375h6.5" stroke="#fff01a"/><path d="M1520 375h6.5" stroke="#ffdf15"/><path d="M1526 375h6.5" stroke="#ffd112"/><path d="M1532 375h6.5" stroke="#ffc30f"/><path d="M1538 375h6.5" stroke="#ffb70c"/><path d="M1544 375h6.5" stroke="#ffac09"/><path d="M1550 375h6.5" stroke="#ffa207"/><path d="M1556 375h6.5" stroke="#ff9905"/><path d="M1562 375h6.5" stroke="#ff9003"/><path d="M1568 375h6.5" stroke="#ff8801"/><path d="M1574 375h6.5" stroke="#ff8000"/><path d="M1580 375h6.5" stroke="#ff7a00"/><path d="M1586 375h6.5" stroke="#ff7300"/><path d="M1592 375h6.5" stroke="#ff6d00"/><path d="M1598 375h6.5" stroke="#ff6700"/><path d="M1382 381h6.5" stroke="#00ff52"/><path d="M1388 381h6.5" stroke="#00ff50"/><path d="M1394 381h6.5" stroke="#06ff4e"/><path d="M1400 381h6.5" stroke="#0eff4d"/><path d="M1406 381h6.5" stroke="#17ff4b"/><path d="M1412 381h6.5" stroke="#21ff49"/><path d="M1418 381h6.5" stroke="#2bff47"/><path d="M1424 381h6.5" stroke="#36ff45"/><path d="M1430 381h6.5" stroke="#42ff43"/><path d="M1436 381h6.5" stroke="#4eff41"/><path d="M1442 381h6.5" stroke="#5bff3f"/><path d="M1448 381h6.5" stroke="#68ff3d"/><path d="M1454 381h6.5" stroke="#76ff3a"/><path d="M1460 381h6.5" stroke="#84ff38"/><path d="M1466 381h6.5" stroke="#93ff36"/><path d="M1472 381h6.5" stroke="#a3ff34"/><path d="M1478 381h6.5" stroke="#b3ff31"/><path d="M1484 381h6.5" stroke="#c3ff2f"/><path d="M1490 381h6.5" stroke="#d5ff2c"/><path d="M1496 381h6.5" stroke="#e7ff2a"/><path d="M1502 381h6.5" stroke="#f9ff27"/><path d="M1508 381h6.5" stroke="#fff223"/><path d="M1514 381h6.5" stroke="#ffe11e"/><path d="M1520 381h6.5" stroke="#ffd21a"/><path d="M1526 381h6.5" stroke="#ffc416"/><path d="M1532 381h6.5" stroke="#ffb812"/><path d="M1538 381h6.5" stroke="#ffac0f"/><path d="M1544 381h6.5" stroke="#ffa20d"/><path d="M1550 381h6.5" stroke="#ff980a"/><path d="M1556 381h6.5" stroke="#ff9008"/><path d="M1562 381h6.5" stroke="#ff8706"/><path d="M1568 381h6.5" stroke="#ff8004"/><path d="M1574 381h6.5" stroke="#ff7902"/><path d="M1580 381h6.5" stroke="#ff7201"/><path d="M1586 381h6.5" stroke="#ff6c00"/><path d="M1592 381h6.5" stroke="#ff6600"/><path d="M1598 381h6.5" stroke="#ff6100"/><path d="M1604 381h6.5" stroke="#ff5c00"/><path d="M1376 387h6.5" stroke="#00ff5b"/><path d="M1382 387h6.5" stroke="#00ff59"/><path d="M1388 387h6.5" stroke="#01ff58"/><path d="M1394 387h6.5" stroke="#09ff56"/><path d="M1400 387h6.5" stroke="#12ff54"/><path d="M1406 387h6.5" stroke="#1cff52"/><path d="M1412 387h6.5" stroke="#26ff50"/><path d="M1418 387h6.5" stroke="#31ff4f"/><path d="M1424 387h6.5" stroke="#3dff4d"/><path d="M1430 387h6.5" stroke="#49ff4b"/><path d="M1436 387h6.5" stroke="#56ff49"/><path d="M1442 387h6.5" stroke="#63ff46"/><path d="M1448 387h6.5" stroke="#71ff44"/><path d="M1454 387h6.5" stroke="#7fff42"/><path d="M1460 387h6.5" stroke="#8eff40"/><path d="M1466 387h6.5" stroke="#9eff3e"/><path d="M1472 387h6.5" stroke="#aeff3b"/><path d="M1478 387h6.5" stroke="#bfff39"/><path d="M1484 387h6.5" stroke="#d1ff36"/><path d="M1490 387h6.5" stroke="#e3ff34"/><path d="M1496 387h6.5" stroke="#f6ff31"/><path d="M1502 387h6.5" stroke="#fff52d"/><path d="M1508 387h6.5" stroke="#ffe327"/><path d="M1514 387h6.5" stroke="#ffd322"/><path d="M1520 387h6.5" stroke="#ffc51e"/><path d="M1526 387h6.5" stroke="#ffb81a"/><path d="M1532 387h6.5" stroke="#ffad16"/><path d="M1538 387h6.5" stroke="#ffa213"/><path d="M1544 387h6.5" stroke="#ff9810"/><path d="M1550 387h6.5" stroke="#ff8f0d"/><path d="M1556 387h6.5" stroke="#ff870b"/><path d="M1562 387h6.5" stroke="#ff7f09"/><path d="M1568 387h6.5" stroke="#ff7807"/><path d="M1574 387h6.5" stroke="#ff7105"/><path d="M1580 387h6.5" stroke="#ff6b03"/><path d="M1586 387h6.5" stroke="#ff6502"/><path d="M1592 387h6.5" stroke="#ff6001"/><path d="M1598 387h6.5" stroke="#ff5b00"/><path d="M1604 387h6.5" stroke="#ff5600"/><path d="M1610 387h6.5" stroke="#ff5200"/><path d="M1616 387h6.5" stroke="#ff4e00"/><path d="M1376 393h6.5" stroke="#00ff63"/><path d="M1382 393h6.5" stroke="#00ff62"/><path d="M1388 393h6.5" stroke="#04ff60"/><path d="M1394 393h6.5" stroke="#0dff5e"/><path d="M1400 393h6.5" stroke="#16ff5c"/><path d="M1406 393h6.5" stroke="#20ff5b"/><path d="M1412 393h6.5" stroke="#2bff59"/><path d="M1418 393h6.5" stroke="#37ff57"/><path d="M1424 393h6.5" stroke="#43ff55"/><path d="M1430 393h6.5" stroke="#50ff53"/><path d="M1436 393h6.5" stroke="#5eff51"/><path d="M1442 393h6.5" stroke="#6cff4f"/><path d="M1448 393h6.5" stroke="#7aff4d"/><path d="M1454 393h6.5" stroke="#89ff4b"/><path d="M1460 393h6.5" stroke="#99ff48"/><path d="M1466 393h6.5" stroke="#aaff46"/><path d="M1472 393h6.5" stroke="#bbff44"/><path d="M1478 393h6.5" stroke="#cdff41"/><path d="M1484 393h6.5" stroke="#dfff3f"/><path d="M1490 393h6.5" stroke="#f3ff3c"/><path d="M1496 393h6.5" stroke="#fff738"/><path d="M1502 393h6.5" stroke="#ffe532"/><path d="M1508 393h6.5" stroke="#ffd52c"/><path d="M1514 393h6.5" stroke="#ffc627"/><path d="M1520 393h6.5" stroke="#ffb922"/><path d="M1526 393h6.5" stroke="#ffad1e"/><path d="M1532 393h6.5" stroke="#ffa21a"/><path d="M1538 393h6.5" stroke="#ff9817"/><path d="M1544 393h6.5" stroke="#ff8f13"/><path d="M1550 393h6.5" stroke="#ff8611"/><path d="M1556 393h6.5" stroke="#ff7e0e"/><path d="M1562 393h6.5" stroke="#ff770c"/><path d="M1568 393h6.5" stroke="#ff700a"/><path d="M1574 393h6.5" stroke="#ff6a08"/><path d="M1580 393h6.5" stroke="#ff6406"/><path d="M1586 393h6.5" stroke="#ff5f04"/><path d="M1592 393h6.5" stroke="#ff5a03"/><path d="M1598 393h6.5" stroke="#ff5501"/><path d="M1604 393h6.5" stroke="#ff5000"/><path d="M1610 393h6.5" stroke="#ff4c00"/><path d="M1616 393h6.5" stroke="#ff4800"/><path d="M1622 393h6.5" stroke="#ff4400"/><path d="M1628 393h6.5" stroke="#ff4100"/><path d="M1376 399h6.5" stroke="#00ff6c"/><path d="M1382 399h6.5" stroke="#00ff6a"/><path d="M1388 399h6.5" stroke="#08ff69"/><path d="M1394 399h6.5" stroke="#11ff67"/><path d="M1400 399h6.5" stroke="#1bff65"/><path d="M1406 399h6.5" stroke="#26ff64"/><path d="M1412 399h6.5" stroke="#31ff62"/><path d="M1418 399h6.5" stroke="#3eff60"/><path d="M1424 399h6.5" stroke="#4aff5e"/><path d="M1430 399h6.5" stroke="#58ff5c"/><path d="M1436 399h6.5" stroke="#66ff5a"/><path d="M1442 399h6.5" stroke="#75ff58"/><path d="M1448 399h6.5" stroke="#84ff56"/><path d="M1454 399h6.5" stroke="#94ff54"/><path d="M1460 399h6.5" stroke="#a5ff51"/><path d="M1466 399h6.5" stroke="#b6ff4f"/><path d="M1472 399h6.5" stroke="#c9ff4d"/><path d="M1478 399h6.5" stroke="#dcff4a"/><path d="M1484 399h6.5" stroke="#efff48"/><path d="M1490 399h6.5" stroke="#fffa44"/><path d="M1496 399h6.5" stroke="#ffe73d"/><path d="M1502 399h6.5" stroke="#ffd636"/><path d="M1508 399h6.5" stroke="#ffc730"/><path d="M1514 399h6.5" stroke="#ffba2b"/><path d="M1520 399h6.5" stroke="#ffad26"/><path d="M1526 399h6.5" stroke="#ffa222"/><path d="M1532 399h6.5" stroke="#ff981e"/><path d="M1538 399h6.5" stroke="#ff8e1a"/><path d="M1544 399h6.5" stroke="#ff8617"/><path d="M1550 399h6.5" stroke="#ff7e14"/><path d="M1556 399h6.5" stroke="#ff7611"/><path d="M1562 399h6.5" stroke="#ff6f0f"/><path d="M1568 399h6.5" stroke="#ff690c"/><path d="M1574 399h6.5" stroke="#ff630a"/><path d="M1580 399h6.5" stroke="#ff5e08"/><path d="M1586 399h6.5" stroke="#ff5807"/><path d="M1592 399h6.5" stroke="#ff5405"/><path d="M1598 399h6.5" stroke="#ff4f03"/><path d="M1604 399h6.5" stroke="#ff4b02"/><path d="M1610 399h6.5" stroke="#ff4701"/><path d="M1616 399h6.5" stroke="#ff4300"/><path d="M1622 399h6.5" stroke="#ff4000"/><path d="M1628 399h6.5" stroke="#ff3c00"/><path d="M1634 399h6.5" stroke="#ff3900"/><path d="M1370 405h6.5" stroke="#00ff77"/><path d="M1376 405h6.5" stroke="#00ff75"/><path d="M1382 405h6.5" stroke="#03ff74"/><path d="M1388 405h6.5" stroke="#0bff72"/><path d="M1394 405h6.5" stroke="#15ff71"/><path d="M1400 405h6.5" stroke="#20ff6f"/><path d="M1406 405h6.5" stroke="#2bff6d"/><path d="M1412 405h6.5" stroke="#38ff6b"/><path d="M1418 405h6.5" stroke="#45ff6a"/><path d="M1424 405h6.5" stroke="#52ff68"/><path d="M1430 405h6.5" stroke="#60ff66"/><path d="M1436 405h6.5" stroke="#6fff64"/><path d="M1442 405h6.5" stroke="#7fff62"/><path d="M1448 405h6.5" stroke="#8fff60"/><path d="M1454 405h6.5" stroke="#a0ff5e"/><path d="M1460 405h6.5" stroke="#b2ff5b"/><path d="M1466 405h6.5" stroke="#c4ff59"/><path d="M1472 405h6.5" stroke="#d7ff57"/><path d="M1478 405h6.5" stroke="#ecff55"/><path d="M1484 405h6.5" stroke="#fffe52"/><path d="M1490 405h6.5" stroke="#ffea49"/><path d="M1496 405h6.5" stroke="#ffd841"/><path d="M1502 405h6.5" stroke="#ffc83a"/><path d="M1508 405h6.5" stroke="#ffba34"/><path d="M1514 405h6.5" stroke="#ffae2f"/><path d="M1520 405h6.5" stroke="#ffa22a"/><path d="M1526 405h6.5" stroke="#ff9725"/><path d="M1532 405h6.5" stroke="#ff8e21"/><path d="M1538 405h6.5" stroke="#ff851e"/><path d="M1544 405h6.5" stroke="#ff7d1a"/><path d="M1550 405h6.5" stroke="#ff7517"/><path d="M1556 405h6.5" stroke="#ff6e14"/><path d="M1562 405h6.5" stroke="#ff6812"/><path d="M1568 405h6.5" stroke="#ff620f"/><path d="M1574 405h6.5" stroke="#ff5c0d"/><path d="M1580 405h6.5" stroke="#ff570b"/><path d="M1586 405h6.5" stroke="#ff5209"/><path d="M1592 405h6.5" stroke="#ff4e07"/><path d="M1598 405h6.5" stroke="#ff4906"/><path d="M1604 405h6.5" stroke="#ff4504"/><path d="M1610 405h6.5" stroke="#ff4203"/><path d="M1616 405h6.5" stroke="#ff3e02"/><path d="M1622 405h6.5" stroke="#ff3b01"/><path d="M1628 405h6.5" stroke="#ff3800"/><path d="M1634 405h6.5" stroke="#ff3400"/><path d="M1640 405h6.5" stroke="#ff3200"/><path d="M1646 405h6.5" stroke="#ff2f00"/><path d="M1370 411h6.5" stroke="#00ff81"/><path d="M1376 411h6.5" stroke="#00ff7f"/><path d="M1382 411h6.5" stroke="#06ff7e"/><path d="M1388 411h6.5" stroke="#0fff7c"/><path d="M1394 411h6.5" stroke="#1aff7b"/><path d="M1400 411h6.5" stroke="#25ff79"/><path d="M1406 411h6.5" stroke="#32ff77"/><path d="M1412 411h6.5" stroke="#3fff76"/><path d="M1418 411h6.5" stroke="#4cff74"/><path d="M1424 411h6.5" stroke="#5bff72"/><path d="M1430 411h6.5" stroke="#6aff70"/><path d="M1436 411h6.5" stroke="#79ff6e"/><path d="M1442 411h6.5" stroke="#8aff6c"/><path d="M1448 411h6.5" stroke="#9bff6a"/><path d="M1454 411h6.5" stroke="#adff68"/><path d="M1460 411h6.5" stroke="#c0ff66"/><path d="M1466 411h6.5" stroke="#d3ff64"/><path d="M1472 411h6.5" stroke="#e8ff62"/><path d="M1478 411h6.5" stroke="#fdff60"/><path d="M1484 411h6.5" stroke="#ffec56"/><path d="M1490 411h6.5" stroke="#ffda4e"/><path d="M1496 411h6.5" stroke="#ffca46"/><path d="M1502 411h6.5" stroke="#ffbb3f"/><path d="M1508 411h6.5" stroke="#ffae38"/><path d="M1514 411h6.5" stroke="#ffa233"/><path d="M1520 411h6.5" stroke="#ff972e"/><path d="M1526 411h6.5" stroke="#ff8d29"/><path d="M1532 411h6.5" stroke="#ff8425"/><path d="M1538 411h6.5" stroke="#ff7c21"/><path d="M1544 411h6.5" stroke="#ff741e"/><path d="M1550 411h6.5" stroke="#ff6d1a"/><path d="M1556 411h6.5" stroke="#ff6717"/><path d="M1562 411h6.5" stroke="#ff6115"/><path d="M1568 411h6.5" stroke="#ff5b12"/><path d="M1574 411h6.5" stroke="#ff5610"/><path d="M1580 411h6.5" stroke="#ff510e"/><path d="M1586 411h6.5" stroke="#ff4c0c"/><path d="M1592 411h6.5" stroke="#ff480a"/><path d="M1598 411h6.5" stroke="#ff4408"/><path d="M1604 411h6.5" stroke="#ff4006"/><path d="M1610 411h6.5" stroke="#ff3d05"/><path d="M1616 411h6.5" stroke="#ff3904"/><path d="M1622 411h6.5" stroke="#ff3602"/><path d="M1628 411h6.5" stroke="#ff3301"/><path d="M1634 411h6.5" stroke="#ff3000"/><path d="M1640 411h6.5" stroke="#ff2d00"/><path d="M1646 411h6.5" stroke="#ff2b00"/><path d="M1652 411h6.5" stroke="#ff2800"/><path d="M1658 411h6.5" stroke="#ff2600"/><path d="M1364 417h6.5" stroke="#00ff8d"/><path d="M1370 417h6.5" stroke="#00ff8c"/><path d="M1376 417h6.5" stroke="#01ff8a"/><path d="M1382 417h6.5" stroke="#0aff89"/><path d="M1388 417h6.5" stroke="#14ff87"/><path d="M1394 417h6.5" stroke="#1fff86"/><path d="M1400 417h6.5" stroke="#2cff84"/><path d="M1406 417h6.5" stroke="#38ff83"/><path d="M1412 417h6.5" stroke="#46ff81"/><path d="M1418 417h6.5" stroke="#55ff7f"/><path d="M1424 417h6.5" stroke="#64ff7e"/><path d="M1430 417h6.5" stroke="#74ff7c"/><path d="M1436 417h6.5" stroke="#84ff7a"/><path d="M1442 417h6.5" stroke="#96ff78"/><path d="M1448 417h6.5" stroke="#a8ff76"/><path d="M1454 417h6.5" stroke="#bbff74"/><path d="M1460 417h6.5" stroke="#cfff72"/><path d="M1466 417h6.5" stroke="#e4ff70"/><path d="M1472 417h6.5" stroke="#f9ff6e"/><path d="M1478 417h6.5" stroke="#ffef65"/><path d="M1484 417h6.5" stroke="#ffdc5b"/><path d="M1490 417h6.5" stroke="#ffcb52"/><path d="M1496 417h6.5" stroke="#ffbc4a"/><path d="M1502 417h6.5" stroke="#ffae43"/><path d="M1508 417h6.5" stroke="#ffa23c"/><path d="M1514 417h6.5" stroke="#ff9737"/><path d="M1520 417h6.5" stroke="#ff8d32"/><path d="M1526 417h6.5" stroke="#ff842d"/><path d="M1532 417h6.5" stroke="#ff7b28"/><path d="M1538 417h6.5" stroke="#ff7325"/><path d="M1544 417h6.5" stroke="#ff6c21"/><path d="M1550 417h6.5" stroke="#ff661e"/><path d="M1556 417h6.5" stroke="#ff5f1a"/><path d="M1562 417h6.5" stroke="#ff5a18"/><path d="M1568 417h6.5" stroke="#ff5415"/><path d="M1574 417h6.5" stroke="#ff4f13"/><path d="M1580 417h6.5" stroke="#ff4b10"/><path d="M1586 417h6.5" stroke="#ff470e"/><path d="M1592 417h6.5" stroke="#ff420c"/><path d="M1598 417h6.5" stroke="#ff3f0a"/><path d="M1604 417h6.5" stroke="#ff3b09"/><path d="M1610 417h6.5" stroke="#ff3807"/><path d="M1616 417h6.5" stroke="#ff3506"/><path d="M1622 417h6.5" stroke="#ff3104"/><path d="M1628 417h6.5" stroke="#ff2f03"/><path d="M1634 417h6.5" stroke="#ff2c02"/><path d="M1640 417h6.5" stroke="#ff2901"/><path d="M1646 417h6.5" stroke="#ff2700"/><path d="M1652 417h6.5" stroke="#ff2500"/><path d="M1658 417h6.5" stroke="#ff2200"/><path d="M1664 417h6.5" stroke="#ff2000"/><path d="M1670 417h6.5" stroke="#ff1e00"/><path d="M1364 423h6.5" stroke="#00ff98"/><path d="M1370 423h6.5" stroke="#00ff97"/><path d="M1376 423h6.5" stroke="#04ff96"/><path d="M1382 423h6.5" stroke="#0eff95"/><path d="M1388 423h6.5" stroke="#19ff93"/><path d="M1394 423h6.5" stroke="#25ff92"/><path d="M1400 423h6.5" stroke="#32ff90"/><path d="M1406 423h6.5" stroke="#40ff8f"/><path d="M1412 423h6.5" stroke="#4eff8d"/><path d="M1418 423h6.5" stroke="#5eff8c"/><path d="M1424 423h6.5" stroke="#6eff8a"/><path d="M1430 423h6.5" stroke="#7eff88"/><path d="M1436 423h6.5" stroke="#90ff87"/><path d="M1442 423h6.5" stroke="#a3ff85"/><path d="M1448 423h6.5" stroke="#b6ff83"/><path d="M1454 423h6.5" stroke="#caff81"/><path d="M1460 423h6.5" stroke="#dfff7f"/><path d="M1466 423h6.5" stroke="#f6ff7d"/><path d="M1472 423h6.5" stroke="#fff275"/><path d="M1478 423h6.5" stroke="#ffde69"/><path d="M1484 423h6.5" stroke="#ffcc5f"/><path d="M1490 423h6.5" stroke="#ffbd56"/><path d="M1496 423h6.5" stroke="#ffaf4e"/><path d="M1502 423h6.5" stroke="#ffa247"/><path d="M1508 423h6.5" stroke="#ff9740"/><path d="M1514 423h6.5" stroke="#ff8c3b"/><path d="M1520 423h6.5" stroke="#ff8335"/><path d="M1526 423h6.5" stroke="#ff7a30"/><path d="M1532 423h6.5" stroke="#ff722c"/><path d="M1538 423h6.5" stroke="#ff6b28"/><path d="M1544 423h6.5" stroke="#ff6424"/><path d="M1550 423h6.5" stroke="#ff5e21"/><path d="M1556 423h6.5" stroke="#ff581d"/><path d="M1562 423h6.5" stroke="#ff531b"/><path d="M1568 423h6.5" stroke="#ff4e18"/><path d="M1574 423h6.5" stroke="#ff4915"/><path d="M1580 423h6.5" stroke="#ff4513"/><path d="M1586 423h6.5" stroke="#ff4111"/><path d="M1592 423h6.5" stroke="#ff3d0f"/><path d="M1598 423h6.5" stroke="#ff3a0d"/><path d="M1604 423h6.5" stroke="#ff360b"/><path d="M1610 423h6.5" stroke="#ff3309"/><path d="M1616 423h6.5" stroke="#ff3008"/><path d="M1622 423h6.5" stroke="#ff2d06"/><path d="M1628 423h6.5" stroke="#ff2a05"/><path d="M1634 423h6.5" stroke="#ff2804"/><path d="M1640 423h6.5" stroke="#ff2503"/><path d="M1646 423h6.5" stroke="#ff2302"/><path d="M1652 423h6.5" stroke="#ff2101"/><path d="M1658 423h6.5" stroke="#ff1f00"/><path d="M1664 423h6.5" stroke="#ff1d00"/><path d="M1670 423h6.5" stroke="#ff1b00"/><path d="M1676 423h6.5" stroke="#ff1900"/><path d="M1364 429h6.5" stroke="#00ffa5"/><path d="M1370 429h6.5" stroke="#00ffa4"/><path d="M1376 429h6.5" stroke="#08ffa2"/><path d="M1382 429h6.5" stroke="#13ffa1"/><path d="M1388 429h6.5" stroke="#1fffa0"/><path d="M1394 429h6.5" stroke="#2cff9f"/><path d="M1400 429h6.5" stroke="#39ff9d"/><path d="M1406 429h6.5" stroke="#48ff9c"/><path d="M1412 429h6.5" stroke="#57ff9b"/><path d="M1418 429h6.5" stroke="#67ff99"/><path d="M1424 429h6.5" stroke="#78ff98"/><path d="M1430 429h6.5" stroke="#8aff96"/><path d="M1436 429h6.5" stroke="#9dff94"/><path d="M1442 429h6.5" stroke="#b1ff93"/><path d="M1448 429h6.5" stroke="#c5ff91"/><path d="M1454 429h6.5" stroke="#dbff8f"/><path d="M1460 429h6.5" stroke="#f2ff8e"/><path d="M1466 429h6.5" stroke="#fff586"/><path d="M1472 429h6.5" stroke="#ffe079"/><path d="M1478 429h6.5" stroke="#ffce6e"/><path d="M1484 429h6.5" stroke="#ffbd63"/><path d="M1490 429h6.5" stroke="#ffaf5a"/><path d="M1496 429h6.5" stroke="#ffa252"/><path d="M1502 429h6.5" stroke="#ff964b"/><path d="M1508 429h6.5" stroke="#ff8c44"/><path d="M1514 429h6.5" stroke="#ff823e"/><path d="M1520 429h6.5" stroke="#ff7939"/><path d="M1526 429h6.5" stroke="#ff7134"/><path d="M1532 429h6.5" stroke="#ff6a2f"/><path d="M1538 429h6.5" stroke="#ff632b"/><path d="M1544 429h6.5" stroke="#ff5d27"/><path d="M1550 429h6.5" stroke="#ff5724"/><path d="M1556 429h6.5" stroke="#ff5120"/><path d="M1562 429h6.5" stroke="#ff4c1d"/><path d="M1568 429h6.5" stroke="#ff481b"/><path d="M1574 429h6.5" stroke="#ff4318"/><path d="M1580 429h6.5" stroke="#ff3f16"/><path d="M1586 429h6.5" stroke="#ff3c13"/><path d="M1592 429h6.5" stroke="#ff3811"/><path d="M1598 429h6.5" stroke="#ff350f"/><path d="M1604 429h6.5" stroke="#ff310d"/><path d="M1610 429h6.5" stroke="#ff2e0c"/><path d="M1616 429h6.5" stroke="#ff2b0a"/><path d="M1622 429h6.5" stroke="#ff2908"/><path d="M1628 429h6.5" stroke="#ff2607"/><path d="M1634 429h6.5" stroke="#ff2406"/><path d="M1640 429h6.5" stroke="#ff2205"/><path d="M1646 429h6.5" stroke="#ff1f03"/><path d="M1652 429h6.5" stroke="#ff1d02"/><path d="M1658 429h6.5" stroke="#ff1b01"/><path d="M1664 429h6.5" stroke="#ff1a01"/><path d="M1670 429h6.5" stroke="#ff1800"/><path d="M1676 429h6.5" stroke="#ff1600"/><path d="M1682 429h6.5" stroke="#ff1500"/><path d="M1688 429h6.5" stroke="#ff1300"/><path d="M1358 435h6.5" stroke="#00ffb3"/><path d="M1364 435h6.5" stroke="#00ffb2"/><path d="M1370 435h6.5" stroke="#02ffb1"/><path d="M1376 435h6.5" stroke="#0cffb0"/><path d="M1382 435h6.5" stroke="#18ffaf"/><path d="M1388 435h6.5" stroke="#25ffae"/><path d="M1394 435h6.5" stroke="#33ffad"/><path d="M1400 435h6.5" stroke="#41ffac"/><path d="M1406 435h6.5" stroke="#51ffaa"/><path d="M1412 435h6.5" stroke="#61ffa9"/><path d="M1418 435h6.5" stroke="#72ffa8"/><path d="M1424 435h6.5" stroke="#84ffa6"/><path d="M1430 435h6.5" stroke="#97ffa5"/><path d="M1436 435h6.5" stroke="#abffa4"/><path d="M1442 435h6.5" stroke="#c0ffa2"/><path d="M1448 435h6.5" stroke="#d6ffa1"/><path d="M1454 435h6.5" stroke="#edff9f"/><path d="M1460 435h6.5" stroke="#fff999"/><path d="M1466 435h6.5" stroke="#ffe38a"/><path d="M1472 435h6.5" stroke="#ffcf7d"/><path d="M1478 435h6.5" stroke="#ffbe72"/><path d="M1484 435h6.5" stroke="#ffaf67"/><path d="M1490 435h6.5" stroke="#ffa25e"/><path d="M1496 435h6.5" stroke="#ff9656"/><path d="M1502 435h6.5" stroke="#ff8b4f"/><path d="M1508 435h6.5" stroke="#ff8148"/><path d="M1514 435h6.5" stroke="#ff7842"/><path d="M1520 435h6.5" stroke="#ff703c"/><path d="M1526 435h6.5" stroke="#ff6937"/><path d="M1532 435h6.5" stroke="#ff6233"/><path d="M1538 435h6.5" stroke="#ff5b2e"/><path d="M1544 435h6.5" stroke="#ff552a"/><path d="M1550 435h6.5" stroke="#ff5027"/><path d="M1556 435h6.5" stroke="#ff4b23"/><path d="M1562 435h6.5" stroke="#ff4620"/><path d="M1568 435h6.5" stroke="#ff421d"/><path d="M1574 435h6.5" stroke="#ff3e1b"/><path d="M1580 435h6.5" stroke="#ff3a18"/><path d="M1586 435h6.5" stroke="#ff3616"/><path d="M1592 435h6.5" stroke="#ff3314"/><path d="M1598 435h6.5" stroke="#ff3012"/><path d="M1604 435h6.5" stroke="#ff2d10"/><path d="M1610 435h6.5" stroke="#ff2a0e"/><path d="M1616 435h6.5" stroke="#ff270c"/><path d="M1622 435h6.5" stroke="#ff250b"/><path d="M1628 435h6.5" stroke="#ff2209"/><path d="M1634 435h6.5" stroke="#ff2008"/><path d="M1640 435h6.5" stroke="#ff1e06"/><path d="M1646 435h6.5" stroke="#ff1c05"/><path d="M1652 435h6.5" stroke="#ff1a04"/><path d="M1658 435h6.5" stroke="#ff1803"/><path d="M1664 435h6.5" stroke="#ff1602"/><path d="M1670 435h6.5" stroke="#ff1501"/><path d="M1676 435h6.5" stroke="#ff1300"/><path d="M1682 435h6.5" stroke="#ff1200"/><path d="M1688 435h6.5" stroke="#ff1000"/><path d="M1694 435h6.5" stroke="#ff0f00"/><path d="M1700 435h6.5" stroke="#ff0e00"/><path d="M1358 441h12.5" stroke="#00ffc1"/><path d="M1370 441h6.5" stroke="#06ffc0"/><path d="M1376 441h6.5" stroke="#11ffbf"/><path d="M1382 441h6.5" stroke="#1effbe"/><path d="M1388 441h6.5" stroke="#2cffbd"/><path d="M1394 441h6.5" stroke="#3affbc"/><path d="M1400 441h6.5" stroke="#4affbb"/><path d="M1406 441h6.5" stroke="#5affba"/><path d="M1412 441h6.5" stroke="#6cffb9"/><path d="M1418 441h6.5" stroke="#7effb8"/><path d="M1424 441h6.5" stroke="#91ffb7"/><path d="M1430 441h6.5" stroke="#a6ffb6"/><path d="M1436 441h6.5" stroke="#bbffb4"/><path d="M1442 441h6.5" stroke="#d1ffb3"/><path d="M1448 441h6.5" stroke="#e9ffb2"/><path d="M1454 441h6.5" stroke="#fffcaf"/><path d="M1460 441h6.5" stroke="#ffe59d"/><path d="M1466 441h6.5" stroke="#ffd18e"/><path d="M1472 441h6.5" stroke="#ffbf81"/><path d="M1478 441h6.5" stroke="#ffb076"/><path d="M1484 441h6.5" stroke="#ffa26b"/><path d="M1490 441h6.5" stroke="#ff9662"/><path d="M1496 441h6.5" stroke="#ff8a5a"/><path d="M1502 441h6.5" stroke="#ff8052"/><path d="M1508 441h6.5" stroke="#ff774c"/><path d="M1514 441h6.5" stroke="#ff6f45"/><path d="M1520 441h6.5" stroke="#ff6740"/><path d="M1526 441h6.5" stroke="#ff603b"/><path d="M1532 441h6.5" stroke="#ff5a36"/><path d="M1538 441h6.5" stroke="#ff5432"/><path d="M1544 441h6.5" stroke="#ff4e2d"/><path d="M1550 441h6.5" stroke="#ff492a"/><path d="M1556 441h6.5" stroke="#ff4526"/><path d="M1562 441h6.5" stroke="#ff4023"/><path d="M1568 441h6.5" stroke="#ff3c20"/><path d="M1574 441h6.5" stroke="#ff381d"/><path d="M1580 441h6.5" stroke="#ff351b"/><path d="M1586 441h6.5" stroke="#ff3118"/><path d="M1592 441h6.5" stroke="#ff2e16"/><path d="M1598 441h6.5" stroke="#ff2b14"/><path d="M1604 441h6.5" stroke="#ff2812"/><path d="M1610 441h6.5" stroke="#ff2610"/><path d="M1616 441h6.5" stroke="#ff230e"/><path d="M1622 441h6.5" stroke="#ff210d"/><path d="M1628 441h6.5" stroke="#ff1e0b"/><path d="M1634 441h6.5" stroke="#ff1c0a"/><path d="M1640 441h6.5" stroke="#ff1a08"/><path d="M1646 441h6.5" stroke="#ff1807"/><path d="M1652 441h6.5" stroke="#ff1706"/><path d="M1658 441h6.5" stroke="#ff1505"/><path d="M1664 441h6.5" stroke="#ff1304"/><path d="M1670 441h6.5" stroke="#ff1203"/><path d="M1676 441h6.5" stroke="#ff1002"/><path d="M1682 441h6.5" stroke="#ff0f01"/><path d="M1688 441h6.5" stroke="#ff0d00"/><path d="M1694 441h6.5" stroke="#ff0c00"/><path d="M1700 441h6.5" stroke="#ff0b00"/><path d="M1706 441h6.5" stroke="#ff0a00"/><path d="M1712 441h6.5" stroke="#ff0900"/><path d="M1352 447h6.5" stroke="#00ffd2"/><path d="M1358 447h6.5" stroke="#00ffd1"/><path d="M1364 447h6.5" stroke="#01ffd0"/><path d="M1370 447h6.5" stroke="#0bffd0"/><path d="M1376 447h6.5" stroke="#17ffcf"/><path d="M1382 447h6.5" stroke="#24ffce"/><path d="M1388 447h6.5" stroke="#33ffce"/><path d="M1394 447h6.5" stroke="#43ffcd"/><path d="M1400 447h6.5" stroke="#53ffcc"/><path d="M1406 447h6.5" stroke="#65ffcb"/><path d="M1412 447h6.5" stroke="#77ffca"/><path d="M1418 447h6.5" stroke="#8bffca"/><path d="M1424 447h6.5" stroke="#a0ffc9"/><path d="M1430 447h6.5" stroke="#b5ffc8"/><path d="M1436 447h6.5" stroke="#ccffc7"/><path d="M1442 447h6.5" stroke="#e4ffc6"/><path d="M1448 447h6.5" stroke="#feffc5"/><path d="M1454 447h6.5" stroke="#ffe8b2"/><path d="M1460 447h6.5" stroke="#ffd3a1"/><path d="M1466 447h6.5" stroke="#ffc192"/><path d="M1472 447h6.5" stroke="#ffb085"/><path d="M1478 447h6.5" stroke="#ffa279"/><path d="M1484 447h6.5" stroke="#ff956f"/><path d="M1490 447h6.5" stroke="#ff8a66"/><path d="M1496 447h6.5" stroke="#ff7f5d"/><path d="M1502 447h6.5" stroke="#ff7656"/><path d="M1508 447h6.5" stroke="#ff6e4f"/><path d="M1514 447h6.5" stroke="#ff6649"/><path d="M1520 447h6.5" stroke="#ff5f43"/><path d="M1526 447h6.5" stroke="#ff583e"/><path d="M1532 447h6.5" stroke="#ff5239"/><path d="M1538 447h6.5" stroke="#ff4d35"/><path d="M1544 447h6.5" stroke="#ff4831"/><path d="M1550 447h6.5" stroke="#ff432d"/><path d="M1556 447h6.5" stroke="#ff3e29"/><path d="M1562 447h6.5" stroke="#ff3a26"/><path d="M1568 447h6.5" stroke="#ff3623"/><path d="M1574 447h6.5" stroke="#ff3320"/><path d="M1580 447h6.5" stroke="#ff2f1d"/><path d="M1586 447h6.5" stroke="#ff2c1b"/><path d="M1592 447h6.5" stroke="#ff2918"/><path d="M1598 447h6.5" stroke="#ff2616"/><path d="M1604 447h6.5" stroke="#ff2414"/><path d="M1610 447h6.5" stroke="#ff2112"/><path d="M1616 447h6.5" stroke="#ff1f10"/><path d="M1622 447h6.5" stroke="#ff1d0f"/><path d="M1628 447h6.5" stroke="#ff1b0d"/><path d="M1634 447h6.5" stroke="#ff190c"/><path d="M1640 447h6.5" stroke="#ff170a"/><path d="M1646 447h6.5" stroke="#ff1509"/><path d="M1652 447h6.5" stroke="#ff1308"/><path d="M1658 447h6.5" stroke="#ff1206"/><path d="M1664 447h6.5" stroke="#ff1005"/><path d="M1670 447h6.5" stroke="#ff0f04"/><path d="M1676 447h6.5" stroke="#ff0d03"/><path d="M1682 447h6.5" stroke="#ff0c02"/><path d="M1688 447h6.5" stroke="#ff0b01"/><path d="M1694 447h6.5" stroke="#ff0a01"/><path d="M1700 447h6.5" stroke="#ff0800"/><path d="M1706 447h6.5" stroke="#ff0700"/><path d="M1712 447h6.5" stroke="#ff0600"/><path d="M1718 447h6.5" stroke="#ff0500"/><path d="M1352 453h12.5" stroke="#00ffe2"/><path d="M1364 453h6.5" stroke="#04ffe1"/><path d="M1370 453h6.5" stroke="#10ffe1"/><path d="M1376 453h6.5" stroke="#1dffe1"/><path d="M1382 453h6.5" stroke="#2cffe0"/><path d="M1388 453h6.5" stroke="#3bffe0"/><path d="M1394 453h6.5" stroke="#4cffdf"/><path d="M1400 453h6.5" stroke="#5effdf"/><path d="M1406 453h6.5" stroke="#70ffde"/><path d="M1412 453h6.5" stroke="#84ffde"/><path d="M1418 453h6.5" stroke="#99ffdd"/><path d="M1424 453h6.5" stroke="#b0ffdd"/><path d="M1430 453h6.5" stroke="#c7ffdc"/><path d="M1436 453h6.5" stroke="#dfffdb"/><path d="M1442 453h6.5" stroke="#f9ffdb"/><path d="M1448 453h6.5" stroke="#ffebc9"/><path d="M1454 453h6.5" stroke="#ffd5b5"/><path d="M1460 453h6.5" stroke="#ffc2a4"/><path d="M1466 453h6.5" stroke="#ffb196"/><path d="M1472 453h6.5" stroke="#ffa289"/><path d="M1478 453h6.5" stroke="#ff957d"/><path d="M1484 453h6.5" stroke="#ff8973"/><path d="M1490 453h6.5" stroke="#ff7e69"/><path d="M1496 453h6.5" stroke="#ff7561"/><path d="M1502 453h6.5" stroke="#ff6c59"/><path d="M1508 453h6.5" stroke="#ff6452"/><path d="M1514 453h6.5" stroke="#ff5d4c"/><path d="M1520 453h6.5" stroke="#ff5746"/><path d="M1526 453h6.5" stroke="#ff5141"/><path d="M1532 453h6.5" stroke="#ff4b3c"/><path d="M1538 453h6.5" stroke="#ff4638"/><path d="M1544 453h6.5" stroke="#ff4133"/><path d="M1550 453h6.5" stroke="#ff3d30"/><path d="M1556 453h6.5" stroke="#ff382c"/><path d="M1562 453h6.5" stroke="#ff3529"/><path d="M1568 453h6.5" stroke="#ff3126"/><path d="M1574 453h6.5" stroke="#ff2e23"/><path d="M1580 453h6.5" stroke="#ff2a20"/><path d="M1586 453h6.5" stroke="#ff271d"/><path d="M1592 453h6.5" stroke="#ff251b"/><path d="M1598 453h6.5" stroke="#ff2219"/><path d="M1604 453h6.5" stroke="#ff2016"/><path d="M1610 453h6.5" stroke="#ff1d14"/><path d="M1616 453h6.5" stroke="#ff1b13"/><path d="M1622 453h6.5" stroke="#ff1911"/><path d="M1628 453h6.5" stroke="#ff170f"/><path d="M1634 453h6.5" stroke="#ff150e"/><path d="M1640 453h6.5" stroke="#ff130c"/><path d="M1646 453h6.5" stroke="#ff120b"/><path d="M1652 453h6.5" stroke="#ff1009"/><path d="M1658 453h6.5" stroke="#ff0f08"/><path d="M1664 453h6.5" stroke="#ff0d07"/><path d="M1670 453h6.5" stroke="#ff0c06"/><path d="M1676 453h6.5" stroke="#ff0b05"/><path d="M1682 453h6.5" stroke="#ff0904"/><path d="M1688 453h6.5" stroke="#ff0803"/><path d="M1694 453h6.5" stroke="#ff0702"/><path d="M1700 453h6.5" stroke="#ff0601"/><path d="M1706 453h6.5" stroke="#ff0500"/><path d="M1712 453h6.5" stroke="#ff0400"/><path d="M1718 453h12.5" stroke="#ff0300"/><path d="M1730 453h6.5" stroke="#ff0200"/><path d="M1352 459h12.5" stroke="#00fff4"/><path d="M1364 459h6.5" stroke="#09fff4"/><path d="M1370 459h6.5" stroke="#16fff4"/><path d="M1376 459h6.5" stroke="#24fff4"/><path d="M1382 459h6.5" stroke="#34fff4"/><path d="M1388 459h6.5" stroke="#44fff4"/><path d="M1394 459h6.5" stroke="#56fff3"/><path d="M1400 459h6.5" stroke="#69fff3"/><path d="M1406 459h6.5" stroke="#7dfff3"/><path d="M1412 459h6.5" stroke="#93fff3"/><path d="M1418 459h6.5" stroke="#a9fff3"/><path d="M1424 459h6.5" stroke="#c1fff3"/><path d="M1430 459h6.5" stroke="#dafff2"/><path d="M1436 459h6.5" stroke="#f5fff2"/><path d="M1442 459h6.5" stroke="#ffeee2"/><path d="M1448 459h6.5" stroke="#ffd7cc"/><path d="M1454 459h6.5" stroke="#ffc3b9"/><path d="M1460 459h6.5" stroke="#ffb1a8"/><path d="M1466 459h6.5" stroke="#ffa299"/><path d="M1472 459h6.5" stroke="#ff948c"/><path d="M1478 459h6.5" stroke="#ff8881"/><path d="M1484 459h6.5" stroke="#ff7d76"/><path d="M1490 459h6.5" stroke="#ff746d"/><path d="M1496 459h6.5" stroke="#ff6b64"/><path d="M1502 459h6.5" stroke="#ff635d"/><path d="M1508 459h6.5" stroke="#ff5c56"/><path d="M1514 459h6.5" stroke="#ff554f"/><path d="M1520 459h6.5" stroke="#ff4f4a"/><path d="M1526 459h6.5" stroke="#ff4944"/><path d="M1532 459h6.5" stroke="#ff443f"/><path d="M1538 459h6.5" stroke="#ff3f3b"/><path d="M1544 459h6.5" stroke="#ff3b36"/><path d="M1550 459h6.5" stroke="#ff3732"/><path d="M1556 459h6.5" stroke="#ff332f"/><path d="M1562 459h6.5" stroke="#ff2f2b"/><path d="M1568 459h6.5" stroke="#ff2c28"/><path d="M1574 459h6.5" stroke="#ff2925"/><path d="M1580 459h6.5" stroke="#ff2622"/><path d="M1586 459h6.5" stroke="#ff2320"/><path d="M1592 459h6.5" stroke="#ff201d"/><path d="M1598 459h6.5" stroke="#ff1e1b"/><path d="M1604 459h6.5" stroke="#ff1c19"/><path d="M1610 459h6.5" stroke="#ff1917"/><path d="M1616 459h6.5" stroke="#ff1715"/><path d="M1622 459h6.5" stroke="#ff1513"/><path d="M1628 459h6.5" stroke="#ff1411"/><path d="M1634 459h6.5" stroke="#ff1210"/><path d="M1640 459h6.5" stroke="#ff100e"/><path d="M1646 459h6.5" stroke="#ff0f0c"/><path d="M1652 459h6.5" stroke="#ff0d0b"/><path d="M1658 459h6.5" stroke="#ff0c0a"/><path d="M1664 459h6.5" stroke="#ff0a09"/><path d="M1670 459h6.5" stroke="#ff0907"/><path d="M1676 459h6.5" stroke="#ff0806"/><path d="M1682 459h6.5" stroke="#ff0705"/><path d="M1688 459h6.5" stroke="#ff0604"/><path d="M1694 459h6.5" stroke="#ff0503"/><path d="M1700 459h6.5" stroke="#ff0402"/><path d="M1706 459h6.5" stroke="#ff0302"/><path d="M1712 459h6.5" stroke="#ff0201"/><path d="M1718 459h12.5" stroke="#ff0100"/><path d="M1730 459h12.5" stroke="#ff0000"/><path d="M1346 465h12.5" stroke="#00f6ff"/><path d="M1358 465h6.5" stroke="#02f6ff"/><path d="M1364 465h6.5" stroke="#0ef6ff"/><path d="M1370 465h6.5" stroke="#1bf5ff"/><path d="M1376 465h6.5" stroke="#2af5ff"/><path d="M1382 465h6.5" stroke="#3af5ff"/><path d="M1388 465h6.5" stroke="#4bf5ff"/><path d="M1394 465h6.5" stroke="#5ef5ff"/><path d="M1400 465h6.5" stroke="#71f4ff"/><path d="M1406 465h6.5" stroke="#86f4ff"/><path d="M1412 465h6.5" stroke="#9cf4ff"/><path d="M1418 465h6.5" stroke="#b3f4ff"/><path d="M1424 465h6.5" stroke="#cbf3ff"/><path d="M1430 465h6.5" stroke="#e5f3ff"/><path d="M1436 465h6.5" stroke="#fff2fe"/><path d="M1442 465h6.5" stroke="#ffd9e5"/><path d="M1448 465h6.5" stroke="#ffc4cf"/><path d="M1454 465h6.5" stroke="#ffb2bc"/><path d="M1460 465h6.5" stroke="#ffa2ab"/><path d="M1466 465h6.5" stroke="#ff949c"/><path d="M1472 465h6.5" stroke="#ff878f"/><path d="M1478 465h6.5" stroke="#ff7c84"/><path d="M1484 465h6.5" stroke="#ff727a"/><path d="M1490 465h6.5" stroke="#ff6970"/><path d="M1496 465h6.5" stroke="#ff6168"/><path d="M1502 465h6.5" stroke="#ff5a60"/><path d="M1508 465h6.5" stroke="#ff5359"/><path d="M1514 465h6.5" stroke="#ff4d53"/><path d="M1520 465h6.5" stroke="#ff474d"/><path d="M1526 465h6.5" stroke="#ff4247"/><path d="M1532 465h6.5" stroke="#ff3d42"/><path d="M1538 465h6.5" stroke="#ff393e"/><path d="M1544 465h6.5" stroke="#ff3539"/><path d="M1550 465h6.5" stroke="#ff3135"/><path d="M1556 465h6.5" stroke="#ff2d31"/><path d="M1562 465h6.5" stroke="#ff2a2e"/><path d="M1568 465h6.5" stroke="#ff272b"/><path d="M1574 465h6.5" stroke="#ff2428"/><path d="M1580 465h6.5" stroke="#ff2125"/><path d="M1586 465h6.5" stroke="#ff1e22"/><path d="M1592 465h6.5" stroke="#ff1c20"/><path d="M1598 465h6.5" stroke="#ff1a1d"/><path d="M1604 465h6.5" stroke="#ff181b"/><path d="M1610 465h6.5" stroke="#ff1619"/><path d="M1616 465h6.5" stroke="#ff1417"/><path d="M1622 465h6.5" stroke="#ff1215"/><path d="M1628 465h6.5" stroke="#ff1013"/><path d="M1634 465h6.5" stroke="#ff0f11"/><path d="M1640 465h6.5" stroke="#ff0d10"/><path d="M1646 465h6.5" stroke="#ff0c0e"/><path d="M1652 465h6.5" stroke="#ff0a0d"/><path d="M1658 465h6.5" stroke="#ff090c"/><path d="M1664 465h6.5" stroke="#ff080a"/><path d="M1670 465h6.5" stroke="#ff0709"/><path d="M1676 465h6.5" stroke="#ff0608"/><path d="M1682 465h6.5" stroke="#ff0507"/><path d="M1688 465h6.5" stroke="#ff0406"/><path d="M1694 465h6.5" stroke="#ff0305"/><path d="M1700 465h6.5" stroke="#ff0204"/><path d="M1706 465h6.5" stroke="#ff0103"/><path d="M1712 465h6.5" stroke="#ff0002"/><path d="M1718 465h12.5" stroke="#ff0001"/><path d="M1730 465h12.5" stroke="#ff0000"/><path d="M1346 471h6.5" stroke="#00e4ff"/><path d="M1352 471h6.5" stroke="#00e3ff"/><path d="M1358 471h6.5" stroke="#06e3ff"/><path d="M1364 471h6.5" stroke="#12e2ff"/><path d="M1370 471h6.5" stroke="#1fe2ff"/><path d="M1376 471h6.5" stroke="#2ee1ff"/><path d="M1382 471h6.5" stroke="#3ee1ff"/><path d="M1388 471h6.5" stroke="#4fe0ff"/><path d="M1394 471h6.5" stroke="#61e0ff"/><path d="M1400 471h6.5" stroke="#74dfff"/><path d="M1406 471h6.5" stroke="#88dfff"/><path d="M1412 471h6.5" stroke="#9ddeff"/><path d="M1418 471h6.5" stroke="#b4ddff"/><path d="M1424 471h6.5" stroke="#cbddff"/><path d="M1430 471h6.5" stroke="#e4dcff"/><path d="M1436 471h6.5" stroke="#fedbff"/><path d="M1442 471h6.5" stroke="#ffc6e7"/><path d="M1448 471h6.5" stroke="#ffb3d1"/><path d="M1454 471h6.5" stroke="#ffa2bf"/><path d="M1460 471h6.5" stroke="#ff93ae"/><path d="M1466 471h6.5" stroke="#ff87a0"/><path d="M1472 471h6.5" stroke="#ff7b93"/><path d="M1478 471h6.5" stroke="#ff7187"/><path d="M1484 471h6.5" stroke="#ff687d"/><path d="M1490 471h6.5" stroke="#ff6073"/><path d="M1496 471h6.5" stroke="#ff586b"/><path d="M1502 471h6.5" stroke="#ff5163"/><path d="M1508 471h6.5" stroke="#ff4b5c"/><path d="M1514 471h6.5" stroke="#ff4556"/><path d="M1520 471h6.5" stroke="#ff4050"/><path d="M1526 471h6.5" stroke="#ff3b4a"/><path d="M1532 471h6.5" stroke="#ff3745"/><path d="M1538 471h6.5" stroke="#ff3340"/><path d="M1544 471h6.5" stroke="#ff2f3c"/><path d="M1550 471h6.5" stroke="#ff2b38"/><path d="M1556 471h6.5" stroke="#ff2834"/><path d="M1562 471h6.5" stroke="#ff2531"/><path d="M1568 471h6.5" stroke="#ff222d"/><path d="M1574 471h6.5" stroke="#ff1f2a"/><path d="M1580 471h6.5" stroke="#ff1d27"/><path d="M1586 471h6.5" stroke="#ff1a25"/><path d="M1592 471h6.5" stroke="#ff1822"/><path d="M1598 471h6.5" stroke="#ff161f"/><path d="M1604 471h6.5" stroke="#ff141d"/><path d="M1610 471h6.5" stroke="#ff121b"/><path d="M1616 471h6.5" stroke="#ff1019"/><path d="M1622 471h6.5" stroke="#ff0f17"/><path d="M1628 471h6.5" stroke="#ff0d15"/><path d="M1634 471h6.5" stroke="#ff0b13"/><path d="M1640 471h6.5" stroke="#ff0a12"/><path d="M1646 471h6.5" stroke="#ff0910"/><path d="M1652 471h6.5" stroke="#ff080f"/><path d="M1658 471h6.5" stroke="#ff060d"/><path d="M1664 471h6.5" stroke="#ff050c"/><path d="M1670 471h6.5" stroke="#ff040b"/><path d="M1676 471h6.5" stroke="#ff030a"/><path d="M1682 471h6.5" stroke="#ff0208"/><path d="M1688 471h6.5" stroke="#ff0207"/><path d="M1694 471h6.5" stroke="#ff0106"/><path d="M1700 471h6.5" stroke="#ff0005"/><path d="M1706 471h6.5" stroke="#ff0004"/><path d="M1712 471h12.5" stroke="#ff0003"/><path d="M1724 471h6.5" stroke="#ff0002"/><path d="M1730 471h6.5" stroke="#ff0001"/><path d="M1346 477h12.5" stroke="#00d2ff"/><path d="M1358 477h6.5" stroke="#0ad1ff"/><path d="M1364 477h6.5" stroke="#16d0ff"/><path d="M1370 477h6.5" stroke="#24d0ff"/><path d="M1376 477h6.5" stroke="#32cfff"/><path d="M1382 477h6.5" stroke="#42ceff"/><path d="M1388 477h6.5" stroke="#52cdff"/><path d="M1394 477h6.5" stroke="#64ccff"/><path d="M1400 477h6.5" stroke="#76cbff"/><path d="M1406 477h6.5" stroke="#8acaff"/><path d="M1412 477h6.5" stroke="#9fc9ff"/><path d="M1418 477h6.5" stroke="#b4c8ff"/><path d="M1424 477h6.5" stroke="#cbc7ff"/><path d="M1430 477h6.5" stroke="#e3c6ff"/><path d="M1436 477h6.5" stroke="#fcc5ff"/><path d="M1442 477h6.5" stroke="#ffb3e9"/><path d="M1448 477h6.5" stroke="#ffa2d4"/><path d="M1454 477h6.5" stroke="#ff93c1"/><path d="M1460 477h6.5" stroke="#ff86b1"/><path d="M1466 477h6.5" stroke="#ff7aa3"/><path d="M1472 477h6.5" stroke="#ff6f96"/><path d="M1478 477h6.5" stroke="#ff668a"/><path d="M1484 477h6.5" stroke="#ff5e80"/><path d="M1490 477h6.5" stroke="#ff5677"/><path d="M1496 477h6.5" stroke="#ff4f6e"/><path d="M1502 477h6.5" stroke="#ff4966"/><path d="M1508 477h6.5" stroke="#ff435f"/><path d="M1514 477h6.5" stroke="#ff3e59"/><path d="M1520 477h6.5" stroke="#ff3953"/><path d="M1526 477h6.5" stroke="#ff354d"/><path d="M1532 477h6.5" stroke="#ff3048"/><path d="M1538 477h6.5" stroke="#ff2d43"/><path d="M1544 477h6.5" stroke="#ff293f"/><path d="M1550 477h6.5" stroke="#ff263b"/><path d="M1556 477h6.5" stroke="#ff2337"/><path d="M1562 477h6.5" stroke="#ff2033"/><path d="M1568 477h6.5" stroke="#ff1d30"/><path d="M1574 477h6.5" stroke="#ff1b2d"/><path d="M1580 477h6.5" stroke="#ff182a"/><path d="M1586 477h6.5" stroke="#ff1627"/><path d="M1592 477h6.5" stroke="#ff1424"/><path d="M1598 477h6.5" stroke="#ff1222"/><path d="M1604 477h6.5" stroke="#ff101f"/><path d="M1610 477h6.5" stroke="#ff0e1d"/><path d="M1616 477h6.5" stroke="#ff0d1b"/><path d="M1622 477h6.5" stroke="#ff0b19"/><path d="M1628 477h6.5" stroke="#ff0a17"/><path d="M1634 477h6.5" stroke="#ff0915"/><path d="M1640 477h6.5" stroke="#ff0714"/><path d="M1646 477h6.5" stroke="#ff0612"/><path d="M1652 477h6.5" stroke="#ff0511"/><path d="M1658 477h6.5" stroke="#ff040f"/><path d="M1664 477h6.5" stroke="#ff030e"/><path d="M1670 477h6.5" stroke="#ff020c"/><path d="M1676 477h6.5" stroke="#ff010b"/><path d="M1682 477h6.5" stroke="#ff000a"/><path d="M1688 477h6.5" stroke="#ff0009"/><path d="M1694 477h6.5" stroke="#ff0008"/><path d="M1700 477h6.5" stroke="#ff0007"/><path d="M1706 477h6.5" stroke="#ff0006"/><path d="M1712 477h6.5" stroke="#ff0005"/><path d="M1340 483h6.5" stroke="#00c3ff"/><path d="M1346 483h6.5" stroke="#00c2ff"/><path d="M1352 483h6.5" stroke="#03c1ff"/><path d="M1358 483h6.5" stroke="#0ec0ff"/><path d="M1364 483h6.5" stroke="#1abfff"/><path d="M1370 483h6.5" stroke="#28beff"/><path d="M1376 483h6.5" stroke="#36bdff"/><path d="M1382 483h6.5" stroke="#45bcff"/><path d="M1388 483h6.5" stroke="#56bbff"/><path d="M1394 483h6.5" stroke="#67baff"/><path d="M1400 483h6.5" stroke="#79b9ff"/><path d="M1406 483h6.5" stroke="#8cb8ff"/><path d="M1412 483h6.5" stroke="#a0b7ff"/><path d="M1418 483h6.5" stroke="#b5b5ff"/><path d="M1424 483h6.5" stroke="#cbb4ff"/><path d="M1430 483h6.5" stroke="#e2b3ff"/><path d="M1436 483h6.5" stroke="#fbb1ff"/><path d="M1442 483h6.5" stroke="#ffa2eb"/><path d="M1448 483h6.5" stroke="#ff92d6"/><path d="M1454 483h6.5" stroke="#ff85c4"/><path d="M1460 483h6.5" stroke="#ff79b4"/><path d="M1466 483h6.5" stroke="#ff6ea6"/><path d="M1472 483h6.5" stroke="#ff6499"/><path d="M1478 483h6.5" stroke="#ff5c8d"/><path d="M1484 483h6.5" stroke="#ff5483"/><path d="M1490 483h6.5" stroke="#ff4d7a"/><path d="M1496 483h6.5" stroke="#ff4771"/><path d="M1502 483h6.5" stroke="#ff4169"/><path d="M1508 483h6.5" stroke="#ff3c62"/><path d="M1514 483h6.5" stroke="#ff375c"/><path d="M1520 483h6.5" stroke="#ff3256"/><path d="M1526 483h6.5" stroke="#ff2e50"/><path d="M1532 483h6.5" stroke="#ff2a4b"/><path d="M1538 483h6.5" stroke="#ff2746"/><path d="M1544 483h6.5" stroke="#ff2441"/><path d="M1550 483h6.5" stroke="#ff213d"/><path d="M1556 483h6.5" stroke="#ff1e39"/><path d="M1562 483h6.5" stroke="#ff1b36"/><path d="M1568 483h6.5" stroke="#ff1932"/><path d="M1574 483h6.5" stroke="#ff162f"/><path d="M1580 483h6.5" stroke="#ff142c"/><path d="M1586 483h6.5" stroke="#ff1229"/><path d="M1592 483h6.5" stroke="#ff1026"/><path d="M1598 483h6.5" stroke="#ff0e24"/><path d="M1604 483h6.5" stroke="#ff0d22"/><path d="M1610 483h6.5" stroke="#ff0b1f"/><path d="M1616 483h6.5" stroke="#ff0a1d"/><path d="M1622 483h6.5" stroke="#ff081b"/><path d="M1628 483h6.5" stroke="#ff0719"/><path d="M1634 483h6.5" stroke="#ff0617"/><path d="M1640 483h6.5" stroke="#ff0516"/><path d="M1646 483h6.5" stroke="#ff0414"/><path d="M1652 483h6.5" stroke="#ff0312"/><path d="M1658 483h6.5" stroke="#ff0211"/><path d="M1664 483h6.5" stroke="#ff010f"/><path d="M1670 483h6.5" stroke="#ff000e"/><path d="M1676 483h6.5" stroke="#ff000d"/><path d="M1682 483h6.5" stroke="#ff000c"/><path d="M1688 483h6.5" stroke="#ff000a"/><path d="M1694 483h6.5" stroke="#ff0009"/><path d="M1700 483h6.5" stroke="#ff0008"/><path d="M1340 489h6.5" stroke="#00b4ff"/><path d="M1346 489h6.5" stroke="#00b3ff"/><path d="M1352 489h6.5" stroke="#07b2ff"/><path d="M1358 489h6.5" stroke="#12b1ff"/><path d="M1364 489h6.5" stroke="#1eafff"/><path d="M1370 489h6.5" stroke="#2baeff"/><path d="M1376 489h6.5" stroke="#3aadff"/><path d="M1382 489h6.5" stroke="#49acff"/><path d="M1388 489h6.5" stroke="#59aaff"/><path d="M1394 489h6.5" stroke="#69a9ff"/><path d="M1400 489h6.5" stroke="#7ba8ff"/><path d="M1406 489h6.5" stroke="#8ea6ff"/><path d="M1412 489h6.5" stroke="#a1a5ff"/><path d="M1418 489h6.5" stroke="#b6a3ff"/><path d="M1424 489h6.5" stroke="#cba2ff"/><path d="M1430 489h6.5" stroke="#e2a0ff"/><path d="M1436 489h6.5" stroke="#f99eff"/><path d="M1442 489h6.5" stroke="#ff92ed"/><path d="M1448 489h6.5" stroke="#ff84d9"/><path d="M1454 489h6.5" stroke="#ff77c7"/><path d="M1460 489h6.5" stroke="#ff6cb7"/><path d="M1466 489h6.5" stroke="#ff63a9"/><path d="M1472 489h6.5" stroke="#ff5a9c"/><path d="M1478 489h6.5" stroke="#ff5290"/><path d="M1484 489h6.5" stroke="#ff4b86"/><path d="M1490 489h6.5" stroke="#ff457d"/><path d="M1496 489h6.5" stroke="#ff3f74"/><path d="M1502 489h6.5" stroke="#ff396c"/><path d="M1508 489h6.5" stroke="#ff3565"/><path d="M1514 489h6.5" stroke="#ff305f"/><path d="M1520 489h6.5" stroke="#ff2c58"/><path d="M1526 489h6.5" stroke="#ff2853"/><path d="M1532 489h6.5" stroke="#ff254e"/><path d="M1538 489h6.5" stroke="#ff2249"/><path d="M1544 489h6.5" stroke="#ff1e44"/><path d="M1550 489h6.5" stroke="#ff1c40"/><path d="M1556 489h6.5" stroke="#ff193c"/><path d="M1562 489h6.5" stroke="#ff1738"/><path d="M1568 489h6.5" stroke="#ff1435"/><path d="M1574 489h6.5" stroke="#ff1231"/><path d="M1580 489h6.5" stroke="#ff102e"/><path d="M1586 489h6.5" stroke="#ff0e2b"/><path d="M1592 489h6.5" stroke="#ff0d29"/><path d="M1598 489h6.5" stroke="#ff0b26"/><path d="M1604 489h6.5" stroke="#ff0924"/><path d="M1610 489h6.5" stroke="#ff0821"/><path d="M1616 489h6.5" stroke="#ff071f"/><path d="M1622 489h6.5" stroke="#ff051d"/><path d="M1628 489h6.5" stroke="#ff041b"/><path d="M1634 489h6.5" stroke="#ff0319"/><path d="M1640 489h6.5" stroke="#ff0217"/><path d="M1646 489h6.5" stroke="#ff0116"/><path d="M1652 489h6.5" stroke="#ff0014"/><path d="M1658 489h6.5" stroke="#ff0013"/><path d="M1664 489h6.5" stroke="#ff0011"/><path d="M1670 489h6.5" stroke="#ff0010"/><path d="M1676 489h6.5" stroke="#ff000e"/><path d="M1682 489h6.5" stroke="#ff000d"/><path d="M1334 495h6.5" stroke="#00a7ff"/><path d="M1340 495h6.5" stroke="#00a6ff"/><path d="M1346 495h6.5" stroke="#01a4ff"/><path d="M1352 495h6.5" stroke="#0ba3ff"/><path d="M1358 495h6.5" stroke="#16a2ff"/><path d="M1364 495h6.5" stroke="#22a0ff"/><path d="M1370 495h6.5" stroke="#2f9fff"/><path d="M1376 495h6.5" stroke="#3d9eff"/><path d="M1382 495h6.5" stroke="#4c9cff"/><path d="M1388 495h6.5" stroke="#5b9bff"/><path d="M1394 495h6.5" stroke="#6c99ff"/><path d="M1400 495h6.5" stroke="#7d98ff"/><path d="M1406 495h6.5" stroke="#8f96ff"/><path d="M1412 495h6.5" stroke="#a294ff"/><path d="M1418 495h6.5" stroke="#b693ff"/><path d="M1424 495h6.5" stroke="#cb91ff"/><path d="M1430 495h6.5" stroke="#e18fff"/><path d="M1436 495h6.5" stroke="#f88dff"/><path d="M1442 495h6.5" stroke="#ff83ef"/><path d="M1448 495h6.5" stroke="#ff76db"/><path d="M1454 495h6.5" stroke="#ff6bc9"/><path d="M1460 495h6.5" stroke="#ff61b9"/><path d="M1466 495h6.5" stroke="#ff58ab"/><path d="M1472 495h6.5" stroke="#ff509f"/><path d="M1478 495h6.5" stroke="#ff4993"/><path d="M1484 495h6.5" stroke="#ff4289"/><path d="M1490 495h6.5" stroke="#ff3c80"/><path d="M1496 495h6.5" stroke="#ff3777"/><path d="M1502 495h6.5" stroke="#ff326f"/><path d="M1508 495h6.5" stroke="#ff2e68"/><path d="M1514 495h6.5" stroke="#ff2a61"/><path d="M1520 495h6.5" stroke="#ff265b"/><path d="M1526 495h6.5" stroke="#ff2256"/><path d="M1532 495h6.5" stroke="#ff1f50"/><path d="M1538 495h6.5" stroke="#ff1c4b"/><path d="M1544 495h6.5" stroke="#ff1a47"/><path d="M1550 495h6.5" stroke="#ff1742"/><path d="M1556 495h6.5" stroke="#ff153e"/><path d="M1562 495h6.5" stroke="#ff123b"/><path d="M1568 495h6.5" stroke="#ff1037"/><path d="M1574 495h6.5" stroke="#ff0e34"/><path d="M1580 495h6.5" stroke="#ff0c31"/><path d="M1586 495h6.5" stroke="#ff0b2e"/><path d="M1592 495h6.5" stroke="#ff092b"/><path d="M1598 495h6.5" stroke="#ff0828"/><path d="M1604 495h6.5" stroke="#ff0626"/><path d="M1610 495h6.5" stroke="#ff0523"/><path d="M1616 495h6.5" stroke="#ff0421"/><path d="M1622 495h6.5" stroke="#ff031f"/><path d="M1628 495h6.5" stroke="#ff021d"/><path d="M1634 495h6.5" stroke="#ff011b"/><path d="M1640 495h6.5" stroke="#ff0019"/><path d="M1646 495h6.5" stroke="#ff0018"/><path d="M1652 495h6.5" stroke="#ff0016"/><path d="M1658 495h6.5" stroke="#ff0014"/><path d="M1664 495h6.5" stroke="#ff0013"/><path d="M1670 495h6.5" stroke="#ff0011"/><path d="M1334 501h6.5" stroke="#0099ff"/><path d="M1340 501h6.5" stroke="#0098ff"/><path d="M1346 501h6.5" stroke="#0497ff"/><path d="M1352 501h6.5" stroke="#0e95ff"/><path d="M1358 501h6.5" stroke="#1994ff"/><path d="M1364 501h6.5" stroke="#2692ff"/><path d="M1370 501h6.5" stroke="#3391ff"/><path d="M1376 501h6.5" stroke="#408fff"/><path d="M1382 501h6.5" stroke="#4f8eff"/><path d="M1388 501h6.5" stroke="#5e8cff"/><path d="M1394 501h6.5" stroke="#6e8aff"/><path d="M1400 501h6.5" stroke="#7f89ff"/><path d="M1406 501h6.5" stroke="#9187ff"/><path d="M1412 501h6.5" stroke="#a485ff"/><path d="M1418 501h6.5" stroke="#b783ff"/><path d="M1424 501h6.5" stroke="#cb81ff"/><path d="M1430 501h6.5" stroke="#e17fff"/><path d="M1436 501h6.5" stroke="#f77dff"/><path d="M1442 501h6.5" stroke="#ff74f1"/><path d="M1448 501h6.5" stroke="#ff69dd"/><path d="M1454 501h6.5" stroke="#ff5fcb"/><path d="M1460 501h6.5" stroke="#ff56bc"/><path d="M1466 501h6.5" stroke="#ff4eae"/><path d="M1472 501h6.5" stroke="#ff46a1"/><path d="M1478 501h6.5" stroke="#ff4096"/><path d="M1484 501h6.5" stroke="#ff3a8c"/><path d="M1490 501h6.5" stroke="#ff3582"/><path d="M1496 501h6.5" stroke="#ff307a"/><path d="M1502 501h6.5" stroke="#ff2b72"/><path d="M1508 501h6.5" stroke="#ff276b"/><path d="M1514 501h6.5" stroke="#ff2464"/><path d="M1520 501h6.5" stroke="#ff205e"/><path d="M1526 501h6.5" stroke="#ff1d58"/><path d="M1532 501h6.5" stroke="#ff1a53"/><path d="M1538 501h6.5" stroke="#ff174e"/><path d="M1544 501h6.5" stroke="#ff1549"/><path d="M1550 501h6.5" stroke="#ff1245"/><path d="M1556 501h6.5" stroke="#ff1041"/><path d="M1562 501h6.5" stroke="#ff0e3d"/><path d="M1568 501h6.5" stroke="#ff0c3a"/><path d="M1574 501h6.5" stroke="#ff0b36"/><path d="M1580 501h6.5" stroke="#ff0933"/><path d="M1586 501h6.5" stroke="#ff0730"/><path d="M1592 501h6.5" stroke="#ff062d"/><path d="M1598 501h6.5" stroke="#ff052a"/><path d="M1604 501h6.5" stroke="#ff0328"/><path d="M1610 501h6.5" stroke="#ff0226"/><path d="M1616 501h6.5" stroke="#ff0123"/><path d="M1622 501h6.5" stroke="#ff0021"/><path d="M1628 501h6.5" stroke="#ff001f"/><path d="M1634 501h6.5" stroke="#ff001d"/><path d="M1640 501h6.5" stroke="#ff001b"/><path d="M1646 501h6.5" stroke="#ff0019"/><path d="M1652 501h6.5" stroke="#ff0018"/><path d="M1334 507h6.5" stroke="#008dff"/><path d="M1340 507h6.5" stroke="#008bff"/><path d="M1346 507h6.5" stroke="#088aff"/><path d="M1352 507h6.5" stroke="#1288ff"/><path d="M1358 507h6.5" stroke="#1d87ff"/><path d="M1364 507h6.5" stroke="#2985ff"/><path d="M1370 507h6.5" stroke="#3684ff"/><path d="M1376 507h6.5" stroke="#4382ff"/><path d="M1382 507h6.5" stroke="#5280ff"/><path d="M1388 507h6.5" stroke="#617eff"/><path d="M1394 507h6.5" stroke="#717cff"/><path d="M1400 507h6.5" stroke="#817bff"/><path d="M1406 507h6.5" stroke="#9379ff"/><path d="M1412 507h6.5" stroke="#a577ff"/><path d="M1418 507h6.5" stroke="#b875ff"/><path d="M1424 507h6.5" stroke="#cb73ff"/><path d="M1430 507h6.5" stroke="#e070ff"/><path d="M1436 507h6.5" stroke="#f66eff"/><path d="M1442 507h6.5" stroke="#ff67f3"/><path d="M1448 507h6.5" stroke="#ff5cdf"/><path d="M1454 507h6.5" stroke="#ff53ce"/><path d="M1460 507h6.5" stroke="#ff4bbe"/><path d="M1466 507h6.5" stroke="#ff44b0"/><path d="M1472 507h6.5" stroke="#ff3da4"/><path d="M1478 507h6.5" stroke="#ff3799"/><path d="M1484 507h6.5" stroke="#ff328e"/><path d="M1490 507h6.5" stroke="#ff2d85"/><path d="M1496 507h6.5" stroke="#ff297d"/><path d="M1502 507h6.5" stroke="#ff2575"/><path d="M1508 507h6.5" stroke="#ff216d"/><path d="M1514 507h6.5" stroke="#ff1e67"/><path d="M1520 507h6.5" stroke="#ff1b61"/><path d="M1526 507h6.5" stroke="#ff185b"/><path d="M1532 507h6.5" stroke="#ff1555"/><path d="M1538 507h6.5" stroke="#ff1350"/><path d="M1544 507h6.5" stroke="#ff104c"/><path d="M1550 507h6.5" stroke="#ff0e47"/><path d="M1556 507h6.5" stroke="#ff0c43"/><path d="M1562 507h6.5" stroke="#ff0a3f"/><path d="M1568 507h6.5" stroke="#ff093c"/><path d="M1574 507h6.5" stroke="#ff0738"/><path d="M1580 507h6.5" stroke="#ff0635"/><path d="M1586 507h6.5" stroke="#ff0432"/><path d="M1592 507h6.5" stroke="#ff032f"/><path d="M1598 507h6.5" stroke="#ff022d"/><path d="M1604 507h6.5" stroke="#ff012a"/><path d="M1610 507h6.5" stroke="#ff0028"/><path d="M1616 507h6.5" stroke="#ff0025"/><path d="M1622 507h6.5" stroke="#ff0023"/><path d="M1628 507h6.5" stroke="#ff0021"/><path d="M1634 507h6.5" stroke="#ff001f"/><path d="M1640 507h6.5" stroke="#ff001d"/><path d="M1328 513h6.5" stroke="#0082ff"/><path d="M1334 513h6.5" stroke="#0081ff"/><path d="M1340 513h6.5" stroke="#027fff"/><path d="M1346 513h6.5" stroke="#0b7eff"/><path d="M1352 513h6.5" stroke="#157cff"/><path d="M1358 513h6.5" stroke="#217aff"/><path d="M1364 513h6.5" stroke="#2c79ff"/><path d="M1370 513h6.5" stroke="#3977ff"/><path d="M1376 513h6.5" stroke="#4775ff"/><path d="M1382 513h6.5" stroke="#5573ff"/><path d="M1388 513h6.5" stroke="#6371ff"/><path d="M1394 513h6.5" stroke="#736fff"/><path d="M1400 513h6.5" stroke="#836dff"/><path d="M1406 513h6.5" stroke="#946bff"/><path d="M1412 513h6.5" stroke="#a669ff"/><path d="M1418 513h6.5" stroke="#b867ff"/><path d="M1424 513h6.5" stroke="#cb65ff"/><path d="M1430 513h6.5" stroke="#df63ff"/><path d="M1436 513h6.5" stroke="#f460ff"/><path d="M1442 513h6.5" stroke="#ff5af4"/><path d="M1448 513h6.5" stroke="#ff51e1"/><path d="M1454 513h6.5" stroke="#ff48d0"/><path d="M1460 513h6.5" stroke="#ff41c1"/><path d="M1466 513h6.5" stroke="#ff3bb3"/><path d="M1472 513h6.5" stroke="#ff35a7"/><path d="M1478 513h6.5" stroke="#ff2f9b"/><path d="M1484 513h6.5" stroke="#ff2b91"/><path d="M1490 513h6.5" stroke="#ff2688"/><path d="M1496 513h6.5" stroke="#ff227f"/><path d="M1502 513h6.5" stroke="#ff1f77"/><path d="M1508 513h6.5" stroke="#ff1b70"/><path d="M1514 513h6.5" stroke="#ff1869"/><path d="M1520 513h6.5" stroke="#ff1563"/><path d="M1526 513h6.5" stroke="#ff135d"/><path d="M1532 513h6.5" stroke="#ff1058"/><path d="M1538 513h6.5" stroke="#ff0e53"/><path d="M1544 513h6.5" stroke="#ff0c4e"/><path d="M1550 513h6.5" stroke="#ff0a4a"/><path d="M1556 513h6.5" stroke="#ff0846"/><path d="M1562 513h6.5" stroke="#ff0742"/><path d="M1568 513h6.5" stroke="#ff053e"/><path d="M1574 513h6.5" stroke="#ff043b"/><path d="M1580 513h6.5" stroke="#ff0337"/><path d="M1586 513h6.5" stroke="#ff0134"/><path d="M1592 513h6.5" stroke="#ff0031"/><path d="M1598 513h6.5" stroke="#ff002f"/><path d="M1604 513h6.5" stroke="#ff002c"/><path d="M1610 513h6.5" stroke="#ff002a"/><path d="M1616 513h6.5" stroke="#ff0027"/><path d="M1622 513h6.5" stroke="#ff0025"/><path d="M1328 519h6.5" stroke="#0077ff"/><path d="M1334 519h6.5" stroke="#0075ff"/><path d="M1340 519h6.5" stroke="#0574ff"/><path d="M1346 519h6.5" stroke="#0f72ff"/><path d="M1352 519h6.5" stroke="#1970ff"/><path d="M1358 519h6.5" stroke="#246fff"/><path d="M1364 519h6.5" stroke="#306dff"/><path d="M1370 519h6.5" stroke="#3c6bff"/><path d="M1376 519h6.5" stroke="#4969ff"/><path d="M1382 519h6.5" stroke="#5767ff"/><path d="M1388 519h6.5" stroke="#6665ff"/><path d="M1394 519h6.5" stroke="#7563ff"/><path d="M1400 519h6.5" stroke="#8561ff"/><path d="M1406 519h6.5" stroke="#955fff"/><path d="M1412 519h6.5" stroke="#a75dff"/><path d="M1418 519h6.5" stroke="#b95bff"/><path d="M1424 519h6.5" stroke="#cb58ff"/><path d="M1430 519h6.5" stroke="#df56ff"/><path d="M1436 519h6.5" stroke="#f353ff"/><path d="M1442 519h6.5" stroke="#ff4ef6"/><path d="M1448 519h6.5" stroke="#ff46e3"/><path d="M1454 519h6.5" stroke="#ff3ed2"/><path d="M1460 519h6.5" stroke="#ff38c3"/><path d="M1466 519h6.5" stroke="#ff32b5"/><path d="M1472 519h6.5" stroke="#ff2da9"/><path d="M1478 519h6.5" stroke="#ff289e"/><path d="M1484 519h6.5" stroke="#ff2394"/><path d="M1490 519h6.5" stroke="#ff208a"/><path d="M1496 519h6.5" stroke="#ff1c82"/><path d="M1502 519h6.5" stroke="#ff197a"/><path d="M1508 519h6.5" stroke="#ff1673"/><path d="M1514 519h6.5" stroke="#ff136c"/><path d="M1520 519h6.5" stroke="#ff1066"/><path d="M1526 519h6.5" stroke="#ff0e60"/><path d="M1532 519h6.5" stroke="#ff0c5a"/><path d="M1538 519h6.5" stroke="#ff0a55"/><path d="M1544 519h6.5" stroke="#ff0851"/><path d="M1550 519h6.5" stroke="#ff064c"/><path d="M1556 519h6.5" stroke="#ff0548"/><path d="M1562 519h6.5" stroke="#ff0344"/><path d="M1568 519h6.5" stroke="#ff0240"/><path d="M1574 519h6.5" stroke="#ff013d"/><path d="M1580 519h6.5" stroke="#ff003a"/><path d="M1586 519h6.5" stroke="#ff0037"/><path d="M1592 519h6.5" stroke="#ff0034"/><path d="M1598 519h6.5" stroke="#ff0031"/><path d="M1604 519h6.5" stroke="#ff002e"/><path d="M1610 519h6.5" stroke="#ff002c"/><path d="M1322 525h6.5" stroke="#006eff"/><path d="M1328 525h6.5" stroke="#006cff"/><path d="M1334 525h6.5" stroke="#016bff"/><path d="M1340 525h6.5" stroke="#0869ff"/><path d="M1346 525h6.5" stroke="#1267ff"/><path d="M1352 525h6.5" stroke="#1c65ff"/><path d="M1358 525h6.5" stroke="#2764ff"/><path d="M1364 525h6.5" stroke="#3362ff"/><path d="M1370 525h6.5" stroke="#3f60ff"/><path d="M1376 525h6.5" stroke="#4c5eff"/><path d="M1382 525h6.5" stroke="#5a5cff"/><path d="M1388 525h6.5" stroke="#685aff"/><path d="M1394 525h6.5" stroke="#7758ff"/><path d="M1400 525h6.5" stroke="#8756ff"/><path d="M1406 525h6.5" stroke="#9753ff"/><path d="M1412 525h6.5" stroke="#a851ff"/><path d="M1418 525h6.5" stroke="#b94fff"/><path d="M1424 525h6.5" stroke="#cb4cff"/><path d="M1430 525h6.5" stroke="#de4aff"/><path d="M1436 525h6.5" stroke="#f247ff"/><path d="M1442 525h6.5" stroke="#ff43f7"/><path d="M1448 525h6.5" stroke="#ff3be5"/><path d="M1454 525h6.5" stroke="#ff35d4"/><path d="M1460 525h6.5" stroke="#ff2fc5"/><path d="M1466 525h6.5" stroke="#ff2ab8"/><path d="M1472 525h6.5" stroke="#ff25ab"/><path d="M1478 525h6.5" stroke="#ff21a0"/><path d="M1484 525h6.5" stroke="#ff1d96"/><path d="M1490 525h6.5" stroke="#ff198d"/><path d="M1496 525h6.5" stroke="#ff1684"/><path d="M1502 525h6.5" stroke="#ff137c"/><path d="M1508 525h6.5" stroke="#ff1075"/><path d="M1514 525h6.5" stroke="#ff0e6e"/><path d="M1520 525h6.5" stroke="#ff0c68"/><path d="M1526 525h6.5" stroke="#ff0a62"/><path d="M1532 525h6.5" stroke="#ff085d"/><path d="M1538 525h6.5" stroke="#ff0658"/><path d="M1544 525h6.5" stroke="#ff0453"/><path d="M1550 525h6.5" stroke="#ff034f"/><path d="M1556 525h6.5" stroke="#ff024a"/><path d="M1562 525h6.5" stroke="#ff0146"/><path d="M1568 525h6.5" stroke="#ff0043"/><path d="M1574 525h6.5" stroke="#ff003f"/><path d="M1580 525h6.5" stroke="#ff003c"/><path d="M1586 525h6.5" stroke="#ff0039"/><path d="M1592 525h6.5" stroke="#ff0036"/><path d="M1322 531h6.5" stroke="#0064ff"/><path d="M1328 531h6.5" stroke="#0062ff"/><path d="M1334 531h6.5" stroke="#0361ff"/><path d="M1340 531h6.5" stroke="#0c5fff"/><path d="M1346 531h6.5" stroke="#155dff"/><path d="M1352 531h6.5" stroke="#1f5bff"/><path d="M1358 531h6.5" stroke="#2a59ff"/><path d="M1364 531h6.5" stroke="#3657ff"/><path d="M1370 531h6.5" stroke="#4255ff"/><path d="M1376 531h6.5" stroke="#4f53ff"/><path d="M1382 531h6.5" stroke="#5c51ff"/><path d="M1388 531h6.5" stroke="#6a4fff"/><path d="M1394 531h6.5" stroke="#794dff"/><path d="M1400 531h6.5" stroke="#884bff"/><path d="M1406 531h6.5" stroke="#9848ff"/><path d="M1412 531h6.5" stroke="#a846ff"/><path d="M1418 531h6.5" stroke="#ba44ff"/><path d="M1424 531h6.5" stroke="#cb41ff"/><path d="M1430 531h6.5" stroke="#de3fff"/><path d="M1436 531h6.5" stroke="#f13cff"/><path d="M1442 531h6.5" stroke="#ff38f9"/><path d="M1448 531h6.5" stroke="#ff32e6"/><path d="M1454 531h6.5" stroke="#ff2cd6"/><path d="M1460 531h6.5" stroke="#ff27c7"/><path d="M1466 531h6.5" stroke="#ff22ba"/><path d="M1472 531h6.5" stroke="#ff1eae"/><path d="M1478 531h6.5" stroke="#ff1aa3"/><path d="M1484 531h6.5" stroke="#ff1699"/><path d="M1490 531h6.5" stroke="#ff138f"/><path d="M1496 531h6.5" stroke="#ff1087"/><path d="M1502 531h6.5" stroke="#ff0e7f"/><path d="M1508 531h6.5" stroke="#ff0b78"/><path d="M1514 531h6.5" stroke="#ff0971"/><path d="M1520 531h6.5" stroke="#ff076b"/><path d="M1526 531h6.5" stroke="#ff0565"/><path d="M1532 531h6.5" stroke="#ff045f"/><path d="M1538 531h6.5" stroke="#ff025a"/><path d="M1544 531h6.5" stroke="#ff0155"/><path d="M1550 531h6.5" stroke="#ff0051"/><path d="M1556 531h6.5" stroke="#ff004d"/><path d="M1562 531h6.5" stroke="#ff0049"/><path d="M1568 531h6.5" stroke="#ff0045"/><path d="M1574 531h6.5" stroke="#ff0041"/><path d="M1580 531h6.5" stroke="#ff003e"/><path d="M1322 537h6.5" stroke="#005aff"/><path d="M1328 537h6.5" stroke="#0059ff"/><path d="M1334 537h6.5" stroke="#0657ff"/><path d="M1340 537h6.5" stroke="#0f55ff"/><path d="M1346 537h6.5" stroke="#1853ff"/><path d="M1352 537h6.5" stroke="#2251ff"/><path d="M1358 537h6.5" stroke="#2d4fff"/><path d="M1364 537h6.5" stroke="#394dff"/><path d="M1370 537h6.5" stroke="#454bff"/><path d="M1376 537h6.5" stroke="#5149ff"/><path d="M1382 537h6.5" stroke="#5f47ff"/><path d="M1388 537h6.5" stroke="#6c45ff"/><path d="M1394 537h6.5" stroke="#7b43ff"/><path d="M1400 537h6.5" stroke="#8a40ff"/><path d="M1406 537h6.5" stroke="#993eff"/><path d="M1412 537h6.5" stroke="#a93cff"/><path d="M1418 537h6.5" stroke="#ba39ff"/><path d="M1424 537h6.5" stroke="#cb37ff"/><path d="M1430 537h6.5" stroke="#de34ff"/><path d="M1436 537h6.5" stroke="#f032ff"/><path d="M1442 537h6.5" stroke="#ff2efa"/><path d="M1448 537h6.5" stroke="#ff28e8"/><path d="M1454 537h6.5" stroke="#ff23d8"/><path d="M1460 537h6.5" stroke="#ff1fc9"/><path d="M1466 537h6.5" stroke="#ff1bbc"/><path d="M1472 537h6.5" stroke="#ff17b0"/><path d="M1478 537h6.5" stroke="#ff13a5"/><path d="M1484 537h6.5" stroke="#ff109b"/><path d="M1490 537h6.5" stroke="#ff0e92"/><path d="M1496 537h6.5" stroke="#ff0b89"/><path d="M1502 537h6.5" stroke="#ff0981"/><path d="M1508 537h6.5" stroke="#ff077a"/><path d="M1514 537h6.5" stroke="#ff0573"/><path d="M1520 537h6.5" stroke="#ff036d"/><path d="M1526 537h6.5" stroke="#ff0267"/><path d="M1532 537h6.5" stroke="#ff0162"/><path d="M1538 537h6.5" stroke="#ff005c"/><path d="M1544 537h6.5" stroke="#ff0058"/><path d="M1550 537h6.5" stroke="#ff0053"/><path d="M1556 537h6.5" stroke="#ff004f"/><path d="M1562 537h6.5" stroke="#ff004b"/><path d="M1316 543h6.5" stroke="#0053ff"/><path d="M1322 543h6.5" stroke="#0051ff"/><path d="M1328 543h6.5" stroke="#0250ff"/><path d="M1334 543h6.5" stroke="#094eff"/><path d="M1340 543h6.5" stroke="#124cff"/><path d="M1346 543h6.5" stroke="#1b4aff"/><path d="M1352 543h6.5" stroke="#2648ff"/><path d="M1358 543h6.5" stroke="#3046ff"/><path d="M1364 543h6.5" stroke="#3c44ff"/><path d="M1370 543h6.5" stroke="#4842ff"/><path d="M1376 543h6.5" stroke="#5440ff"/><path d="M1382 543h6.5" stroke="#613eff"/><path d="M1388 543h6.5" stroke="#6e3bff"/><path d="M1394 543h6.5" stroke="#7c39ff"/><path d="M1400 543h6.5" stroke="#8b37ff"/><path d="M1406 543h6.5" stroke="#9a35ff"/><path d="M1412 543h6.5" stroke="#aa32ff"/><path d="M1418 543h6.5" stroke="#ba30ff"/><path d="M1424 543h6.5" stroke="#cb2dff"/><path d="M1430 543h6.5" stroke="#dd2bff"/><path d="M1436 543h6.5" stroke="#ef28ff"/><path d="M1442 543h6.5" stroke="#ff25fc"/><path d="M1448 543h6.5" stroke="#ff20ea"/><path d="M1454 543h6.5" stroke="#ff1bda"/><path d="M1460 543h6.5" stroke="#ff17cb"/><path d="M1466 543h6.5" stroke="#ff14be"/><path d="M1472 543h6.5" stroke="#ff10b2"/><path d="M1478 543h6.5" stroke="#ff0da7"/><path d="M1484 543h6.5" stroke="#ff0b9d"/><path d="M1490 543h6.5" stroke="#ff0894"/><path d="M1496 543h6.5" stroke="#ff068c"/><path d="M1502 543h6.5" stroke="#ff0484"/><path d="M1508 543h6.5" stroke="#ff037c"/><path d="M1514 543h6.5" stroke="#ff0176"/><path d="M1520 543h6.5" stroke="#ff006f"/><path d="M1526 543h6.5" stroke="#ff0069"/><path d="M1532 543h6.5" stroke="#ff0064"/><path d="M1538 543h6.5" stroke="#ff005f"/><path d="M1544 543h6.5" stroke="#ff005a"/><path d="M1316 549h6.5" stroke="#004bff"/><path d="M1322 549h6.5" stroke="#0049ff"/><path d="M1328 549h6.5" stroke="#0447ff"/><path d="M1334 549h6.5" stroke="#0c45ff"/><path d="M1340 549h6.5" stroke="#1543ff"/><path d="M1346 549h6.5" stroke="#1e41ff"/><path d="M1352 549h6.5" stroke="#283fff"/><path d="M1358 549h6.5" stroke="#333dff"/><path d="M1364 549h6.5" stroke="#3e3bff"/><path d="M1370 549h6.5" stroke="#4a39ff"/><path d="M1376 549h6.5" stroke="#5637ff"/><path d="M1382 549h6.5" stroke="#6335ff"/><path d="M1388 549h6.5" stroke="#7033ff"/><path d="M1394 549h6.5" stroke="#7e30ff"/><path d="M1400 549h6.5" stroke="#8c2eff"/><path d="M1406 549h6.5" stroke="#9b2cff"/><path d="M1412 549h6.5" stroke="#ab29ff"/><path d="M1418 549h6.5" stroke="#bb27ff"/><path d="M1424 549h6.5" stroke="#cc24ff"/><path d="M1430 549h6.5" stroke="#dd22ff"/><path d="M1436 549h6.5" stroke="#ef1fff"/><path d="M1442 549h6.5" stroke="#ff1cfd"/><path d="M1448 549h6.5" stroke="#ff18eb"/><path d="M1454 549h6.5" stroke="#ff14db"/><path d="M1460 549h6.5" stroke="#ff10cd"/><path d="M1466 549h6.5" stroke="#ff0dc0"/><path d="M1472 549h6.5" stroke="#ff0ab4"/><path d="M1478 549h6.5" stroke="#ff08a9"/><path d="M1484 549h6.5" stroke="#ff069f"/><path d="M1490 549h6.5" stroke="#ff0496"/><path d="M1496 549h6.5" stroke="#ff028e"/><path d="M1502 549h6.5" stroke="#ff0186"/><path d="M1508 549h6.5" stroke="#ff007f"/><path d="M1514 549h6.5" stroke="#ff0078"/><path d="M1520 549h6.5" stroke="#ff0072"/><path d="M1526 549h6.5" stroke="#ff006c"/><path d="M1532 549h6.5" stroke="#ff0066"/><path d="M1310 555h6.5" stroke="#0044ff"/><path d="M1316 555h6.5" stroke="#0042ff"/><path d="M1322 555h6.5" stroke="#0041ff"/><path d="M1328 555h6.5" stroke="#073fff"/><path d="M1334 555h6.5" stroke="#0f3dff"/><path d="M1340 555h6.5" stroke="#183bff"/><path d="M1346 555h6.5" stroke="#2139ff"/><path d="M1352 555h6.5" stroke="#2b37ff"/><path d="M1358 555h6.5" stroke="#3635ff"/><path d="M1364 555h6.5" stroke="#4133ff"/><path d="M1370 555h6.5" stroke="#4d31ff"/><path d="M1376 555h6.5" stroke="#592fff"/><path d="M1382 555h6.5" stroke="#652cff"/><path d="M1388 555h6.5" stroke="#722aff"/><path d="M1394 555h6.5" stroke="#8028ff"/><path d="M1400 555h6.5" stroke="#8e26ff"/><path d="M1406 555h6.5" stroke="#9c23ff"/><path d="M1412 555h6.5" stroke="#ac21ff"/><path d="M1418 555h6.5" stroke="#bb1eff"/><path d="M1424 555h6.5" stroke="#cc1cff"/><path d="M1430 555h6.5" stroke="#dc19ff"/><path d="M1436 555h6.5" stroke="#ee17ff"/><path d="M1442 555h6.5" stroke="#ff14fe"/><path d="M1448 555h6.5" stroke="#ff10ed"/><path d="M1454 555h6.5" stroke="#ff0ddd"/><path d="M1460 555h6.5" stroke="#ff0acf"/><path d="M1466 555h6.5" stroke="#ff07c2"/><path d="M1472 555h6.5" stroke="#ff05b6"/><path d="M1478 555h6.5" stroke="#ff03ac"/><path d="M1484 555h6.5" stroke="#ff01a2"/><path d="M1490 555h6.5" stroke="#ff0098"/><path d="M1496 555h6.5" stroke="#ff0090"/><path d="M1502 555h6.5" stroke="#ff0088"/><path d="M1508 555h6.5" stroke="#ff0081"/><path d="M1514 555h6.5" stroke="#ff007a"/><path d="M1310 561h6.5" stroke="#003cff"/><path d="M1316 561h6.5" stroke="#003bff"/><path d="M1322 561h6.5" stroke="#0239ff"/><path d="M1328 561h6.5" stroke="#0a37ff"/><path d="M1334 561h6.5" stroke="#1235ff"/><path d="M1340 561h6.5" stroke="#1b33ff"/><path d="M1346 561h6.5" stroke="#2431ff"/><path d="M1352 561h6.5" stroke="#2e2fff"/><path d="M1358 561h6.5" stroke="#392dff"/><path d="M1364 561h6.5" stroke="#432bff"/><path d="M1370 561h6.5" stroke="#4f29ff"/><path d="M1376 561h6.5" stroke="#5b27ff"/><path d="M1382 561h6.5" stroke="#6724ff"/><path d="M1388 561h6.5" stroke="#7422ff"/><path d="M1394 561h6.5" stroke="#8120ff"/><path d="M1400 561h6.5" stroke="#8f1eff"/><path d="M1406 561h6.5" stroke="#9d1bff"/><path d="M1412 561h6.5" stroke="#ac19ff"/><path d="M1418 561h6.5" stroke="#bc17ff"/><path d="M1424 561h6.5" stroke="#cc14ff"/><path d="M1430 561h6.5" stroke="#dc12ff"/><path d="M1436 561h6.5" stroke="#ed0fff"/><path d="M1442 561h6.5" stroke="#ff0dff"/><path d="M1448 561h6.5" stroke="#ff0aee"/><path d="M1454 561h6.5" stroke="#ff07df"/><path d="M1460 561h6.5" stroke="#ff04d1"/><path d="M1466 561h6.5" stroke="#ff02c4"/><path d="M1472 561h6.5" stroke="#ff01b8"/><path d="M1478 561h6.5" stroke="#ff00ae"/><path d="M1484 561h6.5" stroke="#ff00a4"/><path d="M1490 561h6.5" stroke="#ff009b"/><path d="M1496 561h6.5" stroke="#ff0092"/><path d="M1502 561h6.5" stroke="#ff008a"/><path d="M1310 567h6.5" stroke="#0035ff"/><path d="M1316 567h6.5" stroke="#0033ff"/><path d="M1322 567h6.5" stroke="#0531ff"/><path d="M1328 567h6.5" stroke="#0c30ff"/><path d="M1334 567h6.5" stroke="#152eff"/><path d="M1340 567h6.5" stroke="#1d2cff"/><path d="M1346 567h6.5" stroke="#272aff"/><path d="M1352 567h6.5" stroke="#3128ff"/><path d="M1358 567h6.5" stroke="#3b26ff"/><path d="M1364 567h6.5" stroke="#4624ff"/><path d="M1370 567h6.5" stroke="#5121ff"/><path d="M1376 567h6.5" stroke="#5d1fff"/><path d="M1382 567h6.5" stroke="#691dff"/><path d="M1388 567h6.5" stroke="#761bff"/><path d="M1394 567h6.5" stroke="#8319ff"/><path d="M1400 567h6.5" stroke="#9016ff"/><path d="M1406 567h6.5" stroke="#9e14ff"/><path d="M1412 567h6.5" stroke="#ad12ff"/><path d="M1418 567h6.5" stroke="#bc10ff"/><path d="M1424 567h6.5" stroke="#cc0dff"/><path d="M1430 567h6.5" stroke="#dc0bff"/><path d="M1436 567h6.5" stroke="#ec09ff"/><path d="M1442 567h6.5" stroke="#fe06ff"/><path d="M1448 567h6.5" stroke="#ff04f0"/><path d="M1454 567h6.5" stroke="#ff02e0"/><path d="M1460 567h6.5" stroke="#ff00d2"/><path d="M1466 567h6.5" stroke="#ff00c6"/><path d="M1472 567h6.5" stroke="#ff00ba"/><path d="M1478 567h6.5" stroke="#ff00b0"/><path d="M1484 567h6.5" stroke="#ff00a6"/><path d="M1304 573h6.5" stroke="#0030ff"/><path d="M1310 573h6.5" stroke="#002eff"/><path d="M1316 573h6.5" stroke="#012cff"/><path d="M1322 573h6.5" stroke="#072aff"/><path d="M1328 573h6.5" stroke="#0f29ff"/><path d="M1334 573h6.5" stroke="#1727ff"/><path d="M1340 573h6.5" stroke="#2025ff"/><path d="M1346 573h6.5" stroke="#2a23ff"/><path d="M1352 573h6.5" stroke="#3321ff"/><path d="M1358 573h6.5" stroke="#3e1fff"/><path d="M1364 573h6.5" stroke="#481dff"/><path d="M1370 573h6.5" stroke="#531bff"/><path d="M1376 573h6.5" stroke="#5f18ff"/><path d="M1382 573h6.5" stroke="#6b16ff"/><path d="M1388 573h6.5" stroke="#7714ff"/><path d="M1394 573h6.5" stroke="#8412ff"/><path d="M1400 573h6.5" stroke="#9210ff"/><path d="M1406 573h6.5" stroke="#9f0eff"/><path d="M1412 573h6.5" stroke="#ae0bff"/><path d="M1418 573h6.5" stroke="#bc09ff"/><path d="M1424 573h6.5" stroke="#cc07ff"/><path d="M1430 573h6.5" stroke="#db05ff"/><path d="M1436 573h6.5" stroke="#ec03ff"/><path d="M1442 573h6.5" stroke="#fd01ff"/><path d="M1448 573h6.5" stroke="#ff00f1"/><path d="M1454 573h6.5" stroke="#ff00e2"/><path d="M1460 573h6.5" stroke="#ff00d4"/><path d="M1466 573h6.5" stroke="#ff00c8"/><path d="M1472 573h6.5" stroke="#ff00bc"/><path d="M1304 579h6.5" stroke="#0029ff"/><path d="M1310 579h6.5" stroke="#0028ff"/><path d="M1316 579h6.5" stroke="#0326ff"/><path d="M1322 579h6.5" stroke="#0a24ff"/><path d="M1328 579h6.5" stroke="#1222ff"/><path d="M1334 579h6.5" stroke="#1a20ff"/><path d="M1340 579h6.5" stroke="#231eff"/><path d="M1346 579h6.5" stroke="#2c1cff"/><path d="M1352 579h6.5" stroke="#361aff"/><path d="M1358 579h6.5" stroke="#4018ff"/><path d="M1364 579h6.5" stroke="#4b16ff"/><path d="M1370 579h6.5" stroke="#5614ff"/><path d="M1376 579h6.5" stroke="#6112ff"/><path d="M1382 579h6.5" stroke="#6d10ff"/><path d="M1388 579h6.5" stroke="#790eff"/><path d="M1394 579h6.5" stroke="#860cff"/><path d="M1400 579h6.5" stroke="#930aff"/><path d="M1406 579h6.5" stroke="#a007ff"/><path d="M1412 579h6.5" stroke="#ae05ff"/><path d="M1418 579h6.5" stroke="#bd03ff"/><path d="M1424 579h6.5" stroke="#cc01ff"/><path d="M1430 579h6.5" stroke="#db00ff"/><path d="M1436 579h6.5" stroke="#eb00ff"/><path d="M1442 579h6.5" stroke="#fb00ff"/><path d="M1448 579h6.5" stroke="#ff00f2"/><path d="M1454 579h6.5" stroke="#ff00e3"/><path d="M1304 585h6.5" stroke="#0023ff"/><path d="M1310 585h6.5" stroke="#0021ff"/><path d="M1316 585h6.5" stroke="#061fff"/><path d="M1322 585h6.5" stroke="#0d1eff"/><path d="M1328 585h6.5" stroke="#141cff"/><path d="M1334 585h6.5" stroke="#1d1aff"/><path d="M1340 585h6.5" stroke="#2518ff"/><path d="M1346 585h6.5" stroke="#2f16ff"/><path d="M1352 585h6.5" stroke="#3814ff"/><path d="M1358 585h6.5" stroke="#4212ff"/><path d="M1364 585h6.5" stroke="#4d10ff"/><path d="M1370 585h6.5" stroke="#580eff"/><path d="M1376 585h6.5" stroke="#630cff"/><path d="M1382 585h6.5" stroke="#6e0aff"/><path d="M1388 585h6.5" stroke="#7a08ff"/><path d="M1394 585h6.5" stroke="#8706ff"/><path d="M1400 585h6.5" stroke="#9404ff"/><path d="M1406 585h6.5" stroke="#a102ff"/><path d="M1412 585h6.5" stroke="#af01ff"/><path d="M1418 585h6.5" stroke="#bd00ff"/><path d="M1424 585h6.5" stroke="#cc00ff"/><path d="M1430 585h6.5" stroke="#db00ff"/><path d="M1436 585h6.5" stroke="#ea00ff"/><path d="M1442 585h6.5" stroke="#fa00ff"/><path d="M1298 591h6.5" stroke="#001fff"/><path d="M1304 591h6.5" stroke="#001dff"/><path d="M1310 591h6.5" stroke="#021bff"/><path d="M1316 591h6.5" stroke="#0819ff"/><path d="M1322 591h6.5" stroke="#0f18ff"/><path d="M1328 591h6.5" stroke="#1716ff"/><path d="M1334 591h6.5" stroke="#1f14ff"/><path d="M1340 591h6.5" stroke="#2812ff"/><path d="M1346 591h6.5" stroke="#3110ff"/><path d="M1352 591h6.5" stroke="#3b0eff"/><path d="M1358 591h6.5" stroke="#450cff"/><path d="M1364 591h6.5" stroke="#4f0aff"/><path d="M1370 591h6.5" stroke="#5a09ff"/><path d="M1376 591h6.5" stroke="#6507ff"/><path d="M1382 591h6.5" stroke="#7005ff"/><path d="M1388 591h6.5" stroke="#7c03ff"/><path d="M1394 591h6.5" stroke="#8801ff"/><path d="M1400 591h6.5" stroke="#9500ff"/><path d="M1406 591h6.5" stroke="#a200ff"/><path d="M1412 591h6.5" stroke="#af00ff"/><path d="M1418 591h6.5" stroke="#bd00ff"/><path d="M1424 591h6.5" stroke="#cc00ff"/><path d="M1298 597h6.5" stroke="#0019ff"/><path d="M1304 597h6.5" stroke="#0017ff"/><path d="M1310 597h6.5" stroke="#0416ff"/><path d="M1316 597h6.5" stroke="#0a14ff"/><path d="M1322 597h6.5" stroke="#1212ff"/><path d="M1328 597h6.5" stroke="#1a10ff"/><path d="M1334 597h6.5" stroke="#220eff"/><path d="M1340 597h6.5" stroke="#2a0dff"/><path d="M1346 597h6.5" stroke="#340bff"/><path d="M1352 597h6.5" stroke="#3d09ff"/><path d="M1358 597h6.5" stroke="#4707ff"/><path d="M1364 597h6.5" stroke="#5105ff"/><path d="M1370 597h6.5" stroke="#5c04ff"/><path d="M1376 597h6.5" stroke="#6602ff"/><path d="M1382 597h6.5" stroke="#7200ff"/><path d="M1388 597h6.5" stroke="#7d00ff"/><path d="M1394 597h6.5" stroke="#8900ff"/><path d="M1400 597h6.5" stroke="#9600ff"/><path d="M1406 597h6.5" stroke="#a300ff"/><path d="M1412 597h6.5" stroke="#b000ff"/><path d="M1292 603h6.5" stroke="#0016ff"/><path d="M1298 603h6.5" stroke="#0014ff"/><path d="M1304 603h6.5" stroke="#0112ff"/><path d="M1310 603h6.5" stroke="#0610ff"/><path d="M1316 603h6.5" stroke="#0d0fff"/><path d="M1322 603h6.5" stroke="#140dff"/><path d="M1328 603h6.5" stroke="#1c0bff"/><path d="M1334 603h6.5" stroke="#2409ff"/><path d="M1340 603h6.5" stroke="#2d08ff"/><path d="M1346 603h6.5" stroke="#3606ff"/><path d="M1352 603h6.5" stroke="#3f04ff"/><path d="M1358 603h6.5" stroke="#4903ff"/><path d="M1364 603h6.5" stroke="#5301ff"/><path d="M1370 603h6.5" stroke="#5d00ff"/><path d="M1376 603h6.5" stroke="#6800ff"/><path d="M1382 603h6.5" stroke="#7300ff"/><path d="M1388 603h6.5" stroke="#7f00ff"/><path d="M1394 603h6.5" stroke="#8b00ff"/><path d="M1292 609h6.5" stroke="#0011ff"/><path d="M1298 609h6.5" stroke="#000fff"/><path d="M1304 609h6.5" stroke="#020dff"/><path d="M1310 609h6.5" stroke="#090cff"/><path d="M1316 609h6.5" stroke="#0f0aff"/><path d="M1322 609h6.5" stroke="#1708ff"/><path d="M1328 609h6.5" stroke="#1e06ff"/><path d="M1334 609h6.5" stroke="#2705ff"/><path d="M1340 609h6.5" stroke="#2f03ff"/><path d="M1346 609h6.5" stroke="#3802ff"/><path d="M1352 609h6.5" stroke="#4100ff"/><path d="M1358 609h6.5" stroke="#4b00ff"/><path d="M1364 609h6.5" stroke="#5500ff"/><path d="M1370 609h6.5" stroke="#5f00ff"/><path d="M1376 609h6.5" stroke="#6a00ff"/><path d="M1382 609h6.5" stroke="#7500ff"/><path d="M1292 615h6.5" stroke="#000cff"/><path d="M1298 615h6.5" stroke="#000aff"/><path d="M1304 615h6.5" stroke="#0509ff"/><path d="M1310 615h6.5" stroke="#0b07ff"/><path d="M1316 615h6.5" stroke="#1205ff"/><path d="M1322 615h6.5" stroke="#1904ff"/><path d="M1328 615h6.5" stroke="#2102ff"/><path d="M1334 615h6.5" stroke="#2901ff"/><path d="M1340 615h6.5" stroke="#3100ff"/><path d="M1346 615h6.5" stroke="#3a00ff"/><path d="M1352 615h6.5" stroke="#4300ff"/><path d="M1358 615h6.5" stroke="#4d00ff"/><path d="M1364 615h6.5" stroke="#5700ff"/><path d="M1286 621h6.5" stroke="#0009ff"/><path d="M1292 621h6.5" stroke="#0007ff"/><path d="M1298 621h6.5" stroke="#0106ff"/><path d="M1304 621h6.5" stroke="#0704ff"/><path d="M1310 621h6.5" stroke="#0d03ff"/><path d="M1316 621h6.5" stroke="#1402ff"/><path d="M1322 621h6.5" stroke="#1b00ff"/><path d="M1328 621h6.5" stroke="#2300ff"/><path d="M1334 621h6.5" stroke="#2b00ff"/><path d="M1340 621h6.5" stroke="#3400ff"/><path d="M1346 621h6.5" stroke="#3c00ff"/><path d="M1352 621h6.5" stroke="#4500ff"/><path d="M1286 627h6.5" stroke="#0005ff"/><path d="M1292 627h6.5" stroke="#0003ff"/><path d="M1298 627h6.5" stroke="#0302ff"/><path d="M1304 627h6.5" stroke="#0901ff"/><path d="M1310 627h6.5" stroke="#0f00ff"/><path d="M1316 627h6.5" stroke="#1600ff"/><path d="M1322 627h6.5" stroke="#1e00ff"/><path d="M1328 627h6.5" stroke="#2500ff"/><path d="M1334 627h6.5" stroke="#2d00ff"/><path d="M1286 633h6.5" stroke="#0001ff"/><path d="M1292 633h6.5" stroke="#0000ff"/><path d="M1298 633h6.5" stroke="#0500ff"/><path d="M1304 633h6.5" stroke="#0b00ff"/><path d="M1310 633h6.5" stroke="#1200ff"/><path d="M1316 633h6.5" stroke="#1900ff"/><path d="M1322 633h6.5" stroke="#2000ff"/><path d="M1286 639h6.5" stroke="#0000ff"/><path d="M1292 639h6.5" stroke="#0200ff"/><path d="M1298 639h6.5" stroke="#0700ff"/><path d="M1304 639h6.5" stroke="#0d00ff"/></g></g>
<rect x="1644" y="140" width="260" height="209" fill="#363636"/>
<g clip-path="url(#cIns)"><g filter="url(#fB12)" stroke-width="12.5" fill="none"><path d="M1624 126h12.5" stroke="#659900"/><path d="M1636 126h12.5" stroke="#689900"/><path d="M1648 126h12.5" stroke="#6a9900"/><path d="M1660 126h12.5" stroke="#6d9900"/><path d="M1672 126h12.5" stroke="#6f9900"/><path d="M1684 126h12.5" stroke="#719900"/><path d="M1696 126h12.5" stroke="#749900"/><path d="M1708 126h12.5" stroke="#779900"/><path d="M1720 126h12.5" stroke="#799900"/><path d="M1732 126h12.5" stroke="#7c9900"/><path d="M1744 126h12.5" stroke="#7f9900"/><path d="M1756 126h12.5" stroke="#829900"/><path d="M1768 126h12.5" stroke="#849900"/><path d="M1780 126h12.5" stroke="#879900"/><path d="M1792 126h12.5" stroke="#899900"/><path d="M1804 126h12.5" stroke="#8c9900"/><path d="M1816 126h12.5" stroke="#8f9900"/><path d="M1828 126h12.5" stroke="#929900"/><path d="M1840 126h12.5" stroke="#959900"/><path d="M1852 126h12.5" stroke="#979900"/><path d="M1864 126h12.5" stroke="#999800"/><path d="M1876 126h12.5" stroke="#999500"/><path d="M1888 126h12.5" stroke="#999200"/><path d="M1900 126h12.5" stroke="#998f00"/><path d="M1912 126h12.5" stroke="#998d00"/><path d="M1624 138h12.5" stroke="#679900"/><path d="M1636 138h12.5" stroke="#699900"/><path d="M1648 138h12.5" stroke="#6b9900"/><path d="M1660 138h12.5" stroke="#6e9900"/><path d="M1672 138h12.5" stroke="#719900"/><path d="M1684 138h12.5" stroke="#739900"/><path d="M1696 138h12.5" stroke="#769900"/><path d="M1708 138h12.5" stroke="#799900"/><path d="M1720 138h12.5" stroke="#7b9900"/><path d="M1732 138h12.5" stroke="#7e9900"/><path d="M1744 138h12.5" stroke="#809900"/><path d="M1756 138h12.5" stroke="#839900"/><path d="M1768 138h12.5" stroke="#869900"/><path d="M1780 138h12.5" stroke="#899900"/><path d="M1792 138h12.5" stroke="#8b9900"/><path d="M1804 138h12.5" stroke="#8e9900"/><path d="M1816 138h12.5" stroke="#919900"/><path d="M1828 138h12.5" stroke="#949900"/><path d="M1840 138h12.5" stroke="#979900"/><path d="M1852 138h12.5" stroke="#999800"/><path d="M1864 138h12.5" stroke="#999500"/><path d="M1876 138h12.5" stroke="#999300"/><path d="M1888 138h12.5" stroke="#999000"/><path d="M1900 138h12.5" stroke="#998e00"/><path d="M1912 138h12.5" stroke="#998b00"/><path d="M1624 150h12.5" stroke="#689900"/><path d="M1636 150h12.5" stroke="#6b9900"/><path d="M1648 150h12.5" stroke="#6d9900"/><path d="M1660 150h12.5" stroke="#709900"/><path d="M1672 150h12.5" stroke="#739900"/><path d="M1684 150h12.5" stroke="#759900"/><path d="M1696 150h12.5" stroke="#789900"/><path d="M1708 150h12.5" stroke="#7a9900"/><path d="M1720 150h12.5" stroke="#7d9900"/><path d="M1732 150h12.5" stroke="#809900"/><path d="M1744 150h12.5" stroke="#829900"/><path d="M1756 150h12.5" stroke="#859900"/><path d="M1768 150h12.5" stroke="#889900"/><path d="M1780 150h12.5" stroke="#8b9900"/><path d="M1792 150h12.5" stroke="#8e9900"/><path d="M1804 150h12.5" stroke="#919900"/><path d="M1816 150h12.5" stroke="#939900"/><path d="M1828 150h12.5" stroke="#969900"/><path d="M1840 150h12.5" stroke="#999900"/><path d="M1852 150h12.5" stroke="#999600"/><path d="M1864 150h12.5" stroke="#999400"/><path d="M1876 150h12.5" stroke="#999100"/><path d="M1888 150h12.5" stroke="#998e00"/><path d="M1900 150h12.5" stroke="#998c00"/><path d="M1912 150h12.5" stroke="#998900"/><path d="M1624 162h12.5" stroke="#6a9901"/><path d="M1636 162h12.5" stroke="#6d9900"/><path d="M1648 162h12.5" stroke="#6f9900"/><path d="M1660 162h12.5" stroke="#719900"/><path d="M1672 162h12.5" stroke="#749900"/><path d="M1684 162h12.5" stroke="#779900"/><path d="M1696 162h12.5" stroke="#7a9900"/><path d="M1708 162h12.5" stroke="#7c9900"/><path d="M1720 162h12.5" stroke="#7f9900"/><path d="M1732 162h12.5" stroke="#829900"/><path d="M1744 162h12.5" stroke="#859900"/><path d="M1756 162h12.5" stroke="#879900"/><path d="M1768 162h12.5" stroke="#8a9900"/><path d="M1780 162h12.5" stroke="#8d9900"/><path d="M1792 162h12.5" stroke="#8f9900"/><path d="M1804 162h12.5" stroke="#929900"/><path d="M1816 162h12.5" stroke="#959900"/><path d="M1828 162h12.5" stroke="#989900"/><path d="M1840 162h12.5" stroke="#999700"/><path d="M1852 162h12.5" stroke="#999400"/><path d="M1864 162h12.5" stroke="#999100"/><path d="M1876 162h12.5" stroke="#998f00"/><path d="M1888 162h12.5" stroke="#998c00"/><path d="M1900 162h12.5" stroke="#998900"/><path d="M1912 162h12.5" stroke="#998700"/><path d="M1624 174h12.5" stroke="#6b9902"/><path d="M1636 174h12.5" stroke="#6e9901"/><path d="M1648 174h12.5" stroke="#719901"/><path d="M1660 174h12.5" stroke="#739900"/><path d="M1672 174h12.5" stroke="#769900"/><path d="M1684 174h12.5" stroke="#799900"/><path d="M1696 174h12.5" stroke="#7c9900"/><path d="M1708 174h12.5" stroke="#7e9900"/><path d="M1720 174h12.5" stroke="#819900"/><path d="M1732 174h12.5" stroke="#839900"/><path d="M1744 174h12.5" stroke="#869900"/><path d="M1756 174h12.5" stroke="#899900"/><path d="M1768 174h12.5" stroke="#8c9900"/><path d="M1780 174h12.5" stroke="#8f9900"/><path d="M1792 174h12.5" stroke="#929900"/><path d="M1804 174h12.5" stroke="#959900"/><path d="M1816 174h12.5" stroke="#989900"/><path d="M1828 174h12.5" stroke="#999800"/><path d="M1840 174h12.5" stroke="#999500"/><path d="M1852 174h12.5" stroke="#999200"/><path d="M1864 174h12.5" stroke="#998f00"/><path d="M1876 174h12.5" stroke="#998c00"/><path d="M1888 174h12.5" stroke="#998a00"/><path d="M1900 174h12.5" stroke="#998800"/><path d="M1912 174h12.5" stroke="#998500"/><path d="M1624 186h12.5" stroke="#6d9902"/><path d="M1636 186h12.5" stroke="#709902"/><path d="M1648 186h12.5" stroke="#739901"/><path d="M1660 186h12.5" stroke="#759901"/><path d="M1672 186h12.5" stroke="#789900"/><path d="M1684 186h12.5" stroke="#7a9900"/><path d="M1696 186h12.5" stroke="#7d9900"/><path d="M1708 186h12.5" stroke="#809900"/><path d="M1720 186h12.5" stroke="#839900"/><path d="M1732 186h12.5" stroke="#869900"/><path d="M1744 186h12.5" stroke="#889900"/><path d="M1756 186h12.5" stroke="#8b9900"/><path d="M1768 186h12.5" stroke="#8e9900"/><path d="M1780 186h12.5" stroke="#919900"/><path d="M1792 186h12.5" stroke="#949900"/><path d="M1804 186h12.5" stroke="#979900"/><path d="M1816 186h12.5" stroke="#999800"/><path d="M1828 186h12.5" stroke="#999500"/><path d="M1840 186h12.5" stroke="#999200"/><path d="M1852 186h12.5" stroke="#999000"/><path d="M1864 186h12.5" stroke="#998d00"/><path d="M1876 186h12.5" stroke="#998b00"/><path d="M1888 186h12.5" stroke="#998800"/><path d="M1900 186h12.5" stroke="#998600"/><path d="M1912 186h12.5" stroke="#998300"/><path d="M1624 198h12.5" stroke="#6f9904"/><path d="M1636 198h12.5" stroke="#729903"/><path d="M1648 198h12.5" stroke="#749902"/><path d="M1660 198h12.5" stroke="#779902"/><path d="M1672 198h12.5" stroke="#7a9901"/><path d="M1684 198h12.5" stroke="#7d9901"/><path d="M1696 198h12.5" stroke="#7f9900"/><path d="M1708 198h12.5" stroke="#829900"/><path d="M1720 198h12.5" stroke="#859900"/><path d="M1732 198h12.5" stroke="#889900"/><path d="M1744 198h12.5" stroke="#8b9900"/><path d="M1756 198h12.5" stroke="#8e9900"/><path d="M1768 198h12.5" stroke="#909900"/><path d="M1780 198h12.5" stroke="#939900"/><path d="M1792 198h12.5" stroke="#969900"/><path d="M1804 198h12.5" stroke="#999900"/><path d="M1816 198h12.5" stroke="#999600"/><path d="M1828 198h12.5" stroke="#999300"/><path d="M1840 198h12.5" stroke="#999100"/><path d="M1852 198h12.5" stroke="#998e00"/><path d="M1864 198h12.5" stroke="#998b00"/><path d="M1876 198h12.5" stroke="#998900"/><path d="M1888 198h12.5" stroke="#998600"/><path d="M1900 198h12.5" stroke="#998400"/><path d="M1912 198h12.5" stroke="#998200"/><path d="M1624 210h12.5" stroke="#719904"/><path d="M1636 210h12.5" stroke="#749904"/><path d="M1648 210h12.5" stroke="#769903"/><path d="M1660 210h12.5" stroke="#799902"/><path d="M1672 210h12.5" stroke="#7c9902"/><path d="M1684 210h12.5" stroke="#7f9901"/><path d="M1696 210h12.5" stroke="#819901"/><path d="M1708 210h12.5" stroke="#849900"/><path d="M1720 210h12.5" stroke="#879900"/><path d="M1732 210h12.5" stroke="#8a9900"/><path d="M1744 210h12.5" stroke="#8c9900"/><path d="M1756 210h12.5" stroke="#8f9900"/><path d="M1768 210h12.5" stroke="#929900"/><path d="M1780 210h12.5" stroke="#959900"/><path d="M1792 210h12.5" stroke="#989900"/><path d="M1804 210h12.5" stroke="#999700"/><path d="M1816 210h12.5" stroke="#999400"/><path d="M1828 210h12.5" stroke="#999100"/><path d="M1840 210h12.5" stroke="#998e00"/><path d="M1852 210h12.5" stroke="#998c00"/><path d="M1864 210h12.5" stroke="#998900"/><path d="M1876 210h12.5" stroke="#998600"/><path d="M1888 210h12.5" stroke="#998400"/><path d="M1900 210h12.5" stroke="#998200"/><path d="M1912 210h12.5" stroke="#998000"/><path d="M1624 222h12.5" stroke="#739905"/><path d="M1636 222h12.5" stroke="#769905"/><path d="M1648 222h12.5" stroke="#789904"/><path d="M1660 222h12.5" stroke="#7b9904"/><path d="M1672 222h12.5" stroke="#7d9903"/><path d="M1684 222h12.5" stroke="#809902"/><path d="M1696 222h12.5" stroke="#839902"/><path d="M1708 222h12.5" stroke="#869901"/><path d="M1720 222h12.5" stroke="#899901"/><path d="M1732 222h12.5" stroke="#8c9900"/><path d="M1744 222h12.5" stroke="#8f9900"/><path d="M1756 222h12.5" stroke="#929900"/><path d="M1768 222h12.5" stroke="#959900"/><path d="M1780 222h12.5" stroke="#989900"/><path d="M1792 222h12.5" stroke="#999700"/><path d="M1804 222h12.5" stroke="#999400"/><path d="M1816 222h12.5" stroke="#999200"/><path d="M1828 222h12.5" stroke="#998f00"/><path d="M1840 222h12.5" stroke="#998c00"/><path d="M1852 222h12.5" stroke="#998900"/><path d="M1864 222h12.5" stroke="#998700"/><path d="M1876 222h12.5" stroke="#998500"/><path d="M1888 222h12.5" stroke="#998200"/><path d="M1900 222h12.5" stroke="#998000"/><path d="M1912 222h12.5" stroke="#997d00"/><path d="M1624 234h12.5" stroke="#749907"/><path d="M1636 234h12.5" stroke="#779906"/><path d="M1648 234h12.5" stroke="#7a9905"/><path d="M1660 234h12.5" stroke="#7d9905"/><path d="M1672 234h12.5" stroke="#809904"/><path d="M1684 234h12.5" stroke="#829904"/><path d="M1696 234h12.5" stroke="#859903"/><path d="M1708 234h12.5" stroke="#889902"/><path d="M1720 234h12.5" stroke="#8b9902"/><path d="M1732 234h12.5" stroke="#8e9901"/><path d="M1744 234h12.5" stroke="#919901"/><path d="M1756 234h12.5" stroke="#949900"/><path d="M1768 234h12.5" stroke="#979900"/><path d="M1780 234h12.5" stroke="#999800"/><path d="M1792 234h12.5" stroke="#999500"/><path d="M1804 234h12.5" stroke="#999200"/><path d="M1816 234h12.5" stroke="#998f00"/><path d="M1828 234h12.5" stroke="#998d00"/><path d="M1840 234h12.5" stroke="#998a00"/><path d="M1852 234h12.5" stroke="#998800"/><path d="M1864 234h12.5" stroke="#998500"/><path d="M1876 234h12.5" stroke="#998300"/><path d="M1888 234h12.5" stroke="#998000"/><path d="M1900 234h12.5" stroke="#997e00"/><path d="M1912 234h12.5" stroke="#997c00"/><path d="M1624 246h12.5" stroke="#769907"/><path d="M1636 246h12.5" stroke="#799907"/><path d="M1648 246h12.5" stroke="#7c9907"/><path d="M1660 246h12.5" stroke="#7f9906"/><path d="M1672 246h12.5" stroke="#829905"/><path d="M1684 246h12.5" stroke="#859905"/><path d="M1696 246h12.5" stroke="#889904"/><path d="M1708 246h12.5" stroke="#8b9903"/><path d="M1720 246h12.5" stroke="#8d9902"/><path d="M1732 246h12.5" stroke="#909902"/><path d="M1744 246h12.5" stroke="#939901"/><path d="M1756 246h12.5" stroke="#969901"/><path d="M1768 246h12.5" stroke="#999900"/><path d="M1780 246h12.5" stroke="#999600"/><path d="M1792 246h12.5" stroke="#999300"/><path d="M1804 246h12.5" stroke="#999000"/><path d="M1816 246h12.5" stroke="#998d00"/><path d="M1828 246h12.5" stroke="#998b00"/><path d="M1840 246h12.5" stroke="#998800"/><path d="M1852 246h12.5" stroke="#998600"/><path d="M1864 246h12.5" stroke="#998300"/><path d="M1876 246h12.5" stroke="#998100"/><path d="M1888 246h12.5" stroke="#997f00"/><path d="M1900 246h12.5" stroke="#997c00"/><path d="M1912 246h12.5" stroke="#997a00"/><path d="M1624 258h12.5" stroke="#789908"/><path d="M1636 258h12.5" stroke="#7b9908"/><path d="M1648 258h12.5" stroke="#7e9907"/><path d="M1660 258h12.5" stroke="#819907"/><path d="M1672 258h12.5" stroke="#839906"/><path d="M1684 258h12.5" stroke="#869905"/><path d="M1696 258h12.5" stroke="#899905"/><path d="M1708 258h12.5" stroke="#8c9904"/><path d="M1720 258h12.5" stroke="#8f9904"/><path d="M1732 258h12.5" stroke="#929903"/><path d="M1744 258h12.5" stroke="#959902"/><path d="M1756 258h12.5" stroke="#989902"/><path d="M1768 258h12.5" stroke="#999701"/><path d="M1780 258h12.5" stroke="#999401"/><path d="M1792 258h12.5" stroke="#999100"/><path d="M1804 258h12.5" stroke="#998e00"/><path d="M1816 258h12.5" stroke="#998b00"/><path d="M1828 258h12.5" stroke="#998900"/><path d="M1840 258h12.5" stroke="#998600"/><path d="M1852 258h12.5" stroke="#998300"/><path d="M1864 258h12.5" stroke="#998100"/><path d="M1876 258h12.5" stroke="#997f00"/><path d="M1888 258h12.5" stroke="#997d00"/><path d="M1900 258h12.5" stroke="#997a00"/><path d="M1912 258h12.5" stroke="#997800"/><path d="M1624 270h12.5" stroke="#7a990a"/><path d="M1636 270h12.5" stroke="#7d9909"/><path d="M1648 270h12.5" stroke="#809908"/><path d="M1660 270h12.5" stroke="#839908"/><path d="M1672 270h12.5" stroke="#869907"/><path d="M1684 270h12.5" stroke="#899907"/><path d="M1696 270h12.5" stroke="#8c9906"/><path d="M1708 270h12.5" stroke="#8f9905"/><path d="M1720 270h12.5" stroke="#929905"/><path d="M1732 270h12.5" stroke="#959904"/><path d="M1744 270h12.5" stroke="#989904"/><path d="M1756 270h12.5" stroke="#999703"/><path d="M1768 270h12.5" stroke="#999402"/><path d="M1780 270h12.5" stroke="#999101"/><path d="M1792 270h12.5" stroke="#998e01"/><path d="M1804 270h12.5" stroke="#998c00"/><path d="M1816 270h12.5" stroke="#998900"/><path d="M1828 270h12.5" stroke="#998600"/><path d="M1840 270h12.5" stroke="#998400"/><path d="M1852 270h12.5" stroke="#998200"/><path d="M1864 270h12.5" stroke="#997f00"/><path d="M1876 270h12.5" stroke="#997d00"/><path d="M1888 270h12.5" stroke="#997a00"/><path d="M1900 270h12.5" stroke="#997900"/><path d="M1912 270h12.5" stroke="#997600"/><path d="M1624 282h12.5" stroke="#7c990b"/><path d="M1636 282h12.5" stroke="#7f990a"/><path d="M1648 282h12.5" stroke="#82990a"/><path d="M1660 282h12.5" stroke="#859909"/><path d="M1672 282h12.5" stroke="#889908"/><path d="M1684 282h12.5" stroke="#8b9908"/><path d="M1696 282h12.5" stroke="#8e9907"/><path d="M1708 282h12.5" stroke="#919907"/><path d="M1720 282h12.5" stroke="#949906"/><path d="M1732 282h12.5" stroke="#979905"/><path d="M1744 282h12.5" stroke="#999805"/><path d="M1756 282h12.5" stroke="#999504"/><path d="M1768 282h12.5" stroke="#999203"/><path d="M1780 282h12.5" stroke="#998f02"/><path d="M1792 282h12.5" stroke="#998c02"/><path d="M1804 282h12.5" stroke="#998901"/><path d="M1816 282h12.5" stroke="#998701"/><path d="M1828 282h12.5" stroke="#998500"/><path d="M1840 282h12.5" stroke="#998200"/><path d="M1852 282h12.5" stroke="#998000"/><path d="M1864 282h12.5" stroke="#997d00"/><path d="M1876 282h12.5" stroke="#997b00"/><path d="M1888 282h12.5" stroke="#997900"/><path d="M1900 282h12.5" stroke="#997700"/><path d="M1912 282h12.5" stroke="#997400"/><path d="M1624 294h12.5" stroke="#7e990c"/><path d="M1636 294h12.5" stroke="#81990b"/><path d="M1648 294h12.5" stroke="#84990b"/><path d="M1660 294h12.5" stroke="#87990a"/><path d="M1672 294h12.5" stroke="#8a990a"/><path d="M1684 294h12.5" stroke="#8d9909"/><path d="M1696 294h12.5" stroke="#909908"/><path d="M1708 294h12.5" stroke="#939908"/><path d="M1720 294h12.5" stroke="#969907"/><path d="M1732 294h12.5" stroke="#999806"/><path d="M1744 294h12.5" stroke="#999505"/><path d="M1756 294h12.5" stroke="#999205"/><path d="M1768 294h12.5" stroke="#998f04"/><path d="M1780 294h12.5" stroke="#998d04"/><path d="M1792 294h12.5" stroke="#998a03"/><path d="M1804 294h12.5" stroke="#998802"/><path d="M1816 294h12.5" stroke="#998502"/><path d="M1828 294h12.5" stroke="#998201"/><path d="M1840 294h12.5" stroke="#998001"/><path d="M1852 294h12.5" stroke="#997e00"/><path d="M1864 294h12.5" stroke="#997c00"/><path d="M1876 294h12.5" stroke="#997900"/><path d="M1888 294h12.5" stroke="#997700"/><path d="M1900 294h12.5" stroke="#997500"/><path d="M1912 294h12.5" stroke="#997300"/><path d="M1624 306h12.5" stroke="#80990d"/><path d="M1636 306h12.5" stroke="#83990d"/><path d="M1648 306h12.5" stroke="#86990c"/><path d="M1660 306h12.5" stroke="#89990b"/><path d="M1672 306h12.5" stroke="#8c990b"/><path d="M1684 306h12.5" stroke="#8f990a"/><path d="M1696 306h12.5" stroke="#92990a"/><path d="M1708 306h12.5" stroke="#959908"/><path d="M1720 306h12.5" stroke="#989908"/><path d="M1732 306h12.5" stroke="#999607"/><path d="M1744 306h12.5" stroke="#999307"/><path d="M1756 306h12.5" stroke="#999006"/><path d="M1768 306h12.5" stroke="#998e05"/><path d="M1780 306h12.5" stroke="#998b04"/><path d="M1792 306h12.5" stroke="#998804"/><path d="M1804 306h12.5" stroke="#998503"/><path d="M1816 306h12.5" stroke="#998302"/><path d="M1828 306h12.5" stroke="#998002"/><path d="M1840 306h12.5" stroke="#997e01"/><path d="M1852 306h12.5" stroke="#997c01"/><path d="M1864 306h12.5" stroke="#997a00"/><path d="M1876 306h12.5" stroke="#997700"/><path d="M1888 306h12.5" stroke="#997500"/><path d="M1900 306h12.5" stroke="#997300"/><path d="M1912 306h12.5" stroke="#997100"/><path d="M1624 318h12.5" stroke="#82990e"/><path d="M1636 318h12.5" stroke="#85990e"/><path d="M1648 318h12.5" stroke="#88990d"/><path d="M1660 318h12.5" stroke="#8b990d"/><path d="M1672 318h12.5" stroke="#8f990b"/><path d="M1684 318h12.5" stroke="#92990b"/><path d="M1696 318h12.5" stroke="#95990a"/><path d="M1708 318h12.5" stroke="#98990a"/><path d="M1720 318h12.5" stroke="#999709"/><path d="M1732 318h12.5" stroke="#999408"/><path d="M1744 318h12.5" stroke="#999108"/><path d="M1756 318h12.5" stroke="#998e07"/><path d="M1768 318h12.5" stroke="#998b06"/><path d="M1780 318h12.5" stroke="#998905"/><path d="M1792 318h12.5" stroke="#998605"/><path d="M1804 318h12.5" stroke="#998304"/><path d="M1816 318h12.5" stroke="#998104"/><path d="M1828 318h12.5" stroke="#997f03"/><path d="M1840 318h12.5" stroke="#997c02"/><path d="M1852 318h12.5" stroke="#997a02"/><path d="M1864 318h12.5" stroke="#997701"/><path d="M1876 318h12.5" stroke="#997601"/><path d="M1888 318h12.5" stroke="#997300"/><path d="M1900 318h12.5" stroke="#997100"/><path d="M1912 318h12.5" stroke="#997000"/><path d="M1624 330h12.5" stroke="#85990f"/><path d="M1636 330h12.5" stroke="#88990e"/><path d="M1648 330h12.5" stroke="#8b990e"/><path d="M1660 330h12.5" stroke="#8e990d"/><path d="M1672 330h12.5" stroke="#91990d"/><path d="M1684 330h12.5" stroke="#94990c"/><path d="M1696 330h12.5" stroke="#97990b"/><path d="M1708 330h12.5" stroke="#99980b"/><path d="M1720 330h12.5" stroke="#99950a"/><path d="M1732 330h12.5" stroke="#999209"/><path d="M1744 330h12.5" stroke="#998f08"/><path d="M1756 330h12.5" stroke="#998c08"/><path d="M1768 330h12.5" stroke="#998907"/><path d="M1780 330h12.5" stroke="#998606"/><path d="M1792 330h12.5" stroke="#998405"/><path d="M1804 330h12.5" stroke="#998205"/><path d="M1816 330h12.5" stroke="#997f04"/><path d="M1828 330h12.5" stroke="#997d04"/><path d="M1840 330h12.5" stroke="#997a03"/><path d="M1852 330h12.5" stroke="#997802"/><path d="M1864 330h12.5" stroke="#997602"/><path d="M1876 330h12.5" stroke="#997401"/><path d="M1888 330h12.5" stroke="#997101"/><path d="M1900 330h12.5" stroke="#997000"/><path d="M1912 330h12.5" stroke="#996e00"/><path d="M1624 342h12.5" stroke="#879910"/><path d="M1636 342h12.5" stroke="#8a9910"/><path d="M1648 342h12.5" stroke="#8d990f"/><path d="M1660 342h12.5" stroke="#90990e"/><path d="M1672 342h12.5" stroke="#93990e"/><path d="M1684 342h12.5" stroke="#97990d"/><path d="M1696 342h12.5" stroke="#99980d"/><path d="M1708 342h12.5" stroke="#99950c"/><path d="M1720 342h12.5" stroke="#99920b"/><path d="M1732 342h12.5" stroke="#998f0a"/><path d="M1744 342h12.5" stroke="#998c0a"/><path d="M1756 342h12.5" stroke="#998908"/><path d="M1768 342h12.5" stroke="#998708"/><path d="M1780 342h12.5" stroke="#998507"/><path d="M1792 342h12.5" stroke="#998207"/><path d="M1804 342h12.5" stroke="#997f06"/><path d="M1816 342h12.5" stroke="#997d05"/><path d="M1828 342h12.5" stroke="#997a05"/><path d="M1840 342h12.5" stroke="#997904"/><path d="M1852 342h12.5" stroke="#997603"/><path d="M1864 342h12.5" stroke="#997402"/><path d="M1876 342h12.5" stroke="#997202"/><path d="M1888 342h12.5" stroke="#997002"/><path d="M1900 342h12.5" stroke="#996e01"/><path d="M1912 342h12.5" stroke="#996c01"/><path d="M1624 354h12.5" stroke="#899911"/><path d="M1636 354h12.5" stroke="#8c9911"/><path d="M1648 354h12.5" stroke="#8f9911"/><path d="M1660 354h12.5" stroke="#929910"/><path d="M1672 354h12.5" stroke="#95990f"/><path d="M1684 354h12.5" stroke="#99990e"/><path d="M1696 354h12.5" stroke="#99960e"/><path d="M1708 354h12.5" stroke="#99930d"/><path d="M1720 354h12.5" stroke="#99900c"/><path d="M1732 354h12.5" stroke="#998d0b"/><path d="M1744 354h12.5" stroke="#998a0a"/><path d="M1756 354h12.5" stroke="#99880a"/><path d="M1768 354h12.5" stroke="#998509"/><path d="M1780 354h12.5" stroke="#998208"/><path d="M1792 354h12.5" stroke="#998007"/><path d="M1804 354h12.5" stroke="#997d07"/><path d="M1816 354h12.5" stroke="#997b06"/><path d="M1828 354h12.5" stroke="#997905"/><path d="M1840 354h12.5" stroke="#997605"/><path d="M1852 354h12.5" stroke="#997404"/><path d="M1864 354h12.5" stroke="#997204"/><path d="M1876 354h12.5" stroke="#997003"/><path d="M1888 354h12.5" stroke="#996e02"/><path d="M1900 354h12.5" stroke="#996c02"/><path d="M1912 354h12.5" stroke="#996a01"/><path d="M1624 366h12.5" stroke="#8b9913"/><path d="M1636 366h12.5" stroke="#8e9913"/><path d="M1648 366h12.5" stroke="#929912"/><path d="M1660 366h12.5" stroke="#959911"/><path d="M1672 366h12.5" stroke="#989911"/><path d="M1684 366h12.5" stroke="#999710"/><path d="M1696 366h12.5" stroke="#99940f"/><path d="M1708 366h12.5" stroke="#99910e"/><path d="M1720 366h12.5" stroke="#998e0d"/><path d="M1732 366h12.5" stroke="#998b0c"/><path d="M1744 366h12.5" stroke="#99880b"/><path d="M1756 366h12.5" stroke="#99850b"/><path d="M1768 366h12.5" stroke="#99830a"/><path d="M1780 366h12.5" stroke="#998009"/><path d="M1792 366h12.5" stroke="#997e08"/><path d="M1804 366h12.5" stroke="#997c08"/><path d="M1816 366h12.5" stroke="#997907"/><path d="M1828 366h12.5" stroke="#997706"/><path d="M1840 366h12.5" stroke="#997405"/><path d="M1852 366h12.5" stroke="#997305"/><path d="M1864 366h12.5" stroke="#997004"/><path d="M1876 366h12.5" stroke="#996e04"/><path d="M1888 366h12.5" stroke="#996d03"/><path d="M1900 366h12.5" stroke="#996b02"/><path d="M1912 366h12.5" stroke="#996802"/></g></g>
<g clip-path="url(#cInsTri)"><g filter="url(#fB12)" stroke-width="12.5" fill="none"><path d="M1624 126h12.5" stroke="#9fff00"/><path d="M1636 126h12.5" stroke="#a4ff00"/><path d="M1648 126h12.5" stroke="#a8ff00"/><path d="M1660 126h12.5" stroke="#adff00"/><path d="M1672 126h12.5" stroke="#b1ff00"/><path d="M1684 126h12.5" stroke="#b6ff00"/><path d="M1696 126h12.5" stroke="#baff00"/><path d="M1708 126h12.5" stroke="#bfff00"/><path d="M1720 126h12.5" stroke="#c4ff00"/><path d="M1732 126h12.5" stroke="#c9ff00"/><path d="M1744 126h12.5" stroke="#ceff00"/><path d="M1756 126h12.5" stroke="#d3ff00"/><path d="M1768 126h12.5" stroke="#d8ff00"/><path d="M1780 126h12.5" stroke="#ddff00"/><path d="M1792 126h12.5" stroke="#e2ff00"/><path d="M1804 126h12.5" stroke="#e7ff00"/><path d="M1816 126h12.5" stroke="#ecff00"/><path d="M1828 126h12.5" stroke="#f1ff00"/><path d="M1840 126h12.5" stroke="#f7ff00"/><path d="M1852 126h12.5" stroke="#fcff00"/><path d="M1864 126h12.5" stroke="#fffc00"/><path d="M1876 126h12.5" stroke="#fff700"/><path d="M1888 126h12.5" stroke="#fff200"/><path d="M1900 126h12.5" stroke="#ffed00"/><path d="M1912 126h12.5" stroke="#ffe800"/><path d="M1624 138h12.5" stroke="#a2ff00"/><path d="M1636 138h12.5" stroke="#a6ff00"/><path d="M1648 138h12.5" stroke="#abff00"/><path d="M1660 138h12.5" stroke="#b0ff00"/><path d="M1672 138h12.5" stroke="#b4ff00"/><path d="M1684 138h12.5" stroke="#b9ff00"/><path d="M1696 138h12.5" stroke="#beff00"/><path d="M1708 138h12.5" stroke="#c3ff00"/><path d="M1720 138h12.5" stroke="#c7ff00"/><path d="M1732 138h12.5" stroke="#ccff00"/><path d="M1744 138h12.5" stroke="#d1ff00"/><path d="M1756 138h12.5" stroke="#d6ff00"/><path d="M1768 138h12.5" stroke="#dbff00"/><path d="M1780 138h12.5" stroke="#e0ff00"/><path d="M1792 138h12.5" stroke="#e6ff00"/><path d="M1804 138h12.5" stroke="#ebff00"/><path d="M1816 138h12.5" stroke="#f0ff00"/><path d="M1828 138h12.5" stroke="#f5ff00"/><path d="M1840 138h12.5" stroke="#fbff00"/><path d="M1852 138h12.5" stroke="#fffe00"/><path d="M1864 138h12.5" stroke="#fff800"/><path d="M1876 138h12.5" stroke="#fff300"/><path d="M1888 138h12.5" stroke="#ffee00"/><path d="M1900 138h12.5" stroke="#ffe900"/><path d="M1912 138h12.5" stroke="#ffe500"/><path d="M1624 150h12.5" stroke="#a5ff00"/><path d="M1636 150h12.5" stroke="#a9ff00"/><path d="M1648 150h12.5" stroke="#aeff00"/><path d="M1660 150h12.5" stroke="#b3ff00"/><path d="M1672 150h12.5" stroke="#b7ff00"/><path d="M1684 150h12.5" stroke="#bcff00"/><path d="M1696 150h12.5" stroke="#c1ff00"/><path d="M1708 150h12.5" stroke="#c6ff00"/><path d="M1720 150h12.5" stroke="#cbff00"/><path d="M1732 150h12.5" stroke="#d0ff00"/><path d="M1744 150h12.5" stroke="#d5ff00"/><path d="M1756 150h12.5" stroke="#daff00"/><path d="M1768 150h12.5" stroke="#dfff00"/><path d="M1780 150h12.5" stroke="#e4ff00"/><path d="M1792 150h12.5" stroke="#e9ff00"/><path d="M1804 150h12.5" stroke="#efff00"/><path d="M1816 150h12.5" stroke="#f4ff00"/><path d="M1828 150h12.5" stroke="#f9ff00"/><path d="M1840 150h12.5" stroke="#ffff00"/><path d="M1852 150h12.5" stroke="#fffa00"/><path d="M1864 150h12.5" stroke="#fff400"/><path d="M1876 150h12.5" stroke="#ffef00"/><path d="M1888 150h12.5" stroke="#ffea00"/><path d="M1900 150h12.5" stroke="#ffe600"/><path d="M1912 150h12.5" stroke="#ffe100"/><path d="M1624 162h12.5" stroke="#a8ff00"/><path d="M1636 162h12.5" stroke="#adff00"/><path d="M1648 162h12.5" stroke="#b1ff00"/><path d="M1660 162h12.5" stroke="#b6ff00"/><path d="M1672 162h12.5" stroke="#bbff00"/><path d="M1684 162h12.5" stroke="#c0ff00"/><path d="M1696 162h12.5" stroke="#c4ff00"/><path d="M1708 162h12.5" stroke="#c9ff00"/><path d="M1720 162h12.5" stroke="#ceff00"/><path d="M1732 162h12.5" stroke="#d3ff00"/><path d="M1744 162h12.5" stroke="#d8ff00"/><path d="M1756 162h12.5" stroke="#deff00"/><path d="M1768 162h12.5" stroke="#e3ff00"/><path d="M1780 162h12.5" stroke="#e8ff00"/><path d="M1792 162h12.5" stroke="#edff00"/><path d="M1804 162h12.5" stroke="#f3ff00"/><path d="M1816 162h12.5" stroke="#f8ff00"/><path d="M1828 162h12.5" stroke="#feff00"/><path d="M1840 162h12.5" stroke="#fffb00"/><path d="M1852 162h12.5" stroke="#fff600"/><path d="M1864 162h12.5" stroke="#fff000"/><path d="M1876 162h12.5" stroke="#ffeb00"/><path d="M1888 162h12.5" stroke="#ffe700"/><path d="M1900 162h12.5" stroke="#ffe200"/><path d="M1912 162h12.5" stroke="#ffdd00"/><path d="M1624 174h12.5" stroke="#abff01"/><path d="M1636 174h12.5" stroke="#b0ff01"/><path d="M1648 174h12.5" stroke="#b4ff00"/><path d="M1660 174h12.5" stroke="#b9ff00"/><path d="M1672 174h12.5" stroke="#beff00"/><path d="M1684 174h12.5" stroke="#c3ff00"/><path d="M1696 174h12.5" stroke="#c8ff00"/><path d="M1708 174h12.5" stroke="#cdff00"/><path d="M1720 174h12.5" stroke="#d2ff00"/><path d="M1732 174h12.5" stroke="#d7ff00"/><path d="M1744 174h12.5" stroke="#dcff00"/><path d="M1756 174h12.5" stroke="#e1ff00"/><path d="M1768 174h12.5" stroke="#e7ff00"/><path d="M1780 174h12.5" stroke="#ecff00"/><path d="M1792 174h12.5" stroke="#f1ff00"/><path d="M1804 174h12.5" stroke="#f7ff00"/><path d="M1816 174h12.5" stroke="#fcff00"/><path d="M1828 174h12.5" stroke="#fffc00"/><path d="M1840 174h12.5" stroke="#fff700"/><path d="M1852 174h12.5" stroke="#fff200"/><path d="M1864 174h12.5" stroke="#ffed00"/><path d="M1876 174h12.5" stroke="#ffe800"/><path d="M1888 174h12.5" stroke="#ffe300"/><path d="M1900 174h12.5" stroke="#ffde00"/><path d="M1912 174h12.5" stroke="#ffda00"/><path d="M1624 186h12.5" stroke="#aeff02"/><path d="M1636 186h12.5" stroke="#b3ff02"/><path d="M1648 186h12.5" stroke="#b8ff01"/><path d="M1660 186h12.5" stroke="#bcff01"/><path d="M1672 186h12.5" stroke="#c1ff00"/><path d="M1684 186h12.5" stroke="#c6ff00"/><path d="M1696 186h12.5" stroke="#cbff00"/><path d="M1708 186h12.5" stroke="#d0ff00"/><path d="M1720 186h12.5" stroke="#d5ff00"/><path d="M1732 186h12.5" stroke="#dbff00"/><path d="M1744 186h12.5" stroke="#e0ff00"/><path d="M1756 186h12.5" stroke="#e5ff00"/><path d="M1768 186h12.5" stroke="#ebff00"/><path d="M1780 186h12.5" stroke="#f0ff00"/><path d="M1792 186h12.5" stroke="#f5ff00"/><path d="M1804 186h12.5" stroke="#fbff00"/><path d="M1816 186h12.5" stroke="#fffd00"/><path d="M1828 186h12.5" stroke="#fff800"/><path d="M1840 186h12.5" stroke="#fff300"/><path d="M1852 186h12.5" stroke="#ffee00"/><path d="M1864 186h12.5" stroke="#ffe900"/><path d="M1876 186h12.5" stroke="#ffe400"/><path d="M1888 186h12.5" stroke="#ffdf00"/><path d="M1900 186h12.5" stroke="#ffdb00"/><path d="M1912 186h12.5" stroke="#ffd600"/><path d="M1624 198h12.5" stroke="#b1ff03"/><path d="M1636 198h12.5" stroke="#b6ff03"/><path d="M1648 198h12.5" stroke="#bbff02"/><path d="M1660 198h12.5" stroke="#c0ff02"/><path d="M1672 198h12.5" stroke="#c5ff01"/><path d="M1684 198h12.5" stroke="#caff00"/><path d="M1696 198h12.5" stroke="#cfff00"/><path d="M1708 198h12.5" stroke="#d4ff00"/><path d="M1720 198h12.5" stroke="#d9ff00"/><path d="M1732 198h12.5" stroke="#deff00"/><path d="M1744 198h12.5" stroke="#e4ff00"/><path d="M1756 198h12.5" stroke="#e9ff00"/><path d="M1768 198h12.5" stroke="#efff00"/><path d="M1780 198h12.5" stroke="#f4ff00"/><path d="M1792 198h12.5" stroke="#faff00"/><path d="M1804 198h12.5" stroke="#ffff00"/><path d="M1816 198h12.5" stroke="#fff900"/><path d="M1828 198h12.5" stroke="#fff400"/><path d="M1840 198h12.5" stroke="#ffef00"/><path d="M1852 198h12.5" stroke="#ffea00"/><path d="M1864 198h12.5" stroke="#ffe500"/><path d="M1876 198h12.5" stroke="#ffe000"/><path d="M1888 198h12.5" stroke="#ffdc00"/><path d="M1900 198h12.5" stroke="#ffd700"/><path d="M1912 198h12.5" stroke="#ffd300"/><path d="M1624 210h12.5" stroke="#b4ff05"/><path d="M1636 210h12.5" stroke="#b9ff04"/><path d="M1648 210h12.5" stroke="#beff03"/><path d="M1660 210h12.5" stroke="#c3ff03"/><path d="M1672 210h12.5" stroke="#c8ff02"/><path d="M1684 210h12.5" stroke="#cdff01"/><path d="M1696 210h12.5" stroke="#d3ff01"/><path d="M1708 210h12.5" stroke="#d8ff00"/><path d="M1720 210h12.5" stroke="#ddff00"/><path d="M1732 210h12.5" stroke="#e2ff00"/><path d="M1744 210h12.5" stroke="#e8ff00"/><path d="M1756 210h12.5" stroke="#edff00"/><path d="M1768 210h12.5" stroke="#f3ff00"/><path d="M1780 210h12.5" stroke="#f8ff00"/><path d="M1792 210h12.5" stroke="#feff00"/><path d="M1804 210h12.5" stroke="#fffb00"/><path d="M1816 210h12.5" stroke="#fff500"/><path d="M1828 210h12.5" stroke="#fff000"/><path d="M1840 210h12.5" stroke="#ffeb00"/><path d="M1852 210h12.5" stroke="#ffe600"/><path d="M1864 210h12.5" stroke="#ffe100"/><path d="M1876 210h12.5" stroke="#ffdc00"/><path d="M1888 210h12.5" stroke="#ffd800"/><path d="M1900 210h12.5" stroke="#ffd400"/><path d="M1912 210h12.5" stroke="#ffcf00"/><path d="M1624 222h12.5" stroke="#b8ff06"/><path d="M1636 222h12.5" stroke="#bdff05"/><path d="M1648 222h12.5" stroke="#c2ff04"/><path d="M1660 222h12.5" stroke="#c7ff04"/><path d="M1672 222h12.5" stroke="#ccff03"/><path d="M1684 222h12.5" stroke="#d1ff02"/><path d="M1696 222h12.5" stroke="#d6ff02"/><path d="M1708 222h12.5" stroke="#dcff01"/><path d="M1720 222h12.5" stroke="#e1ff01"/><path d="M1732 222h12.5" stroke="#e6ff00"/><path d="M1744 222h12.5" stroke="#ecff00"/><path d="M1756 222h12.5" stroke="#f1ff00"/><path d="M1768 222h12.5" stroke="#f7ff00"/><path d="M1780 222h12.5" stroke="#fcff00"/><path d="M1792 222h12.5" stroke="#fffc00"/><path d="M1804 222h12.5" stroke="#fff600"/><path d="M1816 222h12.5" stroke="#fff100"/><path d="M1828 222h12.5" stroke="#ffec00"/><path d="M1840 222h12.5" stroke="#ffe700"/><path d="M1852 222h12.5" stroke="#ffe200"/><path d="M1864 222h12.5" stroke="#ffdd00"/><path d="M1876 222h12.5" stroke="#ffd900"/><path d="M1888 222h12.5" stroke="#ffd400"/><path d="M1900 222h12.5" stroke="#ffd000"/><path d="M1912 222h12.5" stroke="#ffcc00"/><path d="M1624 234h12.5" stroke="#bbff07"/><path d="M1636 234h12.5" stroke="#c0ff06"/><path d="M1648 234h12.5" stroke="#c5ff06"/><path d="M1660 234h12.5" stroke="#caff05"/><path d="M1672 234h12.5" stroke="#cfff04"/><path d="M1684 234h12.5" stroke="#d5ff03"/><path d="M1696 234h12.5" stroke="#daff03"/><path d="M1708 234h12.5" stroke="#dfff02"/><path d="M1720 234h12.5" stroke="#e5ff01"/><path d="M1732 234h12.5" stroke="#eaff01"/><path d="M1744 234h12.5" stroke="#f0ff00"/><path d="M1756 234h12.5" stroke="#f5ff00"/><path d="M1768 234h12.5" stroke="#fbff00"/><path d="M1780 234h12.5" stroke="#fffd00"/><path d="M1792 234h12.5" stroke="#fff800"/><path d="M1804 234h12.5" stroke="#fff200"/><path d="M1816 234h12.5" stroke="#ffed00"/><path d="M1828 234h12.5" stroke="#ffe800"/><path d="M1840 234h12.5" stroke="#ffe300"/><path d="M1852 234h12.5" stroke="#ffde00"/><path d="M1864 234h12.5" stroke="#ffda00"/><path d="M1876 234h12.5" stroke="#ffd500"/><path d="M1888 234h12.5" stroke="#ffd100"/><path d="M1900 234h12.5" stroke="#ffcd00"/><path d="M1912 234h12.5" stroke="#ffc800"/><path d="M1624 246h12.5" stroke="#bfff08"/><path d="M1636 246h12.5" stroke="#c4ff08"/><path d="M1648 246h12.5" stroke="#c9ff07"/><path d="M1660 246h12.5" stroke="#ceff06"/><path d="M1672 246h12.5" stroke="#d3ff05"/><path d="M1684 246h12.5" stroke="#d9ff05"/><path d="M1696 246h12.5" stroke="#deff04"/><path d="M1708 246h12.5" stroke="#e3ff03"/><path d="M1720 246h12.5" stroke="#e9ff03"/><path d="M1732 246h12.5" stroke="#eeff02"/><path d="M1744 246h12.5" stroke="#f4ff01"/><path d="M1756 246h12.5" stroke="#faff01"/><path d="M1768 246h12.5" stroke="#ffff00"/><path d="M1780 246h12.5" stroke="#fff900"/><path d="M1792 246h12.5" stroke="#fff300"/><path d="M1804 246h12.5" stroke="#ffee00"/><path d="M1816 246h12.5" stroke="#ffe900"/><path d="M1828 246h12.5" stroke="#ffe400"/><path d="M1840 246h12.5" stroke="#ffdf00"/><path d="M1852 246h12.5" stroke="#ffda00"/><path d="M1864 246h12.5" stroke="#ffd600"/><path d="M1876 246h12.5" stroke="#ffd200"/><path d="M1888 246h12.5" stroke="#ffcd00"/><path d="M1900 246h12.5" stroke="#ffc900"/><path d="M1912 246h12.5" stroke="#ffc500"/><path d="M1624 258h12.5" stroke="#c2ff0a"/><path d="M1636 258h12.5" stroke="#c7ff09"/><path d="M1648 258h12.5" stroke="#ccff08"/><path d="M1660 258h12.5" stroke="#d2ff07"/><path d="M1672 258h12.5" stroke="#d7ff07"/><path d="M1684 258h12.5" stroke="#dcff06"/><path d="M1696 258h12.5" stroke="#e2ff05"/><path d="M1708 258h12.5" stroke="#e7ff04"/><path d="M1720 258h12.5" stroke="#edff04"/><path d="M1732 258h12.5" stroke="#f3ff03"/><path d="M1744 258h12.5" stroke="#f8ff02"/><path d="M1756 258h12.5" stroke="#feff02"/><path d="M1768 258h12.5" stroke="#fffa01"/><path d="M1780 258h12.5" stroke="#fff500"/><path d="M1792 258h12.5" stroke="#ffef00"/><path d="M1804 258h12.5" stroke="#ffea00"/><path d="M1816 258h12.5" stroke="#ffe500"/><path d="M1828 258h12.5" stroke="#ffe000"/><path d="M1840 258h12.5" stroke="#ffdb00"/><path d="M1852 258h12.5" stroke="#ffd700"/><path d="M1864 258h12.5" stroke="#ffd200"/><path d="M1876 258h12.5" stroke="#ffce00"/><path d="M1888 258h12.5" stroke="#ffca00"/><path d="M1900 258h12.5" stroke="#ffc600"/><path d="M1912 258h12.5" stroke="#ffc200"/><path d="M1624 270h12.5" stroke="#c6ff0b"/><path d="M1636 270h12.5" stroke="#cbff0a"/><path d="M1648 270h12.5" stroke="#d0ff09"/><path d="M1660 270h12.5" stroke="#d5ff09"/><path d="M1672 270h12.5" stroke="#dbff08"/><path d="M1684 270h12.5" stroke="#e0ff07"/><path d="M1696 270h12.5" stroke="#e6ff06"/><path d="M1708 270h12.5" stroke="#ecff06"/><path d="M1720 270h12.5" stroke="#f1ff05"/><path d="M1732 270h12.5" stroke="#f7ff04"/><path d="M1744 270h12.5" stroke="#fdff03"/><path d="M1756 270h12.5" stroke="#fffb03"/><path d="M1768 270h12.5" stroke="#fff602"/><path d="M1780 270h12.5" stroke="#fff001"/><path d="M1792 270h12.5" stroke="#ffeb01"/><path d="M1804 270h12.5" stroke="#ffe600"/><path d="M1816 270h12.5" stroke="#ffe100"/><path d="M1828 270h12.5" stroke="#ffdc00"/><path d="M1840 270h12.5" stroke="#ffd800"/><path d="M1852 270h12.5" stroke="#ffd300"/><path d="M1864 270h12.5" stroke="#ffcf00"/><path d="M1876 270h12.5" stroke="#ffcb00"/><path d="M1888 270h12.5" stroke="#ffc600"/><path d="M1900 270h12.5" stroke="#ffc200"/><path d="M1912 270h12.5" stroke="#ffbf00"/><path d="M1624 282h12.5" stroke="#c9ff0c"/><path d="M1636 282h12.5" stroke="#cfff0c"/><path d="M1648 282h12.5" stroke="#d4ff0b"/><path d="M1660 282h12.5" stroke="#d9ff0a"/><path d="M1672 282h12.5" stroke="#dfff09"/><path d="M1684 282h12.5" stroke="#e4ff09"/><path d="M1696 282h12.5" stroke="#eaff08"/><path d="M1708 282h12.5" stroke="#f0ff07"/><path d="M1720 282h12.5" stroke="#f5ff06"/><path d="M1732 282h12.5" stroke="#fbff05"/><path d="M1744 282h12.5" stroke="#fffd05"/><path d="M1756 282h12.5" stroke="#fff704"/><path d="M1768 282h12.5" stroke="#fff203"/><path d="M1780 282h12.5" stroke="#ffec02"/><path d="M1792 282h12.5" stroke="#ffe702"/><path d="M1804 282h12.5" stroke="#ffe201"/><path d="M1816 282h12.5" stroke="#ffdd00"/><path d="M1828 282h12.5" stroke="#ffd800"/><path d="M1840 282h12.5" stroke="#ffd400"/><path d="M1852 282h12.5" stroke="#ffd000"/><path d="M1864 282h12.5" stroke="#ffcb00"/><path d="M1876 282h12.5" stroke="#ffc700"/><path d="M1888 282h12.5" stroke="#ffc300"/><path d="M1900 282h12.5" stroke="#ffbf00"/><path d="M1912 282h12.5" stroke="#ffbb00"/><path d="M1624 294h12.5" stroke="#cdff0e"/><path d="M1636 294h12.5" stroke="#d2ff0d"/><path d="M1648 294h12.5" stroke="#d8ff0c"/><path d="M1660 294h12.5" stroke="#ddff0c"/><path d="M1672 294h12.5" stroke="#e3ff0b"/><path d="M1684 294h12.5" stroke="#e9ff0a"/><path d="M1696 294h12.5" stroke="#eeff09"/><path d="M1708 294h12.5" stroke="#f4ff08"/><path d="M1720 294h12.5" stroke="#faff08"/><path d="M1732 294h12.5" stroke="#fffe07"/><path d="M1744 294h12.5" stroke="#fff806"/><path d="M1756 294h12.5" stroke="#fff305"/><path d="M1768 294h12.5" stroke="#ffed04"/><path d="M1780 294h12.5" stroke="#ffe803"/><path d="M1792 294h12.5" stroke="#ffe303"/><path d="M1804 294h12.5" stroke="#ffde02"/><path d="M1816 294h12.5" stroke="#ffd901"/><path d="M1828 294h12.5" stroke="#ffd501"/><path d="M1840 294h12.5" stroke="#ffd000"/><path d="M1852 294h12.5" stroke="#ffcc00"/><path d="M1864 294h12.5" stroke="#ffc800"/><path d="M1876 294h12.5" stroke="#ffc400"/><path d="M1888 294h12.5" stroke="#ffc000"/><path d="M1900 294h12.5" stroke="#ffbc00"/><path d="M1912 294h12.5" stroke="#ffb800"/><path d="M1624 306h12.5" stroke="#d1ff0f"/><path d="M1636 306h12.5" stroke="#d6ff0f"/><path d="M1648 306h12.5" stroke="#dcff0e"/><path d="M1660 306h12.5" stroke="#e1ff0d"/><path d="M1672 306h12.5" stroke="#e7ff0c"/><path d="M1684 306h12.5" stroke="#edff0b"/><path d="M1696 306h12.5" stroke="#f3ff0b"/><path d="M1708 306h12.5" stroke="#f8ff0a"/><path d="M1720 306h12.5" stroke="#feff09"/><path d="M1732 306h12.5" stroke="#fffa08"/><path d="M1744 306h12.5" stroke="#fff407"/><path d="M1756 306h12.5" stroke="#ffef06"/><path d="M1768 306h12.5" stroke="#ffe905"/><path d="M1780 306h12.5" stroke="#ffe405"/><path d="M1792 306h12.5" stroke="#ffdf04"/><path d="M1804 306h12.5" stroke="#ffda03"/><path d="M1816 306h12.5" stroke="#ffd602"/><path d="M1828 306h12.5" stroke="#ffd102"/><path d="M1840 306h12.5" stroke="#ffcd01"/><path d="M1852 306h12.5" stroke="#ffc801"/><path d="M1864 306h12.5" stroke="#ffc400"/><path d="M1876 306h12.5" stroke="#ffc000"/><path d="M1888 306h12.5" stroke="#ffbc00"/><path d="M1900 306h12.5" stroke="#ffb900"/><path d="M1912 306h12.5" stroke="#ffb500"/><path d="M1624 318h12.5" stroke="#d5ff11"/><path d="M1636 318h12.5" stroke="#daff10"/><path d="M1648 318h12.5" stroke="#e0ff0f"/><path d="M1660 318h12.5" stroke="#e6ff0f"/><path d="M1672 318h12.5" stroke="#ebff0e"/><path d="M1684 318h12.5" stroke="#f1ff0d"/><path d="M1696 318h12.5" stroke="#f7ff0c"/><path d="M1708 318h12.5" stroke="#fdff0b"/><path d="M1720 318h12.5" stroke="#fffb0a"/><path d="M1732 318h12.5" stroke="#fff509"/><path d="M1744 318h12.5" stroke="#fff008"/><path d="M1756 318h12.5" stroke="#ffea07"/><path d="M1768 318h12.5" stroke="#ffe506"/><path d="M1780 318h12.5" stroke="#ffe006"/><path d="M1792 318h12.5" stroke="#ffdb05"/><path d="M1804 318h12.5" stroke="#ffd604"/><path d="M1816 318h12.5" stroke="#ffd203"/><path d="M1828 318h12.5" stroke="#ffcd03"/><path d="M1840 318h12.5" stroke="#ffc902"/><path d="M1852 318h12.5" stroke="#ffc501"/><path d="M1864 318h12.5" stroke="#ffc101"/><path d="M1876 318h12.5" stroke="#ffbd00"/><path d="M1888 318h12.5" stroke="#ffb900"/><path d="M1900 318h12.5" stroke="#ffb500"/><path d="M1912 318h12.5" stroke="#ffb200"/><path d="M1624 330h12.5" stroke="#d9ff13"/><path d="M1636 330h12.5" stroke="#deff12"/><path d="M1648 330h12.5" stroke="#e4ff11"/><path d="M1660 330h12.5" stroke="#eaff10"/><path d="M1672 330h12.5" stroke="#f0ff0f"/><path d="M1684 330h12.5" stroke="#f6ff0e"/><path d="M1696 330h12.5" stroke="#fbff0e"/><path d="M1708 330h12.5" stroke="#fffc0d"/><path d="M1720 330h12.5" stroke="#fff70c"/><path d="M1732 330h12.5" stroke="#fff10b"/><path d="M1744 330h12.5" stroke="#ffeb0a"/><path d="M1756 330h12.5" stroke="#ffe609"/><path d="M1768 330h12.5" stroke="#ffe108"/><path d="M1780 330h12.5" stroke="#ffdc07"/><path d="M1792 330h12.5" stroke="#ffd706"/><path d="M1804 330h12.5" stroke="#ffd305"/><path d="M1816 330h12.5" stroke="#ffce04"/><path d="M1828 330h12.5" stroke="#ffca04"/><path d="M1840 330h12.5" stroke="#ffc603"/><path d="M1852 330h12.5" stroke="#ffc202"/><path d="M1864 330h12.5" stroke="#ffbe02"/><path d="M1876 330h12.5" stroke="#ffba01"/><path d="M1888 330h12.5" stroke="#ffb601"/><path d="M1900 330h12.5" stroke="#ffb200"/><path d="M1912 330h12.5" stroke="#ffaf00"/><path d="M1624 342h12.5" stroke="#ddff14"/><path d="M1636 342h12.5" stroke="#e2ff13"/><path d="M1648 342h12.5" stroke="#e8ff13"/><path d="M1660 342h12.5" stroke="#eeff12"/><path d="M1672 342h12.5" stroke="#f4ff11"/><path d="M1684 342h12.5" stroke="#faff10"/><path d="M1696 342h12.5" stroke="#fffe0f"/><path d="M1708 342h12.5" stroke="#fff80e"/><path d="M1720 342h12.5" stroke="#fff20d"/><path d="M1732 342h12.5" stroke="#ffed0c"/><path d="M1744 342h12.5" stroke="#ffe70b"/><path d="M1756 342h12.5" stroke="#ffe20a"/><path d="M1768 342h12.5" stroke="#ffdd09"/><path d="M1780 342h12.5" stroke="#ffd808"/><path d="M1792 342h12.5" stroke="#ffd407"/><path d="M1804 342h12.5" stroke="#ffcf06"/><path d="M1816 342h12.5" stroke="#ffcb05"/><path d="M1828 342h12.5" stroke="#ffc605"/><path d="M1840 342h12.5" stroke="#ffc204"/><path d="M1852 342h12.5" stroke="#ffbe03"/><path d="M1864 342h12.5" stroke="#ffba03"/><path d="M1876 342h12.5" stroke="#ffb602"/><path d="M1888 342h12.5" stroke="#ffb301"/><path d="M1900 342h12.5" stroke="#ffaf01"/><path d="M1912 342h12.5" stroke="#ffac00"/><path d="M1624 354h12.5" stroke="#e1ff16"/><path d="M1636 354h12.5" stroke="#e7ff15"/><path d="M1648 354h12.5" stroke="#edff14"/><path d="M1660 354h12.5" stroke="#f3ff13"/><path d="M1672 354h12.5" stroke="#f9ff13"/><path d="M1684 354h12.5" stroke="#ffff12"/><path d="M1696 354h12.5" stroke="#fff911"/><path d="M1708 354h12.5" stroke="#fff30f"/><path d="M1720 354h12.5" stroke="#ffee0e"/><path d="M1732 354h12.5" stroke="#ffe80d"/><path d="M1744 354h12.5" stroke="#ffe30c"/><path d="M1756 354h12.5" stroke="#ffde0b"/><path d="M1768 354h12.5" stroke="#ffd90a"/><path d="M1780 354h12.5" stroke="#ffd409"/><path d="M1792 354h12.5" stroke="#ffd008"/><path d="M1804 354h12.5" stroke="#ffcb07"/><path d="M1816 354h12.5" stroke="#ffc707"/><path d="M1828 354h12.5" stroke="#ffc306"/><path d="M1840 354h12.5" stroke="#ffbf05"/><path d="M1852 354h12.5" stroke="#ffbb04"/><path d="M1864 354h12.5" stroke="#ffb704"/><path d="M1876 354h12.5" stroke="#ffb303"/><path d="M1888 354h12.5" stroke="#ffb002"/><path d="M1900 354h12.5" stroke="#ffac02"/><path d="M1912 354h12.5" stroke="#ffa901"/><path d="M1624 366h12.5" stroke="#e5ff18"/><path d="M1636 366h12.5" stroke="#ebff17"/><path d="M1648 366h12.5" stroke="#f1ff16"/><path d="M1660 366h12.5" stroke="#f7ff15"/><path d="M1672 366h12.5" stroke="#fdff14"/><path d="M1684 366h12.5" stroke="#fffb13"/><path d="M1696 366h12.5" stroke="#fff512"/><path d="M1708 366h12.5" stroke="#ffef11"/><path d="M1720 366h12.5" stroke="#ffea0f"/><path d="M1732 366h12.5" stroke="#ffe40e"/><path d="M1744 366h12.5" stroke="#ffdf0d"/><path d="M1756 366h12.5" stroke="#ffda0c"/><path d="M1768 366h12.5" stroke="#ffd50b"/><path d="M1780 366h12.5" stroke="#ffd10a"/><path d="M1792 366h12.5" stroke="#ffcc09"/><path d="M1804 366h12.5" stroke="#ffc808"/><path d="M1816 366h12.5" stroke="#ffc308"/><path d="M1828 366h12.5" stroke="#ffbf07"/><path d="M1840 366h12.5" stroke="#ffbb06"/><path d="M1852 366h12.5" stroke="#ffb705"/><path d="M1864 366h12.5" stroke="#ffb405"/><path d="M1876 366h12.5" stroke="#ffb004"/><path d="M1888 366h12.5" stroke="#ffac03"/><path d="M1900 366h12.5" stroke="#ffa903"/><path d="M1912 366h12.5" stroke="#ffa602"/></g></g>
<rect x="1648" y="144" width="252" height="201" fill="none" stroke="#9c9c9c" stroke-width="1.6"/>
<rect x="1765.4" y="236.6" width="14.6" height="14.6" fill="none" stroke="#fff" stroke-width="1.8"/>
<circle cx="1778.6" cy="230.6" r="4.4" fill="#bcbc14" stroke="#000" stroke-width="1.4"/>
<path d="M1161.5 136.5H1906.5V672.4" fill="none" stroke="#8c8c8c" stroke-width="1.5"/>
<path d="M1161.5 136.5V672.4H1907.2" fill="none" stroke="#a8a8a8" stroke-width="2"/>
<line x1="1154.5" y1="672.3" x2="1161.5" y2="672.3" stroke="#cfcfcf" stroke-width="1.3"/>
<text x="1154.0" y="677.7" font-size="15" fill="#d8d8d8" text-anchor="end" textLength="9.3" lengthAdjust="spacingAndGlyphs">0</text>
<line x1="1161.4" y1="672.4" x2="1161.4" y2="678.9" stroke="#cfcfcf" stroke-width="1.3"/>
<text x="1161.4" y="695.3" font-size="15" fill="#d8d8d8" text-anchor="middle" textLength="9.3" lengthAdjust="spacingAndGlyphs">0</text>
<line x1="1154.5" y1="608.7" x2="1161.5" y2="608.7" stroke="#cfcfcf" stroke-width="1.3"/>
<text x="1154.0" y="614.1" font-size="15" fill="#d8d8d8" text-anchor="end" textLength="23.5" lengthAdjust="spacingAndGlyphs">0,1</text>
<line x1="1250.1" y1="672.4" x2="1250.1" y2="678.9" stroke="#cfcfcf" stroke-width="1.3"/>
<text x="1250.1" y="695.3" font-size="15" fill="#d8d8d8" text-anchor="middle" textLength="23.5" lengthAdjust="spacingAndGlyphs">0,1</text>
<line x1="1154.5" y1="545.1" x2="1161.5" y2="545.1" stroke="#cfcfcf" stroke-width="1.3"/>
<text x="1154.0" y="550.5" font-size="15" fill="#d8d8d8" text-anchor="end" textLength="23.5" lengthAdjust="spacingAndGlyphs">0,2</text>
<line x1="1338.7" y1="672.4" x2="1338.7" y2="678.9" stroke="#cfcfcf" stroke-width="1.3"/>
<text x="1338.7" y="695.3" font-size="15" fill="#d8d8d8" text-anchor="middle" textLength="23.5" lengthAdjust="spacingAndGlyphs">0,2</text>
<line x1="1154.5" y1="481.5" x2="1161.5" y2="481.5" stroke="#cfcfcf" stroke-width="1.3"/>
<text x="1154.0" y="486.9" font-size="15" fill="#d8d8d8" text-anchor="end" textLength="23.5" lengthAdjust="spacingAndGlyphs">0,3</text>
<line x1="1427.4" y1="672.4" x2="1427.4" y2="678.9" stroke="#cfcfcf" stroke-width="1.3"/>
<text x="1427.4" y="695.3" font-size="15" fill="#d8d8d8" text-anchor="middle" textLength="23.5" lengthAdjust="spacingAndGlyphs">0,3</text>
<line x1="1154.5" y1="417.9" x2="1161.5" y2="417.9" stroke="#cfcfcf" stroke-width="1.3"/>
<text x="1154.0" y="423.3" font-size="15" fill="#d8d8d8" text-anchor="end" textLength="23.5" lengthAdjust="spacingAndGlyphs">0,4</text>
<line x1="1516.0" y1="672.4" x2="1516.0" y2="678.9" stroke="#cfcfcf" stroke-width="1.3"/>
<text x="1516.0" y="695.3" font-size="15" fill="#d8d8d8" text-anchor="middle" textLength="23.5" lengthAdjust="spacingAndGlyphs">0,4</text>
<line x1="1154.5" y1="354.2" x2="1161.5" y2="354.2" stroke="#cfcfcf" stroke-width="1.3"/>
<text x="1154.0" y="359.6" font-size="15" fill="#d8d8d8" text-anchor="end" textLength="23.5" lengthAdjust="spacingAndGlyphs">0,5</text>
<line x1="1604.7" y1="672.4" x2="1604.7" y2="678.9" stroke="#cfcfcf" stroke-width="1.3"/>
<text x="1604.7" y="695.3" font-size="15" fill="#d8d8d8" text-anchor="middle" textLength="23.5" lengthAdjust="spacingAndGlyphs">0,5</text>
<line x1="1154.5" y1="290.6" x2="1161.5" y2="290.6" stroke="#cfcfcf" stroke-width="1.3"/>
<text x="1154.0" y="296.0" font-size="15" fill="#d8d8d8" text-anchor="end" textLength="23.5" lengthAdjust="spacingAndGlyphs">0,6</text>
<line x1="1693.3" y1="672.4" x2="1693.3" y2="678.9" stroke="#cfcfcf" stroke-width="1.3"/>
<text x="1693.3" y="695.3" font-size="15" fill="#d8d8d8" text-anchor="middle" textLength="23.5" lengthAdjust="spacingAndGlyphs">0,6</text>
<line x1="1154.5" y1="227.0" x2="1161.5" y2="227.0" stroke="#cfcfcf" stroke-width="1.3"/>
<text x="1154.0" y="232.4" font-size="15" fill="#d8d8d8" text-anchor="end" textLength="23.5" lengthAdjust="spacingAndGlyphs">0,7</text>
<line x1="1782.0" y1="672.4" x2="1782.0" y2="678.9" stroke="#cfcfcf" stroke-width="1.3"/>
<text x="1782.0" y="695.3" font-size="15" fill="#d8d8d8" text-anchor="middle" textLength="23.5" lengthAdjust="spacingAndGlyphs">0,7</text>
<line x1="1154.5" y1="163.4" x2="1161.5" y2="163.4" stroke="#cfcfcf" stroke-width="1.3"/>
<text x="1154.0" y="168.8" font-size="15" fill="#d8d8d8" text-anchor="end" textLength="23.5" lengthAdjust="spacingAndGlyphs">0,8</text>
<line x1="1870.6" y1="672.4" x2="1870.6" y2="678.9" stroke="#cfcfcf" stroke-width="1.3"/>
<text x="1870.6" y="695.3" font-size="15" fill="#d8d8d8" text-anchor="middle" textLength="23.5" lengthAdjust="spacingAndGlyphs">0,8</text>
<g fill="none" stroke="#fff" stroke-width="1.9" opacity=".88"><rect x="1488.0" y="453.3" width="15" height="15"/><rect x="1547.9" y="453.3" width="15" height="15"/><rect x="1600.9" y="453.3" width="15" height="15"/><rect x="1656.9" y="453.3" width="15" height="15"/><rect x="1721.5" y="453.3" width="15" height="15"/><rect x="1429.0" y="419.5" width="15" height="15"/><rect x="1427.1" y="385.2" width="15" height="15"/><rect x="1424.0" y="352.9" width="15" height="15"/><rect x="1422.4" y="318.4" width="15" height="15"/><rect x="1419.0" y="281.3" width="15" height="15"/><rect x="1401.8" y="489.1" width="15" height="15"/><rect x="1373.9" y="523.5" width="15" height="15"/><rect x="1345.9" y="555.8" width="15" height="15"/><rect x="1317.4" y="588.5" width="15" height="15"/><rect x="1286.1" y="625.1" width="15" height="15"/><rect x="1415.9" y="454.7" width="15" height="15"/><rect x="1400.1" y="454.7" width="15" height="15"/><rect x="1384.7" y="454.7" width="15" height="15"/><rect x="1368.8" y="454.7" width="15" height="15"/><rect x="1352.4" y="454.8" width="15" height="15"/><rect x="1433.5" y="477.5" width="15" height="15"/><rect x="1434.9" y="500.7" width="15" height="15"/><rect x="1435.1" y="520.5" width="15" height="15"/><rect x="1436.4" y="542.5" width="15" height="15"/><rect x="1437.9" y="566.5" width="15" height="15"/><rect x="1451.2" y="431.5" width="15" height="15"/><rect x="1469.5" y="407.3" width="15" height="15"/><rect x="1488.0" y="386.5" width="15" height="15"/><rect x="1505.5" y="366.1" width="15" height="15"/><rect x="1525.9" y="342.5" width="15" height="15"/></g>
<rect x="1431.8" y="454.8" width="15" height="15" fill="none" stroke="#000" stroke-width="1.7"/>
<g stroke="#000" stroke-width="1.25"><circle cx="1495.5" cy="460.8" r="4.4" fill="#c3aaaa"/><circle cx="1555.4" cy="459.6" r="4.4" fill="#c38f8f"/><circle cx="1610.4" cy="459.6" r="4.4" fill="#c37070"/><circle cx="1667.4" cy="458.1" r="4.4" fill="#c34a4a"/><circle cx="1722.6" cy="457.9" r="4.4" fill="#c30000"/><circle cx="1436.5" cy="427.0" r="4.4" fill="#aac3aa"/><circle cx="1434.6" cy="392.7" r="4.4" fill="#8fc38f"/><circle cx="1433.5" cy="357.5" r="4.4" fill="#70c370"/><circle cx="1429.5" cy="322.0" r="4.4" fill="#4ac34a"/><circle cx="1426.1" cy="286.2" r="4.4" fill="#00c300"/><circle cx="1409.3" cy="496.2" r="4.4" fill="#aaaac3"/><circle cx="1381.4" cy="529.0" r="4.4" fill="#8f8fc3"/><circle cx="1353.4" cy="563.3" r="4.4" fill="#7070c3"/><circle cx="1325.5" cy="599.0" r="4.4" fill="#4a4ac3"/><circle cx="1295.6" cy="634.6" r="4.4" fill="#0000c3"/><circle cx="1423.4" cy="461.0" r="4.4" fill="#aac3c3"/><circle cx="1408.4" cy="461.2" r="4.4" fill="#8fc3c3"/><circle cx="1392.5" cy="462.6" r="4.4" fill="#70c3c3"/><circle cx="1376.3" cy="462.6" r="4.4" fill="#4ac3c3"/><circle cx="1361.3" cy="462.6" r="4.4" fill="#00c3c3"/><circle cx="1440.3" cy="484.8" r="4.4" fill="#c3aac3"/><circle cx="1442.4" cy="505.7" r="4.4" fill="#c38fc3"/><circle cx="1444.5" cy="525.8" r="4.4" fill="#c370c3"/><circle cx="1445.4" cy="549.8" r="4.4" fill="#c34ac3"/><circle cx="1447.4" cy="572.0" r="4.4" fill="#c300c3"/><circle cx="1459.4" cy="437.4" r="4.4" fill="#c3c3aa"/><circle cx="1476.3" cy="414.8" r="4.4" fill="#c3c38f"/><circle cx="1495.5" cy="392.7" r="4.4" fill="#c3c370"/><circle cx="1514.3" cy="371.0" r="4.4" fill="#c3c34a"/><circle cx="1534.5" cy="347.0" r="4.4" fill="#c3c300"/><circle cx="1439.3" cy="461.2" r="4.3" fill="#fff"/></g>
</g>
<g id="sec_bottom">
<text x="16.8" y="776" font-size="29" fill="#f2f2f2" textLength="251.5" lengthAdjust="spacingAndGlyphs">Current Reading</text>
<text x="16.8" y="821.8" font-size="24" fill="#f2f2f2" textLength="117" lengthAdjust="spacingAndGlyphs">x: 0,4203</text>
<text x="16.8" y="866.3" font-size="24" fill="#f2f2f2" textLength="118" lengthAdjust="spacingAndGlyphs">y: 0,5085</text>
<text x="16.8" y="910.8" font-size="24" fill="#f2f2f2" textLength="111" lengthAdjust="spacingAndGlyphs">fL: 38,79</text>
<text x="16.8" y="955.3" font-size="24" fill="#f2f2f2" textLength="183" lengthAdjust="spacingAndGlyphs">cd/m²: 132,89</text>
<text x="537.5" y="747" font-size="15" fill="#d4d4d4" text-anchor="middle" textLength="96" lengthAdjust="spacingAndGlyphs">RGB Balance</text>
<rect x="406.7" y="753.8" width="291.8" height="196.0" fill="#262626"/>
<line x1="406.7" y1="802.8" x2="698.5" y2="802.8" stroke="#8a8a8a" stroke-width="1.3"/>
<line x1="406.7" y1="851.8" x2="698.5" y2="851.8" stroke="#8a8a8a" stroke-width="1.3"/>
<line x1="406.7" y1="900.8" x2="698.5" y2="900.8" stroke="#8a8a8a" stroke-width="1.3"/>
<rect x="406.7" y="753.8" width="291.8" height="196.0" fill="none" stroke="#8a8a8a" stroke-width="1.8"/>
<line x1="399.7" y1="753.8" x2="406.7" y2="753.8" stroke="#cfcfcf" stroke-width="1.3"/>
<text x="400.5" y="759.4" font-size="15.5" fill="#d8d8d8" text-anchor="end" textLength="19" lengthAdjust="spacingAndGlyphs">20</text>
<line x1="399.7" y1="802.8" x2="406.7" y2="802.8" stroke="#cfcfcf" stroke-width="1.3"/>
<text x="400.5" y="808.4" font-size="15.5" fill="#d8d8d8" text-anchor="end" textLength="19" lengthAdjust="spacingAndGlyphs">10</text>
<line x1="399.7" y1="851.8" x2="406.7" y2="851.8" stroke="#cfcfcf" stroke-width="1.3"/>
<text x="400.5" y="857.4" font-size="15.5" fill="#d8d8d8" text-anchor="end" textLength="9.3" lengthAdjust="spacingAndGlyphs">0</text>
<line x1="399.7" y1="900.8" x2="406.7" y2="900.8" stroke="#cfcfcf" stroke-width="1.3"/>
<text x="400.5" y="906.4" font-size="15.5" fill="#d8d8d8" text-anchor="end" textLength="25" lengthAdjust="spacingAndGlyphs">-10</text>
<line x1="399.7" y1="949.8" x2="406.7" y2="949.8" stroke="#cfcfcf" stroke-width="1.3"/>
<text x="400.5" y="955.4" font-size="15.5" fill="#d8d8d8" text-anchor="end" textLength="25" lengthAdjust="spacingAndGlyphs">-20</text>
<line x1="406.7" y1="949.8" x2="406.7" y2="955.8" stroke="#cfcfcf" stroke-width="1.3"/>
<line x1="698.5" y1="949.8" x2="698.5" y2="955.8" stroke="#cfcfcf" stroke-width="1.3"/>
<text x="552.8" y="966.5" font-size="15.5" fill="#d8d8d8" text-anchor="middle" textLength="41" lengthAdjust="spacingAndGlyphs">100%</text>
<rect x="436.3" y="847.6" width="78.2" height="4.799999999999931" fill="#000"/>
<rect x="437.3" y="848.6" width="76.2" height="2.4" fill="url(#gRd)"/>
<rect x="514" y="843.2" width="78.6" height="9.199999999999909" fill="#000"/>
<rect x="515" y="844.2" width="76.6" height="7" fill="url(#gGrn)"/>
<rect x="593" y="851.1999999999999" width="78.6" height="66.6" fill="#000"/>
<rect x="594" y="852.0" width="76.6" height="64.6" fill="url(#gBlue)"/>
<rect x="722.6" y="728.5" width="830.4" height="32.5" fill="url(#gHdr)"/>
<rect x="722.6" y="728.5" width="23.199999999999932" height="32.5" fill="#000"/>
<text x="936.8" y="750.6" font-size="19.5" fill="#f0f0f0" textLength="46" lengthAdjust="spacingAndGlyphs" stroke="#f0f0f0" stroke-width=".3">20%</text>
<text x="1061.5" y="750.6" font-size="19.5" fill="#f0f0f0" textLength="46" lengthAdjust="spacingAndGlyphs" stroke="#f0f0f0" stroke-width=".3">40%</text>
<text x="1186.2" y="750.6" font-size="19.5" fill="#f0f0f0" textLength="46" lengthAdjust="spacingAndGlyphs" stroke="#f0f0f0" stroke-width=".3">60%</text>
<text x="1310.9" y="750.6" font-size="19.5" fill="#f0f0f0" textLength="46" lengthAdjust="spacingAndGlyphs" stroke="#f0f0f0" stroke-width=".3">80%</text>
<text x="1435.6" y="750.6" font-size="19.5" fill="#f0f0f0" textLength="60" lengthAdjust="spacingAndGlyphs" stroke="#f0f0f0" stroke-width=".3">100%</text>
<rect x="722.6" y="761.00" width="830.4" height="31.10" fill="#444"/>
<rect x="722.6" y="761.00" width="23.199999999999932" height="31.10" fill="url(#gRowL)"/>
<text x="753.3" y="784.2" font-size="19.3" fill="#f2f2f2" textLength="90" lengthAdjust="spacingAndGlyphs" stroke="#f2f2f2" stroke-width=".3">x: CIE31</text>
<text x="936.8" y="784.2" font-size="19.3" fill="#f2f2f2" textLength="78.5" lengthAdjust="spacingAndGlyphs" stroke="#f2f2f2" stroke-width=".3">0,3354</text>
<text x="1061.5" y="784.2" font-size="19.3" fill="#f2f2f2" textLength="78.5" lengthAdjust="spacingAndGlyphs" stroke="#f2f2f2" stroke-width=".3">0,3565</text>
<text x="1186.2" y="784.2" font-size="19.3" fill="#f2f2f2" textLength="78.5" lengthAdjust="spacingAndGlyphs" stroke="#f2f2f2" stroke-width=".3">0,3775</text>
<text x="1310.9" y="784.2" font-size="19.3" fill="#f2f2f2" textLength="78.5" lengthAdjust="spacingAndGlyphs" stroke="#f2f2f2" stroke-width=".3">0,3983</text>
<text x="1435.6" y="784.2" font-size="19.3" fill="#f2f2f2" textLength="78.5" lengthAdjust="spacingAndGlyphs" stroke="#f2f2f2" stroke-width=".3">0,4203</text>
<rect x="722.6" y="792.05" width="830.4" height="31.10" fill="#878787"/>
<rect x="722.6" y="792.05" width="23.199999999999932" height="31.10" fill="url(#gRowL)"/>
<text x="753.3" y="815.2" font-size="19.3" fill="#ededed" textLength="90" lengthAdjust="spacingAndGlyphs" stroke="#ededed" stroke-width=".3">y: CIE31</text>
<text x="936.8" y="815.2" font-size="19.3" fill="#ededed" textLength="78.5" lengthAdjust="spacingAndGlyphs" stroke="#ededed" stroke-width=".3">0,3668</text>
<text x="1061.5" y="815.2" font-size="19.3" fill="#ededed" textLength="78.5" lengthAdjust="spacingAndGlyphs" stroke="#ededed" stroke-width=".3">0,4019</text>
<text x="1186.2" y="815.2" font-size="19.3" fill="#ededed" textLength="78.5" lengthAdjust="spacingAndGlyphs" stroke="#ededed" stroke-width=".3">0,4370</text>
<text x="1310.9" y="815.2" font-size="19.3" fill="#ededed" textLength="78.5" lengthAdjust="spacingAndGlyphs" stroke="#ededed" stroke-width=".3">0,4718</text>
<text x="1435.6" y="815.2" font-size="19.3" fill="#ededed" textLength="78.5" lengthAdjust="spacingAndGlyphs" stroke="#ededed" stroke-width=".3">0,5085</text>
<rect x="722.6" y="823.10" width="830.4" height="31.10" fill="#444"/>
<rect x="722.6" y="823.10" width="23.199999999999932" height="31.10" fill="url(#gRowL)"/>
<text x="753.3" y="846.3" font-size="19.3" fill="#f2f2f2" textLength="14" lengthAdjust="spacingAndGlyphs" stroke="#f2f2f2" stroke-width=".3">Y</text>
<text x="936.8" y="846.3" font-size="19.3" fill="#f2f2f2" textLength="107.5" lengthAdjust="spacingAndGlyphs" stroke="#f2f2f2" stroke-width=".3">140,7355</text>
<text x="1061.5" y="846.3" font-size="19.3" fill="#f2f2f2" textLength="107.5" lengthAdjust="spacingAndGlyphs" stroke="#f2f2f2" stroke-width=".3">138,3976</text>
<text x="1186.2" y="846.3" font-size="19.3" fill="#f2f2f2" textLength="107.5" lengthAdjust="spacingAndGlyphs" stroke="#f2f2f2" stroke-width=".3">136,4723</text>
<text x="1310.9" y="846.3" font-size="19.3" fill="#f2f2f2" textLength="107.5" lengthAdjust="spacingAndGlyphs" stroke="#f2f2f2" stroke-width=".3">134,9613</text>
<text x="1435.6" y="846.3" font-size="19.3" fill="#f2f2f2" textLength="107.5" lengthAdjust="spacingAndGlyphs" stroke="#f2f2f2" stroke-width=".3">132,8902</text>
<rect x="722.6" y="854.15" width="830.4" height="31.10" fill="#878787"/>
<rect x="722.6" y="854.15" width="23.199999999999932" height="31.10" fill="url(#gRowL)"/>
<text x="753.3" y="877.4" font-size="19.3" fill="#ededed" textLength="164" lengthAdjust="spacingAndGlyphs" stroke="#ededed" stroke-width=".3">Target x:CIE31</text>
<text x="936.8" y="877.4" font-size="19.3" fill="#ededed" textLength="78.5" lengthAdjust="spacingAndGlyphs" stroke="#ededed" stroke-width=".3">0,3344</text>
<text x="1061.5" y="877.4" font-size="19.3" fill="#ededed" textLength="78.5" lengthAdjust="spacingAndGlyphs" stroke="#ededed" stroke-width=".3">0,3564</text>
<text x="1186.2" y="877.4" font-size="19.3" fill="#ededed" textLength="78.5" lengthAdjust="spacingAndGlyphs" stroke="#ededed" stroke-width=".3">0,3773</text>
<text x="1310.9" y="877.4" font-size="19.3" fill="#ededed" textLength="78.5" lengthAdjust="spacingAndGlyphs" stroke="#ededed" stroke-width=".3">0,3969</text>
<text x="1435.6" y="877.4" font-size="19.3" fill="#ededed" textLength="78.5" lengthAdjust="spacingAndGlyphs" stroke="#ededed" stroke-width=".3">0,4193</text>
<rect x="722.6" y="885.20" width="830.4" height="31.10" fill="#444"/>
<rect x="722.6" y="885.20" width="23.199999999999932" height="31.10" fill="url(#gRowL)"/>
<text x="753.3" y="908.4" font-size="19.3" fill="#f2f2f2" textLength="164" lengthAdjust="spacingAndGlyphs" stroke="#f2f2f2" stroke-width=".3">Target y:CIE31</text>
<text x="936.8" y="908.4" font-size="19.3" fill="#f2f2f2" textLength="78.5" lengthAdjust="spacingAndGlyphs" stroke="#f2f2f2" stroke-width=".3">0,3648</text>
<text x="1061.5" y="908.4" font-size="19.3" fill="#f2f2f2" textLength="78.5" lengthAdjust="spacingAndGlyphs" stroke="#f2f2f2" stroke-width=".3">0,4013</text>
<text x="1186.2" y="908.4" font-size="19.3" fill="#f2f2f2" textLength="78.5" lengthAdjust="spacingAndGlyphs" stroke="#f2f2f2" stroke-width=".3">0,4358</text>
<text x="1310.9" y="908.4" font-size="19.3" fill="#f2f2f2" textLength="78.5" lengthAdjust="spacingAndGlyphs" stroke="#f2f2f2" stroke-width=".3">0,4682</text>
<text x="1435.6" y="908.4" font-size="19.3" fill="#f2f2f2" textLength="78.5" lengthAdjust="spacingAndGlyphs" stroke="#f2f2f2" stroke-width=".3">0,5053</text>
<rect x="722.6" y="916.25" width="830.4" height="31.10" fill="#878787"/>
<rect x="722.6" y="916.25" width="23.199999999999932" height="31.10" fill="url(#gRowL)"/>
<text x="753.3" y="939.5" font-size="19.3" fill="#ededed" textLength="95" lengthAdjust="spacingAndGlyphs" stroke="#ededed" stroke-width=".3">Target Y</text>
<text x="936.8" y="939.5" font-size="19.3" fill="#ededed" textLength="107.5" lengthAdjust="spacingAndGlyphs" stroke="#ededed" stroke-width=".3">137,9219</text>
<text x="1061.5" y="939.5" font-size="19.3" fill="#ededed" textLength="107.5" lengthAdjust="spacingAndGlyphs" stroke="#ededed" stroke-width=".3">135,5010</text>
<text x="1186.2" y="939.5" font-size="19.3" fill="#ededed" textLength="107.5" lengthAdjust="spacingAndGlyphs" stroke="#ededed" stroke-width=".3">133,6408</text>
<text x="1310.9" y="939.5" font-size="19.3" fill="#ededed" textLength="107.5" lengthAdjust="spacingAndGlyphs" stroke="#ededed" stroke-width=".3">132,1810</text>
<text x="1435.6" y="939.5" font-size="19.3" fill="#ededed" textLength="107.5" lengthAdjust="spacingAndGlyphs" stroke="#ededed" stroke-width=".3">130,7697</text>
</g>
<g id="sec_bar">
<rect x="0" y="977" width="1912" height="63" fill="url(#gBar)"/>
<path d="M1 1040v-58a4 4 0 0 1 4-4h37a4 4 0 0 1 4 4v58z" fill="url(#gSw)"/>
<circle cx="23.5" cy="986" r="7" fill="#7a7a7a"/><path d="M19.3 988.3h8.4l-4.2-4.8z" fill="#222"/>
<rect x="6" y="1004" width="35.5" height="30" rx="3" fill="#ffff00"/>
<path d="M52 1040v-58a4 4 0 0 1 4-4h142a4 4 0 0 1 4 4v58z" fill="url(#gSw)"/>
<rect x="57.5" y="983.5" width="140" height="35.5" rx="3" fill="#c3c5a6"/>
<text x="127.3" y="1033.5" font-size="10.5" fill="#2a2a2a" text-anchor="middle" textLength="20.5" lengthAdjust="spacingAndGlyphs">20%</text>
<path d="M204 1040v-58a4 4 0 0 1 4-4h142a4 4 0 0 1 4 4v58z" fill="url(#gSw)"/>
<rect x="209.5" y="983.5" width="140" height="35.5" rx="3" fill="#c4c48a"/>
<text x="279.3" y="1033.5" font-size="10.5" fill="#2a2a2a" text-anchor="middle" textLength="20.5" lengthAdjust="spacingAndGlyphs">40%</text>
<path d="M356 1040v-58a4 4 0 0 1 4-4h142a4 4 0 0 1 4 4v58z" fill="url(#gSw)"/>
<rect x="361.5" y="983.5" width="140" height="35.5" rx="3" fill="#c2c46e"/>
<text x="431.3" y="1033.5" font-size="10.5" fill="#2a2a2a" text-anchor="middle" textLength="20.5" lengthAdjust="spacingAndGlyphs">60%</text>
<path d="M508 1040v-58a4 4 0 0 1 4-4h142a4 4 0 0 1 4 4v58z" fill="url(#gSw)"/>
<rect x="513.5" y="983.5" width="140" height="35.5" rx="3" fill="#c3c24c"/>
<text x="583.3" y="1033.5" font-size="10.5" fill="#2a2a2a" text-anchor="middle" textLength="20.5" lengthAdjust="spacingAndGlyphs">80%</text>
<path d="M660 1040v-58a4 4 0 0 1 4-4h142a4 4 0 0 1 4 4v58z" fill="#1c1c1c"/>
<rect x="665.5" y="983.5" width="140" height="35.5" rx="3" fill="#c6c500"/>
<text x="735.3" y="1033.5" font-size="10.5" fill="#fff" text-anchor="middle" textLength="27" lengthAdjust="spacingAndGlyphs" font-weight="bold">100%</text>
<path d="M1597 1040v-58a4 4 0 0 1 4-4h40a4 4 0 0 1 4 4v58z" fill="url(#gCt)"/>
<line x1="1597" y1="996.3" x2="1645" y2="996.3" stroke="#5a5a5a" stroke-width="1"/>
<line x1="1597" y1="997.3" x2="1645" y2="997.3" stroke="#b0b0b0" stroke-width="0.8"/>
<circle cx="1621" cy="986.5" r="7" fill="#888"/><path d="M1616.8 988.6h8.4l-4.2-4.8z" fill="#222"/>
<rect x="1606.3" y="1003.2" width="29.4" height="28.6" rx="3.5" fill="#b8b8b8" stroke="#1c1c1c" stroke-width="2"/>
<rect x="1613.8" y="1011.3" width="14.4" height="13.3" fill="#000"/>
<path d="M1646.5 1008v-27a3 3 0 0 1 3-3h39.200000000000045a3 3 0 0 1 3 3v27z" fill="url(#gCt)"/>
<circle cx="1669.4" cy="993" r="10" fill="url(#gDisc)"/>
<path d="M1692.7 1008v-27a3 3 0 0 1 3-3h38.5a3 3 0 0 1 3 3v27z" fill="url(#gCt)"/>
<circle cx="1715.2" cy="993" r="10" fill="url(#gDisc)"/>
<path d="M1738.2 1008v-27a3 3 0 0 1 3-3h37.700000000000045a3 3 0 0 1 3 3v27z" fill="url(#gCt)"/>
<circle cx="1760.4" cy="993" r="10" fill="url(#gDisc)"/>
<path d="M1782.9 1008v-27a3 3 0 0 1 3-3h38.09999999999991a3 3 0 0 1 3 3v27z" fill="url(#gCt)"/>
<circle cx="1805.2" cy="993" r="10" fill="url(#gDisc)"/>
<path d="M1828.0 1008v-27a3 3 0 0 1 3-3h37.5a3 3 0 0 1 3 3v27z" fill="url(#gCt)"/>
<circle cx="1850.0" cy="993" r="10" fill="url(#gDisc)"/>
<rect x="1665.3999999999999" y="989" width="8" height="8" fill="#2c2c2c"/>
<path d="M1711.8 988l8.5 5-8.5 5z" fill="#2c2c2c"/>
<path d="M1757.4 988.5h-2.5v9h2.5M1763.4 988.5h2.5v9h-2.5" fill="none" stroke="#2c2c2c" stroke-width="1.5"/>
<text x="1760.4" y="994.8" font-size="7" fill="#2c2c2c" text-anchor="middle" font-weight="bold">···</text>
<text x="1805.2" y="997.5" font-size="15" fill="#2c2c2c" text-anchor="middle" font-weight="bold">∞</text>
<path d="M1845.0 992a5.2 5.2 0 0 1 9.6-2.2M1855.0 994a5.2 5.2 0 0 1-9.6 2.2" fill="none" stroke="#2c2c2c" stroke-width="2"/>
<path d="M1855.6 987v4.4h-4.4zM1844.5 999v-4.4h4.4z" fill="#2c2c2c"/>
<rect x="1872.5" y="978" width="40" height="30.5" fill="#242424"/>
<circle cx="1896.5" cy="993" r="10.5" fill="#333"/>
<path d="M1646.5 1040v-27.500a3 3 0 0 1 3-3h129.5a3 3 0 0 1 3 3v27.500z" fill="url(#gNav)"/>
<path d="M1783.5 1040v-27.500a3 3 0 0 1 3-3h130v30.500z" fill="url(#gNav)"/>
<circle cx="1676.7" cy="1024.3" r="9.3" fill="url(#gDisc)"/><circle cx="1890.4" cy="1024.3" r="9.3" fill="url(#gDisc)"/>
<path d="M1676 1020l-4 4.3 4 4.300M1681 1020l-4 4.3 4 4.300" fill="none" stroke="#3a3a3a" stroke-width="1.4"/>
<path d="M1886 1020l4 4.3-4 4.300M1891 1020l4 4.3-4 4.300" fill="none" stroke="#3a3a3a" stroke-width="1.4"/>
<text x="1703.5" y="1032" font-size="22" fill="#303030" textLength="50.5" lengthAdjust="spacingAndGlyphs">Back</text>
<text x="1810" y="1032" font-size="22" fill="#303030" textLength="52" lengthAdjust="spacingAndGlyphs">Next</text>
</g>
</svg>
</body></html>
